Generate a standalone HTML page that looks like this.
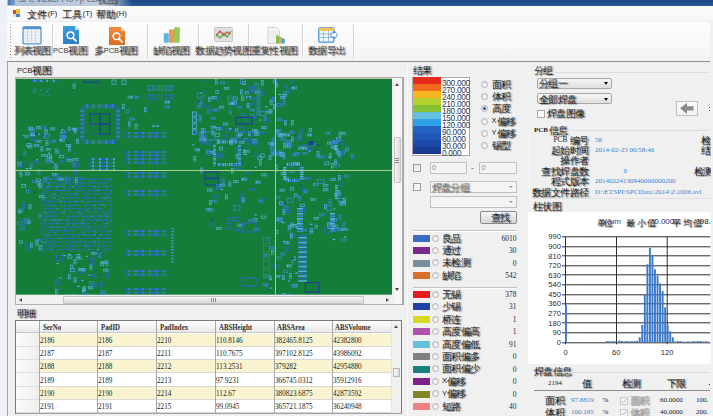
<!DOCTYPE html><html><head><meta charset="utf-8"><style>
*{margin:0;padding:0;box-sizing:border-box}
html,body{width:713px;height:416px;overflow:hidden;background:#f0f0f0;font-family:"Liberation Sans",sans-serif;color:#1a1a1a}
.a{position:absolute;white-space:nowrap}
.t{font-size:7.5px;line-height:8px}
.m{font-family:"Liberation Serif",serif}
.tri{position:absolute;width:0;height:0;border-left:2.5px solid transparent;border-right:2.5px solid transparent;border-top:3px solid #404040}
.triu{position:absolute;width:0;height:0;border-left:2.5px solid transparent;border-right:2.5px solid transparent;border-bottom:3px solid #505050}
.tril{position:absolute;width:0;height:0;border-top:2.5px solid transparent;border-bottom:2.5px solid transparent;border-right:3px solid #505050}
.trir{position:absolute;width:0;height:0;border-top:2.5px solid transparent;border-bottom:2.5px solid transparent;border-left:3px solid #505050}
.sep{position:absolute;width:2px;background:#d4d4d4;border-right:1px solid #fff}
.tb{font-size:7.5px;line-height:8px;text-align:center;color:#3c3c3c;--ls:-0.75px}
.cb{position:absolute;width:8px;height:8px;border:1px solid #9a9a9a;background:linear-gradient(#e4e4e4,#fafafa)}
.rb{position:absolute;width:7px;height:7px;border-radius:50%;border:0.8px solid #b4b4b4;background:radial-gradient(circle at 55% 60%,#fafafa 20%,#d4d4d4 100%)}
.combo{position:absolute;border:1px solid #a8a8a8;border-radius:2px;background:linear-gradient(#f6f6f6,#dedede)}
.inp{position:absolute;border:1px solid #c0c0c0;background:#f4f4f4}
.sw{position:absolute;width:17px;height:7px}
.c{position:relative;top:1.5px;font-size:1.35em;line-height:0;letter-spacing:var(--ls,-0.6px);text-shadow:1px 1px 0 rgba(40,40,40,.45),2px 0 0 rgba(40,40,40,.25)}
</style></head><body>
<div class="a" style="left:0;top:0;width:7px;height:416px;background:#edf1f7"></div>
<div class="a" style="left:7px;top:0;width:706px;height:6px;background:linear-gradient(#1c4682,#2a5a98)"></div>
<div class="a" style="left:7px;top:0;width:125px;height:6px;background:linear-gradient(90deg,#b4c2d6 0,#c2cede 80%,rgba(194,206,222,0) 100%)"></div>
<div class="a" style="left:8px;top:0;width:7px;height:5px;background:linear-gradient(90deg,#4a7ab8,#7aa0c8)"></div>
<div class="a t" style="left:19px;top:-4.5px;color:#505a68;font-size:7.5px">SPC Viewer Pro - [PCB<span class="c">视图</span>]</div>
<div class="a" style="left:7px;top:6px;width:706px;height:15px;background:linear-gradient(#fafbfc,#f4f6f8)"></div>
<div class="a" style="left:13px;top:10px;width:4px;height:4px;background:#d84030"></div>
<div class="a" style="left:16px;top:9px;width:4px;height:5px;background:#f0c030"></div>
<div class="a" style="left:16px;top:14px;width:4px;height:3px;background:#4a80d0"></div>
<div class="a" style="left:13px;top:14px;width:3px;height:3px;background:#e0e0e0"></div>
<div class="a t" style="left:27px;top:10px;font-size:7.6px;--ls:0.35px"><span class="c">文件</span>(F)</div>
<div class="a t" style="left:62px;top:10px;font-size:7.6px;--ls:0.35px"><span class="c">工具</span>(T)</div>
<div class="a t" style="left:95.5px;top:10px;font-size:7.6px;--ls:0.35px"><span class="c">帮助</span>(H)</div>
<div class="a" style="left:7px;top:21px;width:703px;height:41px;background:linear-gradient(#fdfdfd,#f8f8f8 60%,#f2f2f2);border-top:1px solid #eeeeee;border-bottom:1px solid #8e8e8e;border-top-left-radius:2px"></div>
<div class="a" style="left:10px;top:24px;width:1px;height:1px;background:#a0a0a0"></div>
<div class="a" style="left:10px;top:27px;width:1px;height:1px;background:#a0a0a0"></div>
<div class="a" style="left:10px;top:30px;width:1px;height:1px;background:#a0a0a0"></div>
<div class="a" style="left:10px;top:33px;width:1px;height:1px;background:#a0a0a0"></div>
<div class="a" style="left:10px;top:36px;width:1px;height:1px;background:#a0a0a0"></div>
<div class="a" style="left:10px;top:39px;width:1px;height:1px;background:#a0a0a0"></div>
<div class="a" style="left:10px;top:42px;width:1px;height:1px;background:#a0a0a0"></div>
<div class="a" style="left:10px;top:45px;width:1px;height:1px;background:#a0a0a0"></div>
<div class="a" style="left:10px;top:48px;width:1px;height:1px;background:#a0a0a0"></div>
<div class="a" style="left:10px;top:51px;width:1px;height:1px;background:#a0a0a0"></div>
<div class="a" style="left:10px;top:54px;width:1px;height:1px;background:#a0a0a0"></div>
<div class="a" style="left:10px;top:57px;width:1px;height:1px;background:#a0a0a0"></div>
<div class="sep" style="left:51.5px;top:24px;height:34px"></div>
<div class="sep" style="left:147px;top:24px;height:34px"></div>
<div class="sep" style="left:197.5px;top:24px;height:34px"></div>
<div class="sep" style="left:248px;top:24px;height:34px"></div>
<div class="sep" style="left:302px;top:24px;height:34px"></div>
<div class="sep" style="left:352.5px;top:24px;height:34px"></div>
<div class="a tb" style="left:2px;width:60px;top:46.5px"><span class="c">列表视图</span></div>
<div class="a tb" style="left:40px;width:60px;top:46.5px">PCB<span class="c">视图</span></div>
<div class="a tb" style="left:86px;width:60px;top:46.5px"><span class="c">多</span>PCB<span class="c">视图</span></div>
<div class="a tb" style="left:141px;width:60px;top:46.5px"><span class="c">缺陷视图</span></div>
<div class="a tb" style="left:193px;width:60px;top:46.5px"><span class="c">数据趋势视图</span></div>
<div class="a tb" style="left:244px;width:60px;top:46.5px"><span class="c">重复性视图</span></div>
<div class="a tb" style="left:296.5px;width:60px;top:46.5px"><span class="c">数据导出</span></div>
<svg class="a" style="left:22px;top:26px" width="20" height="19" viewBox="0 0 20 19"><rect x="1" y="0.8" width="18" height="17" rx="1.2" fill="#f2f4f6" stroke="#4f94d2" stroke-width="1.3"/><rect x="1" y="0.8" width="18" height="2.4" fill="#4f94d2"/><line x1="5.5" y1="3" x2="5.5" y2="17.5" stroke="#c8cdd2" stroke-width="0.8"/><line x1="9.5" y1="3" x2="9.5" y2="17.5" stroke="#c8cdd2" stroke-width="0.8"/><line x1="13.5" y1="3" x2="13.5" y2="17.5" stroke="#c8cdd2" stroke-width="0.8"/><line x1="1.5" y1="6" x2="18.5" y2="6" stroke="#d8dce0" stroke-width="0.7"/><line x1="1.5" y1="9" x2="18.5" y2="9" stroke="#d8dce0" stroke-width="0.7"/><line x1="1.5" y1="12" x2="18.5" y2="12" stroke="#d8dce0" stroke-width="0.7"/><line x1="1.5" y1="15" x2="18.5" y2="15" stroke="#d8dce0" stroke-width="0.7"/></svg>
<svg class="a" style="left:63px;top:26.2px" width="16" height="18" viewBox="0 0 16 18"><defs><linearGradient id="gb" x1="0" y1="0" x2="0" y2="1"><stop offset="0" stop-color="#3f9ddb"/><stop offset="1" stop-color="#2a7fc0"/></linearGradient></defs><path d="M0 0 H12 L16 4 V18 H0 Z" fill="url(#gb)"/><path d="M12 0 V4 H16" fill="#fff" opacity="0.6"/><circle cx="7.5" cy="9.3" r="3.3" fill="none" stroke="#fff" stroke-width="1.5"/><line x1="10" y1="11.8" x2="13" y2="14.8" stroke="#fff" stroke-width="1.8" stroke-linecap="round"/></svg>
<svg class="a" style="left:108.6px;top:27px" width="16" height="18" viewBox="0 0 16 18"><defs><linearGradient id="go" x1="0" y1="0" x2="0" y2="1"><stop offset="0" stop-color="#f28a3c"/><stop offset="1" stop-color="#dc6a22"/></linearGradient></defs><path d="M0 0 H12 L16 4 V18 H0 Z" fill="url(#go)"/><path d="M12 0 V4 H16" fill="#fff" opacity="0.6"/><circle cx="7.5" cy="9.3" r="3.3" fill="none" stroke="#fff" stroke-width="1.5"/><line x1="10" y1="11.8" x2="13" y2="14.8" stroke="#fff" stroke-width="1.8" stroke-linecap="round"/></svg>
<svg class="a" style="left:163px;top:27px" width="18" height="17" viewBox="0 0 18 17"><rect x="0.8" y="6.3" width="5" height="9.5" rx="1" fill="#5ab4e6"/><rect x="6" y="2.5" width="6" height="13.3" rx="1" fill="#ea9a50"/><rect x="11.2" y="0.3" width="5.6" height="15.5" rx="1" fill="#94cc5c"/></svg>
<svg class="a" style="left:214px;top:26.8px" width="19" height="15" viewBox="0 0 19 15"><rect x="0.5" y="0.5" width="18" height="14" rx="1" fill="#e2e2e2" stroke="#bdbdbd" stroke-width="0.8"/><line x1="1" y1="4" x2="18" y2="4" stroke="#d0d0d0" stroke-width="0.6"/><line x1="1" y1="7" x2="18" y2="7" stroke="#d0d0d0" stroke-width="0.6"/><line x1="1" y1="10" x2="18" y2="10" stroke="#d0d0d0" stroke-width="0.6"/><polyline points="2,9 6,4 10,8.5 13,5 17,7" fill="none" stroke="#dc4a4a" stroke-width="1.3"/><polyline points="2,7 6,11 10,6 13,10 17,4" fill="none" stroke="#5aaa46" stroke-width="1.3"/></svg>
<svg class="a" style="left:267px;top:26.8px" width="18" height="17" viewBox="0 0 18 17"><path d="M1 0.5 H9.5 L12.5 3.5 V16.3 H1 Z" fill="#f4f4f4" stroke="#c4c4c4" stroke-width="0.8"/><line x1="2.5" y1="5" x2="11" y2="5" stroke="#d4d4d4" stroke-width="0.7"/><line x1="2.5" y1="7.5" x2="11" y2="7.5" stroke="#d4d4d4" stroke-width="0.7"/><line x1="2.5" y1="10" x2="11" y2="10" stroke="#d4d4d4" stroke-width="0.7"/><rect x="9" y="8.5" width="3" height="8" fill="#7cc04a"/><rect x="12" y="10" width="3" height="6.5" fill="#eea040"/><rect x="15" y="11.5" width="2.6" height="5" fill="#3c98d8"/></svg>
<svg class="a" style="left:318px;top:27px" width="20" height="16" viewBox="0 0 20 16"><rect x="0.8" y="0.8" width="15" height="14.4" rx="1" fill="#f4f8fc" stroke="#4a90d0" stroke-width="1.2"/><rect x="0.8" y="0.8" width="15" height="3" fill="#f2c24a"/><line x1="5.5" y1="3.8" x2="5.5" y2="15" stroke="#7ab0e0" stroke-width="0.8"/><line x1="10.5" y1="3.8" x2="10.5" y2="15" stroke="#7ab0e0" stroke-width="0.8"/><line x1="1" y1="7" x2="15.5" y2="7" stroke="#7ab0e0" stroke-width="0.8"/><line x1="1" y1="10.5" x2="15.5" y2="10.5" stroke="#7ab0e0" stroke-width="0.8"/><path d="M13 6 L16.5 6 L16.5 4 L19.5 8 L16.5 12 L16.5 10 L13 10 Z" fill="#fff" stroke="#4a90d0" stroke-width="0.9"/></svg>
<div class="a" style="left:7px;top:62px;width:1px;height:354px;background:#a4a4a4"></div>
<div class="a" style="left:407px;top:62px;width:1px;height:354px;background:#f8f8f8"></div>
<div class="a t" style="left:17px;top:66.5px">PCB<span class="c">视图</span></div>
<div class="a" style="left:15px;top:77px;width:388px;height:228px;border:1px solid #b0b0b0;background:#f0f0f0"></div>
<svg class="a" style="left:16px;top:78px" width="376" height="216.7" viewBox="16 78 376 216.7"><rect x="16" y="78" width="376" height="216.7" fill="#157d3a"/><rect x="32.0" y="79.6" width="1.3" height="2.5" fill="#2d68cc"/><rect x="34.1" y="79.6" width="1.3" height="2.5" fill="#58b0ea"/><rect x="36.2" y="79.6" width="1.3" height="2.5" fill="#2d68cc"/><rect x="38.3" y="79.6" width="1.3" height="2.5" fill="#2d68cc"/><rect x="40.4" y="79.6" width="1.3" height="2.5" fill="#58b0ea"/><rect x="42.5" y="79.6" width="1.3" height="2.5" fill="#2d68cc"/><rect x="44.6" y="79.6" width="1.3" height="2.5" fill="#2d68cc"/><rect x="46.7" y="79.6" width="1.3" height="2.5" fill="#58b0ea"/><rect x="48.8" y="79.6" width="1.3" height="2.5" fill="#2d68cc"/><rect x="50.9" y="79.6" width="1.3" height="2.5" fill="#2d68cc"/><rect x="53.0" y="79.6" width="1.3" height="2.5" fill="#58b0ea"/><rect x="55.1" y="79.6" width="1.3" height="2.5" fill="#2d68cc"/><rect x="57.2" y="79.6" width="1.3" height="2.5" fill="#2d68cc"/><rect x="84.3" y="76.0" width="14.6" height="6.2" fill="none" stroke="#1f3e9c" stroke-width="1"/><rect x="112.0" y="80.0" width="4.0" height="4.5" fill="none" stroke="#58b0ea" stroke-width="0.7"/><rect x="122.0" y="80.0" width="4.0" height="4.5" fill="none" stroke="#58b0ea" stroke-width="0.7"/><rect x="40.4" y="89.1" width="1.2" height="1.2" fill="#3c86d8"/><rect x="48.9" y="88.5" width="1.2" height="1.2" fill="#3c86d8"/><rect x="45.9" y="90.6" width="1.2" height="1.2" fill="#3c86d8"/><rect x="33.5" y="91.6" width="1.2" height="1.2" fill="#3c86d8"/><rect x="33.0" y="91.0" width="1.2" height="1.2" fill="#3c86d8"/><rect x="33.8" y="88.6" width="1.2" height="1.2" fill="#3c86d8"/><rect x="43.0" y="93.8" width="1.2" height="1.2" fill="#3c86d8"/><rect x="35.2" y="89.6" width="1.2" height="1.2" fill="#3c86d8"/><rect x="48.3" y="94.6" width="1.2" height="1.2" fill="#3c86d8"/><rect x="47.0" y="90.8" width="1.2" height="1.2" fill="#3c86d8"/><rect x="73.0" y="84.0" width="2.2" height="1.8" fill="none" stroke="#58b0ea" stroke-width="0.6"/><rect x="73.0" y="86.8" width="2.2" height="1.8" fill="none" stroke="#58b0ea" stroke-width="0.6"/><rect x="128.0" y="96.0" width="1.8" height="2.2" fill="none" stroke="#58b0ea" stroke-width="0.6"/><rect x="130.8" y="96.0" width="1.8" height="2.2" fill="none" stroke="#58b0ea" stroke-width="0.6"/><rect x="134.0" y="96.0" width="1.8" height="2.2" fill="none" stroke="#3c86d8" stroke-width="0.6"/><rect x="136.8" y="96.0" width="1.8" height="2.2" fill="none" stroke="#3c86d8" stroke-width="0.6"/><rect x="84.3" y="104.2" width="1.3" height="4.2" fill="#2d68cc"/><rect x="86.4" y="104.2" width="1.3" height="4.2" fill="#3c86d8"/><rect x="88.5" y="104.2" width="1.3" height="4.2" fill="#2d68cc"/><rect x="90.6" y="104.2" width="1.3" height="4.2" fill="#2d68cc"/><rect x="92.7" y="104.2" width="1.3" height="4.2" fill="#3c86d8"/><rect x="94.8" y="104.2" width="1.3" height="4.2" fill="#2d68cc"/><rect x="96.9" y="104.2" width="1.3" height="4.2" fill="#2d68cc"/><rect x="99.0" y="104.2" width="1.3" height="4.2" fill="#3c86d8"/><rect x="101.1" y="104.2" width="1.3" height="4.2" fill="#2d68cc"/><rect x="103.2" y="104.2" width="1.3" height="4.2" fill="#2d68cc"/><rect x="105.3" y="104.2" width="1.3" height="4.2" fill="#3c86d8"/><rect x="107.4" y="104.2" width="1.3" height="4.2" fill="#2d68cc"/><rect x="109.5" y="104.2" width="1.3" height="4.2" fill="#2d68cc"/><rect x="111.6" y="104.2" width="1.3" height="4.2" fill="#3c86d8"/><rect x="113.7" y="104.2" width="1.3" height="4.2" fill="#2d68cc"/><rect x="84.3" y="139.8" width="1.3" height="4.2" fill="#2d68cc"/><rect x="86.4" y="139.8" width="1.3" height="4.2" fill="#3c86d8"/><rect x="88.5" y="139.8" width="1.3" height="4.2" fill="#2d68cc"/><rect x="90.6" y="139.8" width="1.3" height="4.2" fill="#2d68cc"/><rect x="92.7" y="139.8" width="1.3" height="4.2" fill="#3c86d8"/><rect x="94.8" y="139.8" width="1.3" height="4.2" fill="#2d68cc"/><rect x="96.9" y="139.8" width="1.3" height="4.2" fill="#2d68cc"/><rect x="99.0" y="139.8" width="1.3" height="4.2" fill="#3c86d8"/><rect x="101.1" y="139.8" width="1.3" height="4.2" fill="#2d68cc"/><rect x="103.2" y="139.8" width="1.3" height="4.2" fill="#2d68cc"/><rect x="105.3" y="139.8" width="1.3" height="4.2" fill="#3c86d8"/><rect x="107.4" y="139.8" width="1.3" height="4.2" fill="#2d68cc"/><rect x="109.5" y="139.8" width="1.3" height="4.2" fill="#2d68cc"/><rect x="111.6" y="139.8" width="1.3" height="4.2" fill="#3c86d8"/><rect x="113.7" y="139.8" width="1.3" height="4.2" fill="#2d68cc"/><rect x="80.3" y="108.5" width="4.2" height="1.3" fill="#2d68cc"/><rect x="80.3" y="110.6" width="4.2" height="1.3" fill="#3c86d8"/><rect x="80.3" y="112.7" width="4.2" height="1.3" fill="#2d68cc"/><rect x="80.3" y="114.8" width="4.2" height="1.3" fill="#3c86d8"/><rect x="80.3" y="116.9" width="4.2" height="1.3" fill="#2d68cc"/><rect x="80.3" y="119.0" width="4.2" height="1.3" fill="#3c86d8"/><rect x="80.3" y="121.1" width="4.2" height="1.3" fill="#2d68cc"/><rect x="80.3" y="123.2" width="4.2" height="1.3" fill="#3c86d8"/><rect x="80.3" y="125.3" width="4.2" height="1.3" fill="#2d68cc"/><rect x="80.3" y="127.4" width="4.2" height="1.3" fill="#3c86d8"/><rect x="80.3" y="129.5" width="4.2" height="1.3" fill="#2d68cc"/><rect x="80.3" y="131.6" width="4.2" height="1.3" fill="#3c86d8"/><rect x="80.3" y="133.7" width="4.2" height="1.3" fill="#2d68cc"/><rect x="80.3" y="135.8" width="4.2" height="1.3" fill="#3c86d8"/><rect x="80.3" y="137.9" width="4.2" height="1.3" fill="#2d68cc"/><rect x="115.9" y="108.5" width="4.2" height="1.3" fill="#2d68cc"/><rect x="115.9" y="110.6" width="4.2" height="1.3" fill="#3c86d8"/><rect x="115.9" y="112.7" width="4.2" height="1.3" fill="#2d68cc"/><rect x="115.9" y="114.8" width="4.2" height="1.3" fill="#3c86d8"/><rect x="115.9" y="116.9" width="4.2" height="1.3" fill="#2d68cc"/><rect x="115.9" y="119.0" width="4.2" height="1.3" fill="#3c86d8"/><rect x="115.9" y="121.1" width="4.2" height="1.3" fill="#2d68cc"/><rect x="115.9" y="123.2" width="4.2" height="1.3" fill="#3c86d8"/><rect x="115.9" y="125.3" width="4.2" height="1.3" fill="#2d68cc"/><rect x="115.9" y="127.4" width="4.2" height="1.3" fill="#3c86d8"/><rect x="115.9" y="129.5" width="4.2" height="1.3" fill="#2d68cc"/><rect x="115.9" y="131.6" width="4.2" height="1.3" fill="#3c86d8"/><rect x="115.9" y="133.7" width="4.2" height="1.3" fill="#2d68cc"/><rect x="115.9" y="135.8" width="4.2" height="1.3" fill="#3c86d8"/><rect x="115.9" y="137.9" width="4.2" height="1.3" fill="#2d68cc"/><rect x="89.8" y="114.0" width="10.0" height="10.0" fill="none" stroke="#1f3e9c" stroke-width="1.1"/><rect x="99.8" y="114.0" width="10.0" height="10.0" fill="none" stroke="#1f3e9c" stroke-width="1.1"/><rect x="89.8" y="124.0" width="10.0" height="10.0" fill="none" stroke="#2a5a90" stroke-width="0.9"/><rect x="99.8" y="124.0" width="10.0" height="10.0" fill="none" stroke="#1f3e9c" stroke-width="1.1"/><rect x="126.0" y="132.0" width="1.5" height="2.2" fill="#2d68cc"/><rect x="128.3" y="132.0" width="1.5" height="2.2" fill="#3c86d8"/><rect x="130.6" y="132.0" width="1.5" height="2.2" fill="#2d68cc"/><rect x="132.9" y="132.0" width="1.5" height="2.2" fill="#2d68cc"/><rect x="135.2" y="132.0" width="1.5" height="2.2" fill="#3c86d8"/><rect x="137.5" y="132.0" width="1.5" height="2.2" fill="#2d68cc"/><rect x="139.8" y="132.0" width="1.5" height="2.2" fill="#2d68cc"/><rect x="142.1" y="132.0" width="1.5" height="2.2" fill="#3c86d8"/><rect x="144.4" y="132.0" width="1.5" height="2.2" fill="#2d68cc"/><rect x="146.7" y="132.0" width="1.5" height="2.2" fill="#2d68cc"/><rect x="149.0" y="132.0" width="1.5" height="2.2" fill="#3c86d8"/><rect x="151.3" y="132.0" width="1.5" height="2.2" fill="#2d68cc"/><rect x="153.6" y="132.0" width="1.5" height="2.2" fill="#2d68cc"/><rect x="155.9" y="132.0" width="1.5" height="2.2" fill="#3c86d8"/><rect x="158.2" y="132.0" width="1.5" height="2.2" fill="#2d68cc"/><rect x="160.5" y="132.0" width="1.5" height="2.2" fill="#2d68cc"/><rect x="162.8" y="132.0" width="1.5" height="2.2" fill="#3c86d8"/><rect x="165.1" y="132.0" width="1.5" height="2.2" fill="#2d68cc"/><rect x="126.0" y="135.5" width="1.5" height="2.2" fill="#2d68cc"/><rect x="128.3" y="135.5" width="1.5" height="2.2" fill="#3c86d8"/><rect x="130.6" y="135.5" width="1.5" height="2.2" fill="#2d68cc"/><rect x="132.9" y="135.5" width="1.5" height="2.2" fill="#2d68cc"/><rect x="135.2" y="135.5" width="1.5" height="2.2" fill="#3c86d8"/><rect x="137.5" y="135.5" width="1.5" height="2.2" fill="#2d68cc"/><rect x="139.8" y="135.5" width="1.5" height="2.2" fill="#2d68cc"/><rect x="142.1" y="135.5" width="1.5" height="2.2" fill="#3c86d8"/><rect x="144.4" y="135.5" width="1.5" height="2.2" fill="#2d68cc"/><rect x="146.7" y="135.5" width="1.5" height="2.2" fill="#2d68cc"/><rect x="149.0" y="135.5" width="1.5" height="2.2" fill="#3c86d8"/><rect x="151.3" y="135.5" width="1.5" height="2.2" fill="#2d68cc"/><rect x="153.6" y="135.5" width="1.5" height="2.2" fill="#2d68cc"/><rect x="155.9" y="135.5" width="1.5" height="2.2" fill="#3c86d8"/><rect x="158.2" y="135.5" width="1.5" height="2.2" fill="#2d68cc"/><rect x="160.5" y="135.5" width="1.5" height="2.2" fill="#2d68cc"/><rect x="162.8" y="135.5" width="1.5" height="2.2" fill="#3c86d8"/><rect x="165.1" y="135.5" width="1.5" height="2.2" fill="#2d68cc"/><rect x="126.0" y="151.0" width="1.5" height="2.2" fill="#2d68cc"/><rect x="128.3" y="151.0" width="1.5" height="2.2" fill="#3c86d8"/><rect x="130.6" y="151.0" width="1.5" height="2.2" fill="#2d68cc"/><rect x="132.9" y="151.0" width="1.5" height="2.2" fill="#2d68cc"/><rect x="135.2" y="151.0" width="1.5" height="2.2" fill="#3c86d8"/><rect x="137.5" y="151.0" width="1.5" height="2.2" fill="#2d68cc"/><rect x="139.8" y="151.0" width="1.5" height="2.2" fill="#2d68cc"/><rect x="142.1" y="151.0" width="1.5" height="2.2" fill="#3c86d8"/><rect x="144.4" y="151.0" width="1.5" height="2.2" fill="#2d68cc"/><rect x="146.7" y="151.0" width="1.5" height="2.2" fill="#2d68cc"/><rect x="149.0" y="151.0" width="1.5" height="2.2" fill="#3c86d8"/><rect x="151.3" y="151.0" width="1.5" height="2.2" fill="#2d68cc"/><rect x="153.6" y="151.0" width="1.5" height="2.2" fill="#2d68cc"/><rect x="155.9" y="151.0" width="1.5" height="2.2" fill="#3c86d8"/><rect x="158.2" y="151.0" width="1.5" height="2.2" fill="#2d68cc"/><rect x="160.5" y="151.0" width="1.5" height="2.2" fill="#2d68cc"/><rect x="162.8" y="151.0" width="1.5" height="2.2" fill="#3c86d8"/><rect x="165.1" y="151.0" width="1.5" height="2.2" fill="#2d68cc"/><rect x="126.0" y="154.5" width="1.5" height="2.2" fill="#2d68cc"/><rect x="128.3" y="154.5" width="1.5" height="2.2" fill="#3c86d8"/><rect x="130.6" y="154.5" width="1.5" height="2.2" fill="#2d68cc"/><rect x="132.9" y="154.5" width="1.5" height="2.2" fill="#2d68cc"/><rect x="135.2" y="154.5" width="1.5" height="2.2" fill="#3c86d8"/><rect x="137.5" y="154.5" width="1.5" height="2.2" fill="#2d68cc"/><rect x="139.8" y="154.5" width="1.5" height="2.2" fill="#2d68cc"/><rect x="142.1" y="154.5" width="1.5" height="2.2" fill="#3c86d8"/><rect x="144.4" y="154.5" width="1.5" height="2.2" fill="#2d68cc"/><rect x="146.7" y="154.5" width="1.5" height="2.2" fill="#2d68cc"/><rect x="149.0" y="154.5" width="1.5" height="2.2" fill="#3c86d8"/><rect x="151.3" y="154.5" width="1.5" height="2.2" fill="#2d68cc"/><rect x="153.6" y="154.5" width="1.5" height="2.2" fill="#2d68cc"/><rect x="155.9" y="154.5" width="1.5" height="2.2" fill="#3c86d8"/><rect x="158.2" y="154.5" width="1.5" height="2.2" fill="#2d68cc"/><rect x="160.5" y="154.5" width="1.5" height="2.2" fill="#2d68cc"/><rect x="162.8" y="154.5" width="1.5" height="2.2" fill="#3c86d8"/><rect x="165.1" y="154.5" width="1.5" height="2.2" fill="#2d68cc"/><rect x="126.0" y="158.0" width="1.5" height="2.2" fill="#2d68cc"/><rect x="128.3" y="158.0" width="1.5" height="2.2" fill="#3c86d8"/><rect x="130.6" y="158.0" width="1.5" height="2.2" fill="#2d68cc"/><rect x="132.9" y="158.0" width="1.5" height="2.2" fill="#2d68cc"/><rect x="135.2" y="158.0" width="1.5" height="2.2" fill="#3c86d8"/><rect x="137.5" y="158.0" width="1.5" height="2.2" fill="#2d68cc"/><rect x="139.8" y="158.0" width="1.5" height="2.2" fill="#2d68cc"/><rect x="142.1" y="158.0" width="1.5" height="2.2" fill="#3c86d8"/><rect x="144.4" y="158.0" width="1.5" height="2.2" fill="#2d68cc"/><rect x="146.7" y="158.0" width="1.5" height="2.2" fill="#2d68cc"/><rect x="149.0" y="158.0" width="1.5" height="2.2" fill="#3c86d8"/><rect x="151.3" y="158.0" width="1.5" height="2.2" fill="#2d68cc"/><rect x="153.6" y="158.0" width="1.5" height="2.2" fill="#2d68cc"/><rect x="155.9" y="158.0" width="1.5" height="2.2" fill="#3c86d8"/><rect x="158.2" y="158.0" width="1.5" height="2.2" fill="#2d68cc"/><rect x="160.5" y="158.0" width="1.5" height="2.2" fill="#2d68cc"/><rect x="162.8" y="158.0" width="1.5" height="2.2" fill="#3c86d8"/><rect x="165.1" y="158.0" width="1.5" height="2.2" fill="#2d68cc"/><rect x="126.0" y="161.5" width="1.5" height="2.2" fill="#2d68cc"/><rect x="128.3" y="161.5" width="1.5" height="2.2" fill="#3c86d8"/><rect x="130.6" y="161.5" width="1.5" height="2.2" fill="#2d68cc"/><rect x="132.9" y="161.5" width="1.5" height="2.2" fill="#2d68cc"/><rect x="135.2" y="161.5" width="1.5" height="2.2" fill="#3c86d8"/><rect x="137.5" y="161.5" width="1.5" height="2.2" fill="#2d68cc"/><rect x="139.8" y="161.5" width="1.5" height="2.2" fill="#2d68cc"/><rect x="142.1" y="161.5" width="1.5" height="2.2" fill="#3c86d8"/><rect x="144.4" y="161.5" width="1.5" height="2.2" fill="#2d68cc"/><rect x="146.7" y="161.5" width="1.5" height="2.2" fill="#2d68cc"/><rect x="149.0" y="161.5" width="1.5" height="2.2" fill="#3c86d8"/><rect x="151.3" y="161.5" width="1.5" height="2.2" fill="#2d68cc"/><rect x="153.6" y="161.5" width="1.5" height="2.2" fill="#2d68cc"/><rect x="155.9" y="161.5" width="1.5" height="2.2" fill="#3c86d8"/><rect x="158.2" y="161.5" width="1.5" height="2.2" fill="#2d68cc"/><rect x="160.5" y="161.5" width="1.5" height="2.2" fill="#2d68cc"/><rect x="162.8" y="161.5" width="1.5" height="2.2" fill="#3c86d8"/><rect x="165.1" y="161.5" width="1.5" height="2.2" fill="#2d68cc"/><rect x="126.0" y="172.0" width="1.5" height="2.2" fill="#2d68cc"/><rect x="128.3" y="172.0" width="1.5" height="2.2" fill="#3c86d8"/><rect x="130.6" y="172.0" width="1.5" height="2.2" fill="#2d68cc"/><rect x="132.9" y="172.0" width="1.5" height="2.2" fill="#2d68cc"/><rect x="135.2" y="172.0" width="1.5" height="2.2" fill="#3c86d8"/><rect x="137.5" y="172.0" width="1.5" height="2.2" fill="#2d68cc"/><rect x="139.8" y="172.0" width="1.5" height="2.2" fill="#2d68cc"/><rect x="142.1" y="172.0" width="1.5" height="2.2" fill="#3c86d8"/><rect x="144.4" y="172.0" width="1.5" height="2.2" fill="#2d68cc"/><rect x="146.7" y="172.0" width="1.5" height="2.2" fill="#2d68cc"/><rect x="149.0" y="172.0" width="1.5" height="2.2" fill="#3c86d8"/><rect x="151.3" y="172.0" width="1.5" height="2.2" fill="#2d68cc"/><rect x="153.6" y="172.0" width="1.5" height="2.2" fill="#2d68cc"/><rect x="155.9" y="172.0" width="1.5" height="2.2" fill="#3c86d8"/><rect x="158.2" y="172.0" width="1.5" height="2.2" fill="#2d68cc"/><rect x="160.5" y="172.0" width="1.5" height="2.2" fill="#2d68cc"/><rect x="162.8" y="172.0" width="1.5" height="2.2" fill="#3c86d8"/><rect x="165.1" y="172.0" width="1.5" height="2.2" fill="#2d68cc"/><rect x="126.0" y="175.5" width="1.5" height="2.2" fill="#2d68cc"/><rect x="128.3" y="175.5" width="1.5" height="2.2" fill="#3c86d8"/><rect x="130.6" y="175.5" width="1.5" height="2.2" fill="#2d68cc"/><rect x="132.9" y="175.5" width="1.5" height="2.2" fill="#2d68cc"/><rect x="135.2" y="175.5" width="1.5" height="2.2" fill="#3c86d8"/><rect x="137.5" y="175.5" width="1.5" height="2.2" fill="#2d68cc"/><rect x="139.8" y="175.5" width="1.5" height="2.2" fill="#2d68cc"/><rect x="142.1" y="175.5" width="1.5" height="2.2" fill="#3c86d8"/><rect x="144.4" y="175.5" width="1.5" height="2.2" fill="#2d68cc"/><rect x="146.7" y="175.5" width="1.5" height="2.2" fill="#2d68cc"/><rect x="149.0" y="175.5" width="1.5" height="2.2" fill="#3c86d8"/><rect x="151.3" y="175.5" width="1.5" height="2.2" fill="#2d68cc"/><rect x="153.6" y="175.5" width="1.5" height="2.2" fill="#2d68cc"/><rect x="155.9" y="175.5" width="1.5" height="2.2" fill="#3c86d8"/><rect x="158.2" y="175.5" width="1.5" height="2.2" fill="#2d68cc"/><rect x="160.5" y="175.5" width="1.5" height="2.2" fill="#2d68cc"/><rect x="162.8" y="175.5" width="1.5" height="2.2" fill="#3c86d8"/><rect x="165.1" y="175.5" width="1.5" height="2.2" fill="#2d68cc"/><rect x="126.0" y="190.0" width="1.5" height="2.2" fill="#2d68cc"/><rect x="128.3" y="190.0" width="1.5" height="2.2" fill="#3c86d8"/><rect x="130.6" y="190.0" width="1.5" height="2.2" fill="#2d68cc"/><rect x="132.9" y="190.0" width="1.5" height="2.2" fill="#2d68cc"/><rect x="135.2" y="190.0" width="1.5" height="2.2" fill="#3c86d8"/><rect x="137.5" y="190.0" width="1.5" height="2.2" fill="#2d68cc"/><rect x="139.8" y="190.0" width="1.5" height="2.2" fill="#2d68cc"/><rect x="142.1" y="190.0" width="1.5" height="2.2" fill="#3c86d8"/><rect x="144.4" y="190.0" width="1.5" height="2.2" fill="#2d68cc"/><rect x="146.7" y="190.0" width="1.5" height="2.2" fill="#2d68cc"/><rect x="149.0" y="190.0" width="1.5" height="2.2" fill="#3c86d8"/><rect x="151.3" y="190.0" width="1.5" height="2.2" fill="#2d68cc"/><rect x="153.6" y="190.0" width="1.5" height="2.2" fill="#2d68cc"/><rect x="155.9" y="190.0" width="1.5" height="2.2" fill="#3c86d8"/><rect x="158.2" y="190.0" width="1.5" height="2.2" fill="#2d68cc"/><rect x="160.5" y="190.0" width="1.5" height="2.2" fill="#2d68cc"/><rect x="162.8" y="190.0" width="1.5" height="2.2" fill="#3c86d8"/><rect x="165.1" y="190.0" width="1.5" height="2.2" fill="#2d68cc"/><rect x="126.0" y="193.5" width="1.5" height="2.2" fill="#2d68cc"/><rect x="128.3" y="193.5" width="1.5" height="2.2" fill="#3c86d8"/><rect x="130.6" y="193.5" width="1.5" height="2.2" fill="#2d68cc"/><rect x="132.9" y="193.5" width="1.5" height="2.2" fill="#2d68cc"/><rect x="135.2" y="193.5" width="1.5" height="2.2" fill="#3c86d8"/><rect x="137.5" y="193.5" width="1.5" height="2.2" fill="#2d68cc"/><rect x="139.8" y="193.5" width="1.5" height="2.2" fill="#2d68cc"/><rect x="142.1" y="193.5" width="1.5" height="2.2" fill="#3c86d8"/><rect x="144.4" y="193.5" width="1.5" height="2.2" fill="#2d68cc"/><rect x="146.7" y="193.5" width="1.5" height="2.2" fill="#2d68cc"/><rect x="149.0" y="193.5" width="1.5" height="2.2" fill="#3c86d8"/><rect x="151.3" y="193.5" width="1.5" height="2.2" fill="#2d68cc"/><rect x="153.6" y="193.5" width="1.5" height="2.2" fill="#2d68cc"/><rect x="155.9" y="193.5" width="1.5" height="2.2" fill="#3c86d8"/><rect x="158.2" y="193.5" width="1.5" height="2.2" fill="#2d68cc"/><rect x="160.5" y="193.5" width="1.5" height="2.2" fill="#2d68cc"/><rect x="162.8" y="193.5" width="1.5" height="2.2" fill="#3c86d8"/><rect x="165.1" y="193.5" width="1.5" height="2.2" fill="#2d68cc"/><rect x="126.0" y="230.0" width="1.5" height="2.2" fill="#2d68cc"/><rect x="128.3" y="230.0" width="1.5" height="2.2" fill="#3c86d8"/><rect x="130.6" y="230.0" width="1.5" height="2.2" fill="#2d68cc"/><rect x="132.9" y="230.0" width="1.5" height="2.2" fill="#2d68cc"/><rect x="135.2" y="230.0" width="1.5" height="2.2" fill="#3c86d8"/><rect x="137.5" y="230.0" width="1.5" height="2.2" fill="#2d68cc"/><rect x="139.8" y="230.0" width="1.5" height="2.2" fill="#2d68cc"/><rect x="142.1" y="230.0" width="1.5" height="2.2" fill="#3c86d8"/><rect x="144.4" y="230.0" width="1.5" height="2.2" fill="#2d68cc"/><rect x="146.7" y="230.0" width="1.5" height="2.2" fill="#2d68cc"/><rect x="149.0" y="230.0" width="1.5" height="2.2" fill="#3c86d8"/><rect x="151.3" y="230.0" width="1.5" height="2.2" fill="#2d68cc"/><rect x="153.6" y="230.0" width="1.5" height="2.2" fill="#2d68cc"/><rect x="155.9" y="230.0" width="1.5" height="2.2" fill="#3c86d8"/><rect x="158.2" y="230.0" width="1.5" height="2.2" fill="#2d68cc"/><rect x="160.5" y="230.0" width="1.5" height="2.2" fill="#2d68cc"/><rect x="162.8" y="230.0" width="1.5" height="2.2" fill="#3c86d8"/><rect x="165.1" y="230.0" width="1.5" height="2.2" fill="#2d68cc"/><rect x="126.0" y="233.5" width="1.5" height="2.2" fill="#2d68cc"/><rect x="128.3" y="233.5" width="1.5" height="2.2" fill="#3c86d8"/><rect x="130.6" y="233.5" width="1.5" height="2.2" fill="#2d68cc"/><rect x="132.9" y="233.5" width="1.5" height="2.2" fill="#2d68cc"/><rect x="135.2" y="233.5" width="1.5" height="2.2" fill="#3c86d8"/><rect x="137.5" y="233.5" width="1.5" height="2.2" fill="#2d68cc"/><rect x="139.8" y="233.5" width="1.5" height="2.2" fill="#2d68cc"/><rect x="142.1" y="233.5" width="1.5" height="2.2" fill="#3c86d8"/><rect x="144.4" y="233.5" width="1.5" height="2.2" fill="#2d68cc"/><rect x="146.7" y="233.5" width="1.5" height="2.2" fill="#2d68cc"/><rect x="149.0" y="233.5" width="1.5" height="2.2" fill="#3c86d8"/><rect x="151.3" y="233.5" width="1.5" height="2.2" fill="#2d68cc"/><rect x="153.6" y="233.5" width="1.5" height="2.2" fill="#2d68cc"/><rect x="155.9" y="233.5" width="1.5" height="2.2" fill="#3c86d8"/><rect x="158.2" y="233.5" width="1.5" height="2.2" fill="#2d68cc"/><rect x="160.5" y="233.5" width="1.5" height="2.2" fill="#2d68cc"/><rect x="162.8" y="233.5" width="1.5" height="2.2" fill="#3c86d8"/><rect x="165.1" y="233.5" width="1.5" height="2.2" fill="#2d68cc"/><rect x="126.0" y="250.0" width="1.5" height="2.2" fill="#2d68cc"/><rect x="128.3" y="250.0" width="1.5" height="2.2" fill="#3c86d8"/><rect x="130.6" y="250.0" width="1.5" height="2.2" fill="#2d68cc"/><rect x="132.9" y="250.0" width="1.5" height="2.2" fill="#2d68cc"/><rect x="135.2" y="250.0" width="1.5" height="2.2" fill="#3c86d8"/><rect x="137.5" y="250.0" width="1.5" height="2.2" fill="#2d68cc"/><rect x="139.8" y="250.0" width="1.5" height="2.2" fill="#2d68cc"/><rect x="142.1" y="250.0" width="1.5" height="2.2" fill="#3c86d8"/><rect x="144.4" y="250.0" width="1.5" height="2.2" fill="#2d68cc"/><rect x="146.7" y="250.0" width="1.5" height="2.2" fill="#2d68cc"/><rect x="149.0" y="250.0" width="1.5" height="2.2" fill="#3c86d8"/><rect x="151.3" y="250.0" width="1.5" height="2.2" fill="#2d68cc"/><rect x="153.6" y="250.0" width="1.5" height="2.2" fill="#2d68cc"/><rect x="155.9" y="250.0" width="1.5" height="2.2" fill="#3c86d8"/><rect x="158.2" y="250.0" width="1.5" height="2.2" fill="#2d68cc"/><rect x="160.5" y="250.0" width="1.5" height="2.2" fill="#2d68cc"/><rect x="162.8" y="250.0" width="1.5" height="2.2" fill="#3c86d8"/><rect x="165.1" y="250.0" width="1.5" height="2.2" fill="#2d68cc"/><rect x="126.0" y="253.5" width="1.5" height="2.2" fill="#2d68cc"/><rect x="128.3" y="253.5" width="1.5" height="2.2" fill="#3c86d8"/><rect x="130.6" y="253.5" width="1.5" height="2.2" fill="#2d68cc"/><rect x="132.9" y="253.5" width="1.5" height="2.2" fill="#2d68cc"/><rect x="135.2" y="253.5" width="1.5" height="2.2" fill="#3c86d8"/><rect x="137.5" y="253.5" width="1.5" height="2.2" fill="#2d68cc"/><rect x="139.8" y="253.5" width="1.5" height="2.2" fill="#2d68cc"/><rect x="142.1" y="253.5" width="1.5" height="2.2" fill="#3c86d8"/><rect x="144.4" y="253.5" width="1.5" height="2.2" fill="#2d68cc"/><rect x="146.7" y="253.5" width="1.5" height="2.2" fill="#2d68cc"/><rect x="149.0" y="253.5" width="1.5" height="2.2" fill="#3c86d8"/><rect x="151.3" y="253.5" width="1.5" height="2.2" fill="#2d68cc"/><rect x="153.6" y="253.5" width="1.5" height="2.2" fill="#2d68cc"/><rect x="155.9" y="253.5" width="1.5" height="2.2" fill="#3c86d8"/><rect x="158.2" y="253.5" width="1.5" height="2.2" fill="#2d68cc"/><rect x="160.5" y="253.5" width="1.5" height="2.2" fill="#2d68cc"/><rect x="162.8" y="253.5" width="1.5" height="2.2" fill="#3c86d8"/><rect x="165.1" y="253.5" width="1.5" height="2.2" fill="#2d68cc"/><rect x="126.0" y="270.0" width="1.5" height="2.2" fill="#2d68cc"/><rect x="128.3" y="270.0" width="1.5" height="2.2" fill="#3c86d8"/><rect x="130.6" y="270.0" width="1.5" height="2.2" fill="#2d68cc"/><rect x="132.9" y="270.0" width="1.5" height="2.2" fill="#2d68cc"/><rect x="135.2" y="270.0" width="1.5" height="2.2" fill="#3c86d8"/><rect x="137.5" y="270.0" width="1.5" height="2.2" fill="#2d68cc"/><rect x="139.8" y="270.0" width="1.5" height="2.2" fill="#2d68cc"/><rect x="142.1" y="270.0" width="1.5" height="2.2" fill="#3c86d8"/><rect x="144.4" y="270.0" width="1.5" height="2.2" fill="#2d68cc"/><rect x="146.7" y="270.0" width="1.5" height="2.2" fill="#2d68cc"/><rect x="149.0" y="270.0" width="1.5" height="2.2" fill="#3c86d8"/><rect x="151.3" y="270.0" width="1.5" height="2.2" fill="#2d68cc"/><rect x="153.6" y="270.0" width="1.5" height="2.2" fill="#2d68cc"/><rect x="155.9" y="270.0" width="1.5" height="2.2" fill="#3c86d8"/><rect x="158.2" y="270.0" width="1.5" height="2.2" fill="#2d68cc"/><rect x="160.5" y="270.0" width="1.5" height="2.2" fill="#2d68cc"/><rect x="162.8" y="270.0" width="1.5" height="2.2" fill="#3c86d8"/><rect x="165.1" y="270.0" width="1.5" height="2.2" fill="#2d68cc"/><rect x="126.0" y="273.5" width="1.5" height="2.2" fill="#2d68cc"/><rect x="128.3" y="273.5" width="1.5" height="2.2" fill="#3c86d8"/><rect x="130.6" y="273.5" width="1.5" height="2.2" fill="#2d68cc"/><rect x="132.9" y="273.5" width="1.5" height="2.2" fill="#2d68cc"/><rect x="135.2" y="273.5" width="1.5" height="2.2" fill="#3c86d8"/><rect x="137.5" y="273.5" width="1.5" height="2.2" fill="#2d68cc"/><rect x="139.8" y="273.5" width="1.5" height="2.2" fill="#2d68cc"/><rect x="142.1" y="273.5" width="1.5" height="2.2" fill="#3c86d8"/><rect x="144.4" y="273.5" width="1.5" height="2.2" fill="#2d68cc"/><rect x="146.7" y="273.5" width="1.5" height="2.2" fill="#2d68cc"/><rect x="149.0" y="273.5" width="1.5" height="2.2" fill="#3c86d8"/><rect x="151.3" y="273.5" width="1.5" height="2.2" fill="#2d68cc"/><rect x="153.6" y="273.5" width="1.5" height="2.2" fill="#2d68cc"/><rect x="155.9" y="273.5" width="1.5" height="2.2" fill="#3c86d8"/><rect x="158.2" y="273.5" width="1.5" height="2.2" fill="#2d68cc"/><rect x="160.5" y="273.5" width="1.5" height="2.2" fill="#2d68cc"/><rect x="162.8" y="273.5" width="1.5" height="2.2" fill="#3c86d8"/><rect x="165.1" y="273.5" width="1.5" height="2.2" fill="#2d68cc"/><rect x="126.0" y="288.0" width="1.5" height="2.2" fill="#2d68cc"/><rect x="128.3" y="288.0" width="1.5" height="2.2" fill="#3c86d8"/><rect x="130.6" y="288.0" width="1.5" height="2.2" fill="#2d68cc"/><rect x="132.9" y="288.0" width="1.5" height="2.2" fill="#2d68cc"/><rect x="135.2" y="288.0" width="1.5" height="2.2" fill="#3c86d8"/><rect x="137.5" y="288.0" width="1.5" height="2.2" fill="#2d68cc"/><rect x="139.8" y="288.0" width="1.5" height="2.2" fill="#2d68cc"/><rect x="142.1" y="288.0" width="1.5" height="2.2" fill="#3c86d8"/><rect x="144.4" y="288.0" width="1.5" height="2.2" fill="#2d68cc"/><rect x="146.7" y="288.0" width="1.5" height="2.2" fill="#2d68cc"/><rect x="149.0" y="288.0" width="1.5" height="2.2" fill="#3c86d8"/><rect x="151.3" y="288.0" width="1.5" height="2.2" fill="#2d68cc"/><rect x="153.6" y="288.0" width="1.5" height="2.2" fill="#2d68cc"/><rect x="155.9" y="288.0" width="1.5" height="2.2" fill="#3c86d8"/><rect x="158.2" y="288.0" width="1.5" height="2.2" fill="#2d68cc"/><rect x="160.5" y="288.0" width="1.5" height="2.2" fill="#2d68cc"/><rect x="162.8" y="288.0" width="1.5" height="2.2" fill="#3c86d8"/><rect x="165.1" y="288.0" width="1.5" height="2.2" fill="#2d68cc"/><rect x="126.0" y="291.5" width="1.5" height="2.2" fill="#2d68cc"/><rect x="128.3" y="291.5" width="1.5" height="2.2" fill="#3c86d8"/><rect x="130.6" y="291.5" width="1.5" height="2.2" fill="#2d68cc"/><rect x="132.9" y="291.5" width="1.5" height="2.2" fill="#2d68cc"/><rect x="135.2" y="291.5" width="1.5" height="2.2" fill="#3c86d8"/><rect x="137.5" y="291.5" width="1.5" height="2.2" fill="#2d68cc"/><rect x="139.8" y="291.5" width="1.5" height="2.2" fill="#2d68cc"/><rect x="142.1" y="291.5" width="1.5" height="2.2" fill="#3c86d8"/><rect x="144.4" y="291.5" width="1.5" height="2.2" fill="#2d68cc"/><rect x="146.7" y="291.5" width="1.5" height="2.2" fill="#2d68cc"/><rect x="149.0" y="291.5" width="1.5" height="2.2" fill="#3c86d8"/><rect x="151.3" y="291.5" width="1.5" height="2.2" fill="#2d68cc"/><rect x="153.6" y="291.5" width="1.5" height="2.2" fill="#2d68cc"/><rect x="155.9" y="291.5" width="1.5" height="2.2" fill="#3c86d8"/><rect x="158.2" y="291.5" width="1.5" height="2.2" fill="#2d68cc"/><rect x="160.5" y="291.5" width="1.5" height="2.2" fill="#2d68cc"/><rect x="162.8" y="291.5" width="1.5" height="2.2" fill="#3c86d8"/><rect x="165.1" y="291.5" width="1.5" height="2.2" fill="#2d68cc"/><rect x="90.0" y="158.0" width="1.5" height="2.2" fill="#2d68cc"/><rect x="92.3" y="158.0" width="1.5" height="2.2" fill="#58b0ea"/><rect x="94.6" y="158.0" width="1.5" height="2.2" fill="#2d68cc"/><rect x="96.9" y="158.0" width="1.5" height="2.2" fill="#2d68cc"/><rect x="99.2" y="158.0" width="1.5" height="2.2" fill="#58b0ea"/><rect x="101.5" y="158.0" width="1.5" height="2.2" fill="#2d68cc"/><rect x="103.8" y="158.0" width="1.5" height="2.2" fill="#2d68cc"/><rect x="106.1" y="158.0" width="1.5" height="2.2" fill="#58b0ea"/><rect x="108.4" y="158.0" width="1.5" height="2.2" fill="#2d68cc"/><rect x="110.7" y="158.0" width="1.5" height="2.2" fill="#2d68cc"/><rect x="113.0" y="158.0" width="1.5" height="2.2" fill="#58b0ea"/><rect x="90.0" y="161.5" width="1.5" height="2.2" fill="#2d68cc"/><rect x="92.3" y="161.5" width="1.5" height="2.2" fill="#58b0ea"/><rect x="94.6" y="161.5" width="1.5" height="2.2" fill="#2d68cc"/><rect x="96.9" y="161.5" width="1.5" height="2.2" fill="#2d68cc"/><rect x="99.2" y="161.5" width="1.5" height="2.2" fill="#58b0ea"/><rect x="101.5" y="161.5" width="1.5" height="2.2" fill="#2d68cc"/><rect x="103.8" y="161.5" width="1.5" height="2.2" fill="#2d68cc"/><rect x="106.1" y="161.5" width="1.5" height="2.2" fill="#58b0ea"/><rect x="108.4" y="161.5" width="1.5" height="2.2" fill="#2d68cc"/><rect x="110.7" y="161.5" width="1.5" height="2.2" fill="#2d68cc"/><rect x="113.0" y="161.5" width="1.5" height="2.2" fill="#58b0ea"/><rect x="90.0" y="165.0" width="1.5" height="2.2" fill="#2d68cc"/><rect x="92.3" y="165.0" width="1.5" height="2.2" fill="#58b0ea"/><rect x="94.6" y="165.0" width="1.5" height="2.2" fill="#2d68cc"/><rect x="96.9" y="165.0" width="1.5" height="2.2" fill="#2d68cc"/><rect x="99.2" y="165.0" width="1.5" height="2.2" fill="#58b0ea"/><rect x="101.5" y="165.0" width="1.5" height="2.2" fill="#2d68cc"/><rect x="103.8" y="165.0" width="1.5" height="2.2" fill="#2d68cc"/><rect x="106.1" y="165.0" width="1.5" height="2.2" fill="#58b0ea"/><rect x="108.4" y="165.0" width="1.5" height="2.2" fill="#2d68cc"/><rect x="110.7" y="165.0" width="1.5" height="2.2" fill="#2d68cc"/><rect x="113.0" y="165.0" width="1.5" height="2.2" fill="#58b0ea"/><rect x="90.0" y="168.5" width="1.5" height="2.2" fill="#2d68cc"/><rect x="92.3" y="168.5" width="1.5" height="2.2" fill="#58b0ea"/><rect x="94.6" y="168.5" width="1.5" height="2.2" fill="#2d68cc"/><rect x="96.9" y="168.5" width="1.5" height="2.2" fill="#2d68cc"/><rect x="99.2" y="168.5" width="1.5" height="2.2" fill="#58b0ea"/><rect x="101.5" y="168.5" width="1.5" height="2.2" fill="#2d68cc"/><rect x="103.8" y="168.5" width="1.5" height="2.2" fill="#2d68cc"/><rect x="106.1" y="168.5" width="1.5" height="2.2" fill="#58b0ea"/><rect x="108.4" y="168.5" width="1.5" height="2.2" fill="#2d68cc"/><rect x="110.7" y="168.5" width="1.5" height="2.2" fill="#2d68cc"/><rect x="113.0" y="168.5" width="1.5" height="2.2" fill="#58b0ea"/><rect x="44.1" y="178.5" width="2.1" height="1.3" fill="#2d68cc"/><rect x="47.2" y="178.5" width="2.1" height="1.3" fill="#2d68cc"/><rect x="50.3" y="178.5" width="2.1" height="1.3" fill="#3c86d8"/><rect x="53.4" y="178.5" width="2.1" height="1.3" fill="#2d68cc"/><rect x="56.5" y="178.5" width="2.1" height="1.3" fill="#3c86d8"/><rect x="59.6" y="178.5" width="2.1" height="1.3" fill="#2d68cc"/><rect x="62.7" y="178.5" width="2.1" height="1.3" fill="#2d68cc"/><rect x="65.8" y="178.5" width="2.1" height="1.3" fill="#3c86d8"/><rect x="68.9" y="178.5" width="2.1" height="1.3" fill="#3c86d8"/><rect x="72.0" y="178.5" width="2.1" height="1.3" fill="#2d68cc"/><rect x="75.1" y="178.5" width="2.1" height="1.3" fill="#2d68cc"/><rect x="78.2" y="178.5" width="2.1" height="1.3" fill="#2d68cc"/><rect x="81.3" y="178.5" width="2.1" height="1.3" fill="#2d68cc"/><rect x="84.4" y="178.5" width="2.1" height="1.3" fill="#2d68cc"/><rect x="87.5" y="178.5" width="2.1" height="1.3" fill="#2d68cc"/><rect x="90.6" y="178.5" width="2.1" height="1.3" fill="#2d68cc"/><rect x="93.7" y="178.5" width="2.1" height="1.3" fill="#2d68cc"/><rect x="96.8" y="178.5" width="2.1" height="1.3" fill="#2d68cc"/><rect x="99.9" y="178.5" width="2.1" height="1.3" fill="#2d68cc"/><rect x="103.0" y="178.5" width="2.1" height="1.3" fill="#2d68cc"/><rect x="106.1" y="178.5" width="2.1" height="1.3" fill="#2d68cc"/><rect x="109.2" y="178.5" width="2.1" height="1.3" fill="#3c86d8"/><rect x="41.0" y="182.2" width="2.1" height="1.3" fill="#2d68cc"/><rect x="44.1" y="182.2" width="2.1" height="1.3" fill="#2d68cc"/><rect x="47.2" y="182.2" width="2.1" height="1.3" fill="#3c86d8"/><rect x="50.3" y="182.2" width="2.1" height="1.3" fill="#2d68cc"/><rect x="53.4" y="182.2" width="2.1" height="1.3" fill="#2d68cc"/><rect x="56.5" y="182.2" width="2.1" height="1.3" fill="#2d68cc"/><rect x="59.6" y="182.2" width="2.1" height="1.3" fill="#2d68cc"/><rect x="62.7" y="182.2" width="2.1" height="1.3" fill="#2d68cc"/><rect x="65.8" y="182.2" width="2.1" height="1.3" fill="#2d68cc"/><rect x="68.9" y="182.2" width="2.1" height="1.3" fill="#2d68cc"/><rect x="72.0" y="182.2" width="2.1" height="1.3" fill="#2d68cc"/><rect x="75.1" y="182.2" width="2.1" height="1.3" fill="#3c86d8"/><rect x="78.2" y="182.2" width="2.1" height="1.3" fill="#2d68cc"/><rect x="81.3" y="182.2" width="2.1" height="1.3" fill="#2d68cc"/><rect x="84.4" y="182.2" width="2.1" height="1.3" fill="#2d68cc"/><rect x="87.5" y="182.2" width="2.1" height="1.3" fill="#2d68cc"/><rect x="90.6" y="182.2" width="2.1" height="1.3" fill="#2d68cc"/><rect x="93.7" y="182.2" width="2.1" height="1.3" fill="#2d68cc"/><rect x="96.8" y="182.2" width="2.1" height="1.3" fill="#2d68cc"/><rect x="99.9" y="182.2" width="2.1" height="1.3" fill="#2d68cc"/><rect x="103.0" y="182.2" width="2.1" height="1.3" fill="#2d68cc"/><rect x="106.1" y="182.2" width="2.1" height="1.3" fill="#2d68cc"/><rect x="41.0" y="185.9" width="2.1" height="1.3" fill="#2d68cc"/><rect x="44.1" y="185.9" width="2.1" height="1.3" fill="#2d68cc"/><rect x="47.2" y="185.9" width="2.1" height="1.3" fill="#3c86d8"/><rect x="50.3" y="185.9" width="2.1" height="1.3" fill="#2d68cc"/><rect x="53.4" y="185.9" width="2.1" height="1.3" fill="#2d68cc"/><rect x="56.5" y="185.9" width="2.1" height="1.3" fill="#3c86d8"/><rect x="59.6" y="185.9" width="2.1" height="1.3" fill="#2d68cc"/><rect x="62.7" y="185.9" width="2.1" height="1.3" fill="#3c86d8"/><rect x="68.9" y="185.9" width="2.1" height="1.3" fill="#2d68cc"/><rect x="72.0" y="185.9" width="2.1" height="1.3" fill="#3c86d8"/><rect x="75.1" y="185.9" width="2.1" height="1.3" fill="#2d68cc"/><rect x="78.2" y="185.9" width="2.1" height="1.3" fill="#2d68cc"/><rect x="81.3" y="185.9" width="2.1" height="1.3" fill="#2d68cc"/><rect x="84.4" y="185.9" width="2.1" height="1.3" fill="#2d68cc"/><rect x="87.5" y="185.9" width="2.1" height="1.3" fill="#2d68cc"/><rect x="90.6" y="185.9" width="2.1" height="1.3" fill="#2d68cc"/><rect x="93.7" y="185.9" width="2.1" height="1.3" fill="#3c86d8"/><rect x="96.8" y="185.9" width="2.1" height="1.3" fill="#2d68cc"/><rect x="103.0" y="185.9" width="2.1" height="1.3" fill="#2d68cc"/><rect x="106.1" y="185.9" width="2.1" height="1.3" fill="#3c86d8"/><rect x="109.2" y="185.9" width="2.1" height="1.3" fill="#2d68cc"/><rect x="44.1" y="189.6" width="2.1" height="1.3" fill="#2d68cc"/><rect x="47.2" y="189.6" width="2.1" height="1.3" fill="#2d68cc"/><rect x="53.4" y="189.6" width="2.1" height="1.3" fill="#2d68cc"/><rect x="56.5" y="189.6" width="2.1" height="1.3" fill="#2d68cc"/><rect x="59.6" y="189.6" width="2.1" height="1.3" fill="#2d68cc"/><rect x="62.7" y="189.6" width="2.1" height="1.3" fill="#2d68cc"/><rect x="65.8" y="189.6" width="2.1" height="1.3" fill="#2d68cc"/><rect x="68.9" y="189.6" width="2.1" height="1.3" fill="#2d68cc"/><rect x="75.1" y="189.6" width="2.1" height="1.3" fill="#2d68cc"/><rect x="78.2" y="189.6" width="2.1" height="1.3" fill="#2d68cc"/><rect x="81.3" y="189.6" width="2.1" height="1.3" fill="#2d68cc"/><rect x="87.5" y="189.6" width="2.1" height="1.3" fill="#2d68cc"/><rect x="90.6" y="189.6" width="2.1" height="1.3" fill="#2d68cc"/><rect x="93.7" y="189.6" width="2.1" height="1.3" fill="#2d68cc"/><rect x="96.8" y="189.6" width="2.1" height="1.3" fill="#3c86d8"/><rect x="99.9" y="189.6" width="2.1" height="1.3" fill="#2d68cc"/><rect x="103.0" y="189.6" width="2.1" height="1.3" fill="#2d68cc"/><rect x="106.1" y="189.6" width="2.1" height="1.3" fill="#2d68cc"/><rect x="109.2" y="189.6" width="2.1" height="1.3" fill="#2d68cc"/><rect x="41.0" y="193.3" width="2.1" height="1.3" fill="#2d68cc"/><rect x="44.1" y="193.3" width="2.1" height="1.3" fill="#2d68cc"/><rect x="50.3" y="193.3" width="2.1" height="1.3" fill="#2d68cc"/><rect x="53.4" y="193.3" width="2.1" height="1.3" fill="#3c86d8"/><rect x="59.6" y="193.3" width="2.1" height="1.3" fill="#2d68cc"/><rect x="65.8" y="193.3" width="2.1" height="1.3" fill="#2d68cc"/><rect x="68.9" y="193.3" width="2.1" height="1.3" fill="#2d68cc"/><rect x="72.0" y="193.3" width="2.1" height="1.3" fill="#2d68cc"/><rect x="75.1" y="193.3" width="2.1" height="1.3" fill="#3c86d8"/><rect x="78.2" y="193.3" width="2.1" height="1.3" fill="#2d68cc"/><rect x="84.4" y="193.3" width="2.1" height="1.3" fill="#2d68cc"/><rect x="87.5" y="193.3" width="2.1" height="1.3" fill="#2d68cc"/><rect x="93.7" y="193.3" width="2.1" height="1.3" fill="#2d68cc"/><rect x="96.8" y="193.3" width="2.1" height="1.3" fill="#2d68cc"/><rect x="99.9" y="193.3" width="2.1" height="1.3" fill="#2d68cc"/><rect x="103.0" y="193.3" width="2.1" height="1.3" fill="#2d68cc"/><rect x="106.1" y="193.3" width="2.1" height="1.3" fill="#2d68cc"/><rect x="109.2" y="193.3" width="2.1" height="1.3" fill="#2d68cc"/><rect x="44.1" y="197.0" width="2.1" height="1.3" fill="#3c86d8"/><rect x="50.3" y="197.0" width="2.1" height="1.3" fill="#2d68cc"/><rect x="53.4" y="197.0" width="2.1" height="1.3" fill="#3c86d8"/><rect x="59.6" y="197.0" width="2.1" height="1.3" fill="#2d68cc"/><rect x="62.7" y="197.0" width="2.1" height="1.3" fill="#3c86d8"/><rect x="65.8" y="197.0" width="2.1" height="1.3" fill="#2d68cc"/><rect x="68.9" y="197.0" width="2.1" height="1.3" fill="#2d68cc"/><rect x="72.0" y="197.0" width="2.1" height="1.3" fill="#2d68cc"/><rect x="75.1" y="197.0" width="2.1" height="1.3" fill="#2d68cc"/><rect x="78.2" y="197.0" width="2.1" height="1.3" fill="#2d68cc"/><rect x="81.3" y="197.0" width="2.1" height="1.3" fill="#2d68cc"/><rect x="84.4" y="197.0" width="2.1" height="1.3" fill="#2d68cc"/><rect x="87.5" y="197.0" width="2.1" height="1.3" fill="#2d68cc"/><rect x="90.6" y="197.0" width="2.1" height="1.3" fill="#2d68cc"/><rect x="93.7" y="197.0" width="2.1" height="1.3" fill="#2d68cc"/><rect x="99.9" y="197.0" width="2.1" height="1.3" fill="#2d68cc"/><rect x="103.0" y="197.0" width="2.1" height="1.3" fill="#3c86d8"/><rect x="106.1" y="197.0" width="2.1" height="1.3" fill="#3c86d8"/><rect x="109.2" y="197.0" width="2.1" height="1.3" fill="#2d68cc"/><rect x="41.0" y="200.7" width="2.1" height="1.3" fill="#2d68cc"/><rect x="44.1" y="200.7" width="2.1" height="1.3" fill="#2d68cc"/><rect x="47.2" y="200.7" width="2.1" height="1.3" fill="#2d68cc"/><rect x="50.3" y="200.7" width="2.1" height="1.3" fill="#2d68cc"/><rect x="53.4" y="200.7" width="2.1" height="1.3" fill="#2d68cc"/><rect x="56.5" y="200.7" width="2.1" height="1.3" fill="#2d68cc"/><rect x="59.6" y="200.7" width="2.1" height="1.3" fill="#3c86d8"/><rect x="62.7" y="200.7" width="2.1" height="1.3" fill="#2d68cc"/><rect x="65.8" y="200.7" width="2.1" height="1.3" fill="#2d68cc"/><rect x="68.9" y="200.7" width="2.1" height="1.3" fill="#2d68cc"/><rect x="72.0" y="200.7" width="2.1" height="1.3" fill="#2d68cc"/><rect x="75.1" y="200.7" width="2.1" height="1.3" fill="#3c86d8"/><rect x="78.2" y="200.7" width="2.1" height="1.3" fill="#2d68cc"/><rect x="81.3" y="200.7" width="2.1" height="1.3" fill="#3c86d8"/><rect x="87.5" y="200.7" width="2.1" height="1.3" fill="#2d68cc"/><rect x="90.6" y="200.7" width="2.1" height="1.3" fill="#2d68cc"/><rect x="93.7" y="200.7" width="2.1" height="1.3" fill="#2d68cc"/><rect x="96.8" y="200.7" width="2.1" height="1.3" fill="#2d68cc"/><rect x="99.9" y="200.7" width="2.1" height="1.3" fill="#2d68cc"/><rect x="106.1" y="200.7" width="2.1" height="1.3" fill="#2d68cc"/><rect x="109.2" y="200.7" width="2.1" height="1.3" fill="#2d68cc"/><rect x="41.0" y="204.4" width="2.1" height="1.3" fill="#2d68cc"/><rect x="44.1" y="204.4" width="2.1" height="1.3" fill="#2d68cc"/><rect x="47.2" y="204.4" width="2.1" height="1.3" fill="#2d68cc"/><rect x="50.3" y="204.4" width="2.1" height="1.3" fill="#2d68cc"/><rect x="53.4" y="204.4" width="2.1" height="1.3" fill="#2d68cc"/><rect x="59.6" y="204.4" width="2.1" height="1.3" fill="#2d68cc"/><rect x="62.7" y="204.4" width="2.1" height="1.3" fill="#2d68cc"/><rect x="68.9" y="204.4" width="2.1" height="1.3" fill="#2d68cc"/><rect x="72.0" y="204.4" width="2.1" height="1.3" fill="#2d68cc"/><rect x="75.1" y="204.4" width="2.1" height="1.3" fill="#2d68cc"/><rect x="78.2" y="204.4" width="2.1" height="1.3" fill="#2d68cc"/><rect x="84.4" y="204.4" width="2.1" height="1.3" fill="#2d68cc"/><rect x="87.5" y="204.4" width="2.1" height="1.3" fill="#2d68cc"/><rect x="90.6" y="204.4" width="2.1" height="1.3" fill="#2d68cc"/><rect x="93.7" y="204.4" width="2.1" height="1.3" fill="#3c86d8"/><rect x="96.8" y="204.4" width="2.1" height="1.3" fill="#2d68cc"/><rect x="99.9" y="204.4" width="2.1" height="1.3" fill="#3c86d8"/><rect x="103.0" y="204.4" width="2.1" height="1.3" fill="#3c86d8"/><rect x="109.2" y="204.4" width="2.1" height="1.3" fill="#2d68cc"/><rect x="44.1" y="208.1" width="2.1" height="1.3" fill="#2d68cc"/><rect x="47.2" y="208.1" width="2.1" height="1.3" fill="#2d68cc"/><rect x="50.3" y="208.1" width="2.1" height="1.3" fill="#2d68cc"/><rect x="53.4" y="208.1" width="2.1" height="1.3" fill="#2d68cc"/><rect x="56.5" y="208.1" width="2.1" height="1.3" fill="#3c86d8"/><rect x="62.7" y="208.1" width="2.1" height="1.3" fill="#2d68cc"/><rect x="65.8" y="208.1" width="2.1" height="1.3" fill="#2d68cc"/><rect x="68.9" y="208.1" width="2.1" height="1.3" fill="#2d68cc"/><rect x="72.0" y="208.1" width="2.1" height="1.3" fill="#2d68cc"/><rect x="75.1" y="208.1" width="2.1" height="1.3" fill="#2d68cc"/><rect x="78.2" y="208.1" width="2.1" height="1.3" fill="#2d68cc"/><rect x="81.3" y="208.1" width="2.1" height="1.3" fill="#2d68cc"/><rect x="84.4" y="208.1" width="2.1" height="1.3" fill="#2d68cc"/><rect x="87.5" y="208.1" width="2.1" height="1.3" fill="#2d68cc"/><rect x="93.7" y="208.1" width="2.1" height="1.3" fill="#2d68cc"/><rect x="96.8" y="208.1" width="2.1" height="1.3" fill="#2d68cc"/><rect x="99.9" y="208.1" width="2.1" height="1.3" fill="#2d68cc"/><rect x="109.2" y="208.1" width="2.1" height="1.3" fill="#2d68cc"/><rect x="41.0" y="211.8" width="2.1" height="1.3" fill="#2d68cc"/><rect x="44.1" y="211.8" width="2.1" height="1.3" fill="#3c86d8"/><rect x="47.2" y="211.8" width="2.1" height="1.3" fill="#2d68cc"/><rect x="50.3" y="211.8" width="2.1" height="1.3" fill="#2d68cc"/><rect x="53.4" y="211.8" width="2.1" height="1.3" fill="#2d68cc"/><rect x="59.6" y="211.8" width="2.1" height="1.3" fill="#2d68cc"/><rect x="62.7" y="211.8" width="2.1" height="1.3" fill="#3c86d8"/><rect x="68.9" y="211.8" width="2.1" height="1.3" fill="#2d68cc"/><rect x="75.1" y="211.8" width="2.1" height="1.3" fill="#2d68cc"/><rect x="78.2" y="211.8" width="2.1" height="1.3" fill="#3c86d8"/><rect x="81.3" y="211.8" width="2.1" height="1.3" fill="#2d68cc"/><rect x="87.5" y="211.8" width="2.1" height="1.3" fill="#2d68cc"/><rect x="93.7" y="211.8" width="2.1" height="1.3" fill="#2d68cc"/><rect x="96.8" y="211.8" width="2.1" height="1.3" fill="#2d68cc"/><rect x="103.0" y="211.8" width="2.1" height="1.3" fill="#2d68cc"/><rect x="106.1" y="211.8" width="2.1" height="1.3" fill="#2d68cc"/><rect x="109.2" y="211.8" width="2.1" height="1.3" fill="#2d68cc"/><rect x="41.0" y="215.5" width="2.1" height="1.3" fill="#2d68cc"/><rect x="44.1" y="215.5" width="2.1" height="1.3" fill="#2d68cc"/><rect x="47.2" y="215.5" width="2.1" height="1.3" fill="#2d68cc"/><rect x="50.3" y="215.5" width="2.1" height="1.3" fill="#2d68cc"/><rect x="53.4" y="215.5" width="2.1" height="1.3" fill="#2d68cc"/><rect x="56.5" y="215.5" width="2.1" height="1.3" fill="#2d68cc"/><rect x="65.8" y="215.5" width="2.1" height="1.3" fill="#2d68cc"/><rect x="68.9" y="215.5" width="2.1" height="1.3" fill="#2d68cc"/><rect x="72.0" y="215.5" width="2.1" height="1.3" fill="#2d68cc"/><rect x="75.1" y="215.5" width="2.1" height="1.3" fill="#2d68cc"/><rect x="78.2" y="215.5" width="2.1" height="1.3" fill="#2d68cc"/><rect x="81.3" y="215.5" width="2.1" height="1.3" fill="#2d68cc"/><rect x="84.4" y="215.5" width="2.1" height="1.3" fill="#2d68cc"/><rect x="87.5" y="215.5" width="2.1" height="1.3" fill="#2d68cc"/><rect x="90.6" y="215.5" width="2.1" height="1.3" fill="#3c86d8"/><rect x="93.7" y="215.5" width="2.1" height="1.3" fill="#2d68cc"/><rect x="96.8" y="215.5" width="2.1" height="1.3" fill="#2d68cc"/><rect x="99.9" y="215.5" width="2.1" height="1.3" fill="#3c86d8"/><rect x="103.0" y="215.5" width="2.1" height="1.3" fill="#2d68cc"/><rect x="106.1" y="215.5" width="2.1" height="1.3" fill="#3c86d8"/><rect x="109.2" y="215.5" width="2.1" height="1.3" fill="#2d68cc"/><rect x="41.0" y="219.2" width="2.1" height="1.3" fill="#2d68cc"/><rect x="44.1" y="219.2" width="2.1" height="1.3" fill="#3c86d8"/><rect x="47.2" y="219.2" width="2.1" height="1.3" fill="#2d68cc"/><rect x="50.3" y="219.2" width="2.1" height="1.3" fill="#3c86d8"/><rect x="53.4" y="219.2" width="2.1" height="1.3" fill="#3c86d8"/><rect x="56.5" y="219.2" width="2.1" height="1.3" fill="#3c86d8"/><rect x="59.6" y="219.2" width="2.1" height="1.3" fill="#3c86d8"/><rect x="62.7" y="219.2" width="2.1" height="1.3" fill="#2d68cc"/><rect x="65.8" y="219.2" width="2.1" height="1.3" fill="#3c86d8"/><rect x="68.9" y="219.2" width="2.1" height="1.3" fill="#2d68cc"/><rect x="72.0" y="219.2" width="2.1" height="1.3" fill="#2d68cc"/><rect x="75.1" y="219.2" width="2.1" height="1.3" fill="#2d68cc"/><rect x="81.3" y="219.2" width="2.1" height="1.3" fill="#2d68cc"/><rect x="84.4" y="219.2" width="2.1" height="1.3" fill="#2d68cc"/><rect x="87.5" y="219.2" width="2.1" height="1.3" fill="#2d68cc"/><rect x="90.6" y="219.2" width="2.1" height="1.3" fill="#2d68cc"/><rect x="93.7" y="219.2" width="2.1" height="1.3" fill="#2d68cc"/><rect x="96.8" y="219.2" width="2.1" height="1.3" fill="#3c86d8"/><rect x="99.9" y="219.2" width="2.1" height="1.3" fill="#2d68cc"/><rect x="103.0" y="219.2" width="2.1" height="1.3" fill="#2d68cc"/><rect x="106.1" y="219.2" width="2.1" height="1.3" fill="#2d68cc"/><rect x="109.2" y="219.2" width="2.1" height="1.3" fill="#2d68cc"/><rect x="41.0" y="222.9" width="2.1" height="1.3" fill="#2d68cc"/><rect x="44.1" y="222.9" width="2.1" height="1.3" fill="#2d68cc"/><rect x="47.2" y="222.9" width="2.1" height="1.3" fill="#2d68cc"/><rect x="50.3" y="222.9" width="2.1" height="1.3" fill="#2d68cc"/><rect x="53.4" y="222.9" width="2.1" height="1.3" fill="#2d68cc"/><rect x="56.5" y="222.9" width="2.1" height="1.3" fill="#3c86d8"/><rect x="59.6" y="222.9" width="2.1" height="1.3" fill="#2d68cc"/><rect x="62.7" y="222.9" width="2.1" height="1.3" fill="#2d68cc"/><rect x="65.8" y="222.9" width="2.1" height="1.3" fill="#2d68cc"/><rect x="68.9" y="222.9" width="2.1" height="1.3" fill="#2d68cc"/><rect x="72.0" y="222.9" width="2.1" height="1.3" fill="#2d68cc"/><rect x="75.1" y="222.9" width="2.1" height="1.3" fill="#2d68cc"/><rect x="78.2" y="222.9" width="2.1" height="1.3" fill="#2d68cc"/><rect x="81.3" y="222.9" width="2.1" height="1.3" fill="#3c86d8"/><rect x="84.4" y="222.9" width="2.1" height="1.3" fill="#2d68cc"/><rect x="87.5" y="222.9" width="2.1" height="1.3" fill="#2d68cc"/><rect x="93.7" y="222.9" width="2.1" height="1.3" fill="#2d68cc"/><rect x="103.0" y="222.9" width="2.1" height="1.3" fill="#2d68cc"/><rect x="106.1" y="222.9" width="2.1" height="1.3" fill="#3c86d8"/><rect x="41.0" y="226.6" width="2.1" height="1.3" fill="#2d68cc"/><rect x="44.1" y="226.6" width="2.1" height="1.3" fill="#2d68cc"/><rect x="47.2" y="226.6" width="2.1" height="1.3" fill="#2d68cc"/><rect x="50.3" y="226.6" width="2.1" height="1.3" fill="#3c86d8"/><rect x="53.4" y="226.6" width="2.1" height="1.3" fill="#2d68cc"/><rect x="56.5" y="226.6" width="2.1" height="1.3" fill="#3c86d8"/><rect x="59.6" y="226.6" width="2.1" height="1.3" fill="#2d68cc"/><rect x="62.7" y="226.6" width="2.1" height="1.3" fill="#2d68cc"/><rect x="65.8" y="226.6" width="2.1" height="1.3" fill="#2d68cc"/><rect x="68.9" y="226.6" width="2.1" height="1.3" fill="#2d68cc"/><rect x="72.0" y="226.6" width="2.1" height="1.3" fill="#2d68cc"/><rect x="75.1" y="226.6" width="2.1" height="1.3" fill="#2d68cc"/><rect x="78.2" y="226.6" width="2.1" height="1.3" fill="#2d68cc"/><rect x="81.3" y="226.6" width="2.1" height="1.3" fill="#2d68cc"/><rect x="84.4" y="226.6" width="2.1" height="1.3" fill="#2d68cc"/><rect x="87.5" y="226.6" width="2.1" height="1.3" fill="#2d68cc"/><rect x="90.6" y="226.6" width="2.1" height="1.3" fill="#2d68cc"/><rect x="96.8" y="226.6" width="2.1" height="1.3" fill="#2d68cc"/><rect x="103.0" y="226.6" width="2.1" height="1.3" fill="#2d68cc"/><rect x="106.1" y="226.6" width="2.1" height="1.3" fill="#2d68cc"/><rect x="41.0" y="230.3" width="2.1" height="1.3" fill="#2d68cc"/><rect x="47.2" y="230.3" width="2.1" height="1.3" fill="#2d68cc"/><rect x="50.3" y="230.3" width="2.1" height="1.3" fill="#2d68cc"/><rect x="53.4" y="230.3" width="2.1" height="1.3" fill="#2d68cc"/><rect x="56.5" y="230.3" width="2.1" height="1.3" fill="#2d68cc"/><rect x="59.6" y="230.3" width="2.1" height="1.3" fill="#2d68cc"/><rect x="62.7" y="230.3" width="2.1" height="1.3" fill="#2d68cc"/><rect x="65.8" y="230.3" width="2.1" height="1.3" fill="#2d68cc"/><rect x="68.9" y="230.3" width="2.1" height="1.3" fill="#2d68cc"/><rect x="72.0" y="230.3" width="2.1" height="1.3" fill="#2d68cc"/><rect x="81.3" y="230.3" width="2.1" height="1.3" fill="#2d68cc"/><rect x="84.4" y="230.3" width="2.1" height="1.3" fill="#2d68cc"/><rect x="87.5" y="230.3" width="2.1" height="1.3" fill="#2d68cc"/><rect x="90.6" y="230.3" width="2.1" height="1.3" fill="#2d68cc"/><rect x="93.7" y="230.3" width="2.1" height="1.3" fill="#3c86d8"/><rect x="96.8" y="230.3" width="2.1" height="1.3" fill="#2d68cc"/><rect x="99.9" y="230.3" width="2.1" height="1.3" fill="#2d68cc"/><rect x="103.0" y="230.3" width="2.1" height="1.3" fill="#2d68cc"/><rect x="106.1" y="230.3" width="2.1" height="1.3" fill="#2d68cc"/><rect x="109.2" y="230.3" width="2.1" height="1.3" fill="#3c86d8"/><rect x="41.0" y="234.0" width="2.1" height="1.3" fill="#2d68cc"/><rect x="44.1" y="234.0" width="2.1" height="1.3" fill="#2d68cc"/><rect x="47.2" y="234.0" width="2.1" height="1.3" fill="#3c86d8"/><rect x="53.4" y="234.0" width="2.1" height="1.3" fill="#2d68cc"/><rect x="56.5" y="234.0" width="2.1" height="1.3" fill="#2d68cc"/><rect x="62.7" y="234.0" width="2.1" height="1.3" fill="#2d68cc"/><rect x="65.8" y="234.0" width="2.1" height="1.3" fill="#2d68cc"/><rect x="68.9" y="234.0" width="2.1" height="1.3" fill="#2d68cc"/><rect x="72.0" y="234.0" width="2.1" height="1.3" fill="#2d68cc"/><rect x="75.1" y="234.0" width="2.1" height="1.3" fill="#2d68cc"/><rect x="78.2" y="234.0" width="2.1" height="1.3" fill="#2d68cc"/><rect x="81.3" y="234.0" width="2.1" height="1.3" fill="#2d68cc"/><rect x="84.4" y="234.0" width="2.1" height="1.3" fill="#3c86d8"/><rect x="87.5" y="234.0" width="2.1" height="1.3" fill="#2d68cc"/><rect x="90.6" y="234.0" width="2.1" height="1.3" fill="#2d68cc"/><rect x="93.7" y="234.0" width="2.1" height="1.3" fill="#3c86d8"/><rect x="99.9" y="234.0" width="2.1" height="1.3" fill="#3c86d8"/><rect x="103.0" y="234.0" width="2.1" height="1.3" fill="#2d68cc"/><rect x="106.1" y="234.0" width="2.1" height="1.3" fill="#2d68cc"/><rect x="109.2" y="234.0" width="2.1" height="1.3" fill="#2d68cc"/><rect x="41.0" y="237.7" width="2.1" height="1.3" fill="#2d68cc"/><rect x="44.1" y="237.7" width="2.1" height="1.3" fill="#2d68cc"/><rect x="47.2" y="237.7" width="2.1" height="1.3" fill="#2d68cc"/><rect x="50.3" y="237.7" width="2.1" height="1.3" fill="#2d68cc"/><rect x="56.5" y="237.7" width="2.1" height="1.3" fill="#2d68cc"/><rect x="59.6" y="237.7" width="2.1" height="1.3" fill="#3c86d8"/><rect x="62.7" y="237.7" width="2.1" height="1.3" fill="#2d68cc"/><rect x="65.8" y="237.7" width="2.1" height="1.3" fill="#2d68cc"/><rect x="68.9" y="237.7" width="2.1" height="1.3" fill="#2d68cc"/><rect x="72.0" y="237.7" width="2.1" height="1.3" fill="#2d68cc"/><rect x="78.2" y="237.7" width="2.1" height="1.3" fill="#2d68cc"/><rect x="81.3" y="237.7" width="2.1" height="1.3" fill="#2d68cc"/><rect x="84.4" y="237.7" width="2.1" height="1.3" fill="#2d68cc"/><rect x="87.5" y="237.7" width="2.1" height="1.3" fill="#2d68cc"/><rect x="90.6" y="237.7" width="2.1" height="1.3" fill="#2d68cc"/><rect x="96.8" y="237.7" width="2.1" height="1.3" fill="#3c86d8"/><rect x="99.9" y="237.7" width="2.1" height="1.3" fill="#2d68cc"/><rect x="103.0" y="237.7" width="2.1" height="1.3" fill="#2d68cc"/><rect x="106.1" y="237.7" width="2.1" height="1.3" fill="#3c86d8"/><rect x="109.2" y="237.7" width="2.1" height="1.3" fill="#2d68cc"/><rect x="41.0" y="241.4" width="2.1" height="1.3" fill="#3c86d8"/><rect x="44.1" y="241.4" width="2.1" height="1.3" fill="#3c86d8"/><rect x="47.2" y="241.4" width="2.1" height="1.3" fill="#2d68cc"/><rect x="50.3" y="241.4" width="2.1" height="1.3" fill="#2d68cc"/><rect x="53.4" y="241.4" width="2.1" height="1.3" fill="#2d68cc"/><rect x="56.5" y="241.4" width="2.1" height="1.3" fill="#2d68cc"/><rect x="59.6" y="241.4" width="2.1" height="1.3" fill="#2d68cc"/><rect x="65.8" y="241.4" width="2.1" height="1.3" fill="#2d68cc"/><rect x="68.9" y="241.4" width="2.1" height="1.3" fill="#2d68cc"/><rect x="72.0" y="241.4" width="2.1" height="1.3" fill="#2d68cc"/><rect x="75.1" y="241.4" width="2.1" height="1.3" fill="#2d68cc"/><rect x="78.2" y="241.4" width="2.1" height="1.3" fill="#2d68cc"/><rect x="81.3" y="241.4" width="2.1" height="1.3" fill="#2d68cc"/><rect x="84.4" y="241.4" width="2.1" height="1.3" fill="#2d68cc"/><rect x="87.5" y="241.4" width="2.1" height="1.3" fill="#2d68cc"/><rect x="90.6" y="241.4" width="2.1" height="1.3" fill="#2d68cc"/><rect x="93.7" y="241.4" width="2.1" height="1.3" fill="#3c86d8"/><rect x="96.8" y="241.4" width="2.1" height="1.3" fill="#2d68cc"/><rect x="103.0" y="241.4" width="2.1" height="1.3" fill="#2d68cc"/><rect x="106.1" y="241.4" width="2.1" height="1.3" fill="#2d68cc"/><rect x="109.2" y="241.4" width="2.1" height="1.3" fill="#2d68cc"/><rect x="41.0" y="245.1" width="2.1" height="1.3" fill="#3c86d8"/><rect x="44.1" y="245.1" width="2.1" height="1.3" fill="#2d68cc"/><rect x="47.2" y="245.1" width="2.1" height="1.3" fill="#2d68cc"/><rect x="50.3" y="245.1" width="2.1" height="1.3" fill="#2d68cc"/><rect x="56.5" y="245.1" width="2.1" height="1.3" fill="#2d68cc"/><rect x="59.6" y="245.1" width="2.1" height="1.3" fill="#2d68cc"/><rect x="65.8" y="245.1" width="2.1" height="1.3" fill="#2d68cc"/><rect x="68.9" y="245.1" width="2.1" height="1.3" fill="#2d68cc"/><rect x="72.0" y="245.1" width="2.1" height="1.3" fill="#2d68cc"/><rect x="75.1" y="245.1" width="2.1" height="1.3" fill="#2d68cc"/><rect x="81.3" y="245.1" width="2.1" height="1.3" fill="#2d68cc"/><rect x="84.4" y="245.1" width="2.1" height="1.3" fill="#3c86d8"/><rect x="87.5" y="245.1" width="2.1" height="1.3" fill="#2d68cc"/><rect x="90.6" y="245.1" width="2.1" height="1.3" fill="#2d68cc"/><rect x="93.7" y="245.1" width="2.1" height="1.3" fill="#2d68cc"/><rect x="96.8" y="245.1" width="2.1" height="1.3" fill="#2d68cc"/><rect x="99.9" y="245.1" width="2.1" height="1.3" fill="#2d68cc"/><rect x="103.0" y="245.1" width="2.1" height="1.3" fill="#2d68cc"/><rect x="109.2" y="245.1" width="2.1" height="1.3" fill="#2d68cc"/><rect x="41.0" y="248.8" width="2.1" height="1.3" fill="#2d68cc"/><rect x="44.1" y="248.8" width="2.1" height="1.3" fill="#2d68cc"/><rect x="47.2" y="248.8" width="2.1" height="1.3" fill="#2d68cc"/><rect x="50.3" y="248.8" width="2.1" height="1.3" fill="#3c86d8"/><rect x="56.5" y="248.8" width="2.1" height="1.3" fill="#2d68cc"/><rect x="59.6" y="248.8" width="2.1" height="1.3" fill="#2d68cc"/><rect x="62.7" y="248.8" width="2.1" height="1.3" fill="#2d68cc"/><rect x="65.8" y="248.8" width="2.1" height="1.3" fill="#2d68cc"/><rect x="68.9" y="248.8" width="2.1" height="1.3" fill="#2d68cc"/><rect x="72.0" y="248.8" width="2.1" height="1.3" fill="#2d68cc"/><rect x="75.1" y="248.8" width="2.1" height="1.3" fill="#2d68cc"/><rect x="78.2" y="248.8" width="2.1" height="1.3" fill="#2d68cc"/><rect x="81.3" y="248.8" width="2.1" height="1.3" fill="#2d68cc"/><rect x="87.5" y="248.8" width="2.1" height="1.3" fill="#2d68cc"/><rect x="90.6" y="248.8" width="2.1" height="1.3" fill="#2d68cc"/><rect x="96.8" y="248.8" width="2.1" height="1.3" fill="#3c86d8"/><rect x="103.0" y="248.8" width="2.1" height="1.3" fill="#2d68cc"/><rect x="106.1" y="248.8" width="2.1" height="1.3" fill="#2d68cc"/><rect x="109.2" y="248.8" width="2.1" height="1.3" fill="#2d68cc"/><rect x="45.6" y="180.3" width="1.2" height="0.9" fill="#2d68cc"/><rect x="54.9" y="180.3" width="1.2" height="0.9" fill="#2d68cc"/><rect x="58.0" y="180.3" width="1.2" height="0.9" fill="#2d68cc"/><rect x="70.4" y="180.3" width="1.2" height="0.9" fill="#2d68cc"/><rect x="73.5" y="180.3" width="1.2" height="0.9" fill="#3c86d8"/><rect x="76.6" y="180.3" width="1.2" height="0.9" fill="#2d68cc"/><rect x="79.7" y="180.3" width="1.2" height="0.9" fill="#2d68cc"/><rect x="82.8" y="180.3" width="1.2" height="0.9" fill="#2d68cc"/><rect x="89.0" y="180.3" width="1.2" height="0.9" fill="#3c86d8"/><rect x="92.1" y="180.3" width="1.2" height="0.9" fill="#2d68cc"/><rect x="101.4" y="180.3" width="1.2" height="0.9" fill="#2d68cc"/><rect x="104.5" y="180.3" width="1.2" height="0.9" fill="#2d68cc"/><rect x="107.6" y="180.3" width="1.2" height="0.9" fill="#2d68cc"/><rect x="110.7" y="180.3" width="1.2" height="0.9" fill="#2d68cc"/><rect x="42.5" y="184.0" width="1.2" height="0.9" fill="#3c86d8"/><rect x="48.7" y="184.0" width="1.2" height="0.9" fill="#3c86d8"/><rect x="58.0" y="184.0" width="1.2" height="0.9" fill="#2d68cc"/><rect x="61.1" y="184.0" width="1.2" height="0.9" fill="#3c86d8"/><rect x="64.2" y="184.0" width="1.2" height="0.9" fill="#2d68cc"/><rect x="70.4" y="184.0" width="1.2" height="0.9" fill="#2d68cc"/><rect x="73.5" y="184.0" width="1.2" height="0.9" fill="#2d68cc"/><rect x="76.6" y="184.0" width="1.2" height="0.9" fill="#3c86d8"/><rect x="79.7" y="184.0" width="1.2" height="0.9" fill="#2d68cc"/><rect x="82.8" y="184.0" width="1.2" height="0.9" fill="#2d68cc"/><rect x="89.0" y="184.0" width="1.2" height="0.9" fill="#2d68cc"/><rect x="98.3" y="184.0" width="1.2" height="0.9" fill="#2d68cc"/><rect x="104.5" y="184.0" width="1.2" height="0.9" fill="#2d68cc"/><rect x="110.7" y="184.0" width="1.2" height="0.9" fill="#2d68cc"/><rect x="42.5" y="187.7" width="1.2" height="0.9" fill="#2d68cc"/><rect x="45.6" y="187.7" width="1.2" height="0.9" fill="#3c86d8"/><rect x="48.7" y="187.7" width="1.2" height="0.9" fill="#2d68cc"/><rect x="51.8" y="187.7" width="1.2" height="0.9" fill="#2d68cc"/><rect x="54.9" y="187.7" width="1.2" height="0.9" fill="#2d68cc"/><rect x="64.2" y="187.7" width="1.2" height="0.9" fill="#3c86d8"/><rect x="70.4" y="187.7" width="1.2" height="0.9" fill="#2d68cc"/><rect x="73.5" y="187.7" width="1.2" height="0.9" fill="#2d68cc"/><rect x="76.6" y="187.7" width="1.2" height="0.9" fill="#2d68cc"/><rect x="79.7" y="187.7" width="1.2" height="0.9" fill="#2d68cc"/><rect x="89.0" y="187.7" width="1.2" height="0.9" fill="#2d68cc"/><rect x="92.1" y="187.7" width="1.2" height="0.9" fill="#2d68cc"/><rect x="95.2" y="187.7" width="1.2" height="0.9" fill="#2d68cc"/><rect x="104.5" y="187.7" width="1.2" height="0.9" fill="#2d68cc"/><rect x="42.5" y="191.4" width="1.2" height="0.9" fill="#3c86d8"/><rect x="45.6" y="191.4" width="1.2" height="0.9" fill="#2d68cc"/><rect x="48.7" y="191.4" width="1.2" height="0.9" fill="#2d68cc"/><rect x="51.8" y="191.4" width="1.2" height="0.9" fill="#2d68cc"/><rect x="58.0" y="191.4" width="1.2" height="0.9" fill="#2d68cc"/><rect x="61.1" y="191.4" width="1.2" height="0.9" fill="#3c86d8"/><rect x="67.3" y="191.4" width="1.2" height="0.9" fill="#2d68cc"/><rect x="76.6" y="191.4" width="1.2" height="0.9" fill="#2d68cc"/><rect x="79.7" y="191.4" width="1.2" height="0.9" fill="#2d68cc"/><rect x="82.8" y="191.4" width="1.2" height="0.9" fill="#2d68cc"/><rect x="85.9" y="191.4" width="1.2" height="0.9" fill="#2d68cc"/><rect x="89.0" y="191.4" width="1.2" height="0.9" fill="#2d68cc"/><rect x="92.1" y="191.4" width="1.2" height="0.9" fill="#2d68cc"/><rect x="95.2" y="191.4" width="1.2" height="0.9" fill="#2d68cc"/><rect x="98.3" y="191.4" width="1.2" height="0.9" fill="#2d68cc"/><rect x="110.7" y="191.4" width="1.2" height="0.9" fill="#3c86d8"/><rect x="48.7" y="195.1" width="1.2" height="0.9" fill="#2d68cc"/><rect x="51.8" y="195.1" width="1.2" height="0.9" fill="#3c86d8"/><rect x="54.9" y="195.1" width="1.2" height="0.9" fill="#2d68cc"/><rect x="58.0" y="195.1" width="1.2" height="0.9" fill="#2d68cc"/><rect x="70.4" y="195.1" width="1.2" height="0.9" fill="#2d68cc"/><rect x="76.6" y="195.1" width="1.2" height="0.9" fill="#2d68cc"/><rect x="85.9" y="195.1" width="1.2" height="0.9" fill="#3c86d8"/><rect x="107.6" y="195.1" width="1.2" height="0.9" fill="#2d68cc"/><rect x="110.7" y="195.1" width="1.2" height="0.9" fill="#2d68cc"/><rect x="42.5" y="198.8" width="1.2" height="0.9" fill="#3c86d8"/><rect x="45.6" y="198.8" width="1.2" height="0.9" fill="#2d68cc"/><rect x="48.7" y="198.8" width="1.2" height="0.9" fill="#2d68cc"/><rect x="58.0" y="198.8" width="1.2" height="0.9" fill="#3c86d8"/><rect x="70.4" y="198.8" width="1.2" height="0.9" fill="#2d68cc"/><rect x="82.8" y="198.8" width="1.2" height="0.9" fill="#2d68cc"/><rect x="85.9" y="198.8" width="1.2" height="0.9" fill="#2d68cc"/><rect x="89.0" y="198.8" width="1.2" height="0.9" fill="#2d68cc"/><rect x="92.1" y="198.8" width="1.2" height="0.9" fill="#2d68cc"/><rect x="95.2" y="198.8" width="1.2" height="0.9" fill="#2d68cc"/><rect x="101.4" y="198.8" width="1.2" height="0.9" fill="#2d68cc"/><rect x="104.5" y="198.8" width="1.2" height="0.9" fill="#3c86d8"/><rect x="110.7" y="198.8" width="1.2" height="0.9" fill="#2d68cc"/><rect x="45.6" y="202.5" width="1.2" height="0.9" fill="#2d68cc"/><rect x="48.7" y="202.5" width="1.2" height="0.9" fill="#2d68cc"/><rect x="51.8" y="202.5" width="1.2" height="0.9" fill="#2d68cc"/><rect x="61.1" y="202.5" width="1.2" height="0.9" fill="#2d68cc"/><rect x="64.2" y="202.5" width="1.2" height="0.9" fill="#2d68cc"/><rect x="73.5" y="202.5" width="1.2" height="0.9" fill="#3c86d8"/><rect x="85.9" y="202.5" width="1.2" height="0.9" fill="#2d68cc"/><rect x="98.3" y="202.5" width="1.2" height="0.9" fill="#2d68cc"/><rect x="101.4" y="202.5" width="1.2" height="0.9" fill="#2d68cc"/><rect x="110.7" y="202.5" width="1.2" height="0.9" fill="#2d68cc"/><rect x="45.6" y="206.2" width="1.2" height="0.9" fill="#2d68cc"/><rect x="51.8" y="206.2" width="1.2" height="0.9" fill="#2d68cc"/><rect x="54.9" y="206.2" width="1.2" height="0.9" fill="#3c86d8"/><rect x="61.1" y="206.2" width="1.2" height="0.9" fill="#3c86d8"/><rect x="64.2" y="206.2" width="1.2" height="0.9" fill="#3c86d8"/><rect x="67.3" y="206.2" width="1.2" height="0.9" fill="#2d68cc"/><rect x="70.4" y="206.2" width="1.2" height="0.9" fill="#2d68cc"/><rect x="73.5" y="206.2" width="1.2" height="0.9" fill="#2d68cc"/><rect x="82.8" y="206.2" width="1.2" height="0.9" fill="#2d68cc"/><rect x="85.9" y="206.2" width="1.2" height="0.9" fill="#3c86d8"/><rect x="89.0" y="206.2" width="1.2" height="0.9" fill="#2d68cc"/><rect x="95.2" y="206.2" width="1.2" height="0.9" fill="#3c86d8"/><rect x="104.5" y="206.2" width="1.2" height="0.9" fill="#3c86d8"/><rect x="110.7" y="206.2" width="1.2" height="0.9" fill="#2d68cc"/><rect x="42.5" y="209.9" width="1.2" height="0.9" fill="#2d68cc"/><rect x="48.7" y="209.9" width="1.2" height="0.9" fill="#2d68cc"/><rect x="51.8" y="209.9" width="1.2" height="0.9" fill="#2d68cc"/><rect x="61.1" y="209.9" width="1.2" height="0.9" fill="#3c86d8"/><rect x="64.2" y="209.9" width="1.2" height="0.9" fill="#3c86d8"/><rect x="79.7" y="209.9" width="1.2" height="0.9" fill="#2d68cc"/><rect x="85.9" y="209.9" width="1.2" height="0.9" fill="#3c86d8"/><rect x="89.0" y="209.9" width="1.2" height="0.9" fill="#2d68cc"/><rect x="92.1" y="209.9" width="1.2" height="0.9" fill="#2d68cc"/><rect x="98.3" y="209.9" width="1.2" height="0.9" fill="#2d68cc"/><rect x="101.4" y="209.9" width="1.2" height="0.9" fill="#2d68cc"/><rect x="104.5" y="209.9" width="1.2" height="0.9" fill="#3c86d8"/><rect x="107.6" y="209.9" width="1.2" height="0.9" fill="#2d68cc"/><rect x="110.7" y="209.9" width="1.2" height="0.9" fill="#2d68cc"/><rect x="45.6" y="213.6" width="1.2" height="0.9" fill="#3c86d8"/><rect x="51.8" y="213.6" width="1.2" height="0.9" fill="#2d68cc"/><rect x="58.0" y="213.6" width="1.2" height="0.9" fill="#2d68cc"/><rect x="61.1" y="213.6" width="1.2" height="0.9" fill="#2d68cc"/><rect x="73.5" y="213.6" width="1.2" height="0.9" fill="#2d68cc"/><rect x="79.7" y="213.6" width="1.2" height="0.9" fill="#3c86d8"/><rect x="98.3" y="213.6" width="1.2" height="0.9" fill="#2d68cc"/><rect x="104.5" y="213.6" width="1.2" height="0.9" fill="#3c86d8"/><rect x="107.6" y="213.6" width="1.2" height="0.9" fill="#2d68cc"/><rect x="110.7" y="213.6" width="1.2" height="0.9" fill="#2d68cc"/><rect x="45.6" y="217.3" width="1.2" height="0.9" fill="#3c86d8"/><rect x="54.9" y="217.3" width="1.2" height="0.9" fill="#2d68cc"/><rect x="67.3" y="217.3" width="1.2" height="0.9" fill="#3c86d8"/><rect x="70.4" y="217.3" width="1.2" height="0.9" fill="#2d68cc"/><rect x="73.5" y="217.3" width="1.2" height="0.9" fill="#2d68cc"/><rect x="82.8" y="217.3" width="1.2" height="0.9" fill="#3c86d8"/><rect x="85.9" y="217.3" width="1.2" height="0.9" fill="#2d68cc"/><rect x="92.1" y="217.3" width="1.2" height="0.9" fill="#2d68cc"/><rect x="95.2" y="217.3" width="1.2" height="0.9" fill="#2d68cc"/><rect x="98.3" y="217.3" width="1.2" height="0.9" fill="#2d68cc"/><rect x="101.4" y="217.3" width="1.2" height="0.9" fill="#2d68cc"/><rect x="107.6" y="217.3" width="1.2" height="0.9" fill="#3c86d8"/><rect x="51.8" y="221.0" width="1.2" height="0.9" fill="#2d68cc"/><rect x="54.9" y="221.0" width="1.2" height="0.9" fill="#3c86d8"/><rect x="58.0" y="221.0" width="1.2" height="0.9" fill="#2d68cc"/><rect x="67.3" y="221.0" width="1.2" height="0.9" fill="#2d68cc"/><rect x="73.5" y="221.0" width="1.2" height="0.9" fill="#2d68cc"/><rect x="76.6" y="221.0" width="1.2" height="0.9" fill="#2d68cc"/><rect x="79.7" y="221.0" width="1.2" height="0.9" fill="#3c86d8"/><rect x="82.8" y="221.0" width="1.2" height="0.9" fill="#3c86d8"/><rect x="92.1" y="221.0" width="1.2" height="0.9" fill="#2d68cc"/><rect x="98.3" y="221.0" width="1.2" height="0.9" fill="#2d68cc"/><rect x="101.4" y="221.0" width="1.2" height="0.9" fill="#3c86d8"/><rect x="104.5" y="221.0" width="1.2" height="0.9" fill="#2d68cc"/><rect x="107.6" y="221.0" width="1.2" height="0.9" fill="#2d68cc"/><rect x="110.7" y="221.0" width="1.2" height="0.9" fill="#3c86d8"/><rect x="45.6" y="224.7" width="1.2" height="0.9" fill="#2d68cc"/><rect x="51.8" y="224.7" width="1.2" height="0.9" fill="#2d68cc"/><rect x="67.3" y="224.7" width="1.2" height="0.9" fill="#3c86d8"/><rect x="73.5" y="224.7" width="1.2" height="0.9" fill="#3c86d8"/><rect x="79.7" y="224.7" width="1.2" height="0.9" fill="#2d68cc"/><rect x="82.8" y="224.7" width="1.2" height="0.9" fill="#2d68cc"/><rect x="85.9" y="224.7" width="1.2" height="0.9" fill="#2d68cc"/><rect x="89.0" y="224.7" width="1.2" height="0.9" fill="#2d68cc"/><rect x="98.3" y="224.7" width="1.2" height="0.9" fill="#2d68cc"/><rect x="101.4" y="224.7" width="1.2" height="0.9" fill="#2d68cc"/><rect x="104.5" y="224.7" width="1.2" height="0.9" fill="#2d68cc"/><rect x="107.6" y="224.7" width="1.2" height="0.9" fill="#2d68cc"/><rect x="110.7" y="224.7" width="1.2" height="0.9" fill="#2d68cc"/><rect x="42.5" y="228.4" width="1.2" height="0.9" fill="#2d68cc"/><rect x="54.9" y="228.4" width="1.2" height="0.9" fill="#2d68cc"/><rect x="61.1" y="228.4" width="1.2" height="0.9" fill="#2d68cc"/><rect x="64.2" y="228.4" width="1.2" height="0.9" fill="#3c86d8"/><rect x="70.4" y="228.4" width="1.2" height="0.9" fill="#2d68cc"/><rect x="76.6" y="228.4" width="1.2" height="0.9" fill="#2d68cc"/><rect x="82.8" y="228.4" width="1.2" height="0.9" fill="#2d68cc"/><rect x="85.9" y="228.4" width="1.2" height="0.9" fill="#2d68cc"/><rect x="89.0" y="228.4" width="1.2" height="0.9" fill="#2d68cc"/><rect x="92.1" y="228.4" width="1.2" height="0.9" fill="#2d68cc"/><rect x="95.2" y="228.4" width="1.2" height="0.9" fill="#2d68cc"/><rect x="42.5" y="232.1" width="1.2" height="0.9" fill="#2d68cc"/><rect x="48.7" y="232.1" width="1.2" height="0.9" fill="#2d68cc"/><rect x="51.8" y="232.1" width="1.2" height="0.9" fill="#2d68cc"/><rect x="54.9" y="232.1" width="1.2" height="0.9" fill="#3c86d8"/><rect x="64.2" y="232.1" width="1.2" height="0.9" fill="#2d68cc"/><rect x="76.6" y="232.1" width="1.2" height="0.9" fill="#2d68cc"/><rect x="79.7" y="232.1" width="1.2" height="0.9" fill="#2d68cc"/><rect x="82.8" y="232.1" width="1.2" height="0.9" fill="#3c86d8"/><rect x="89.0" y="232.1" width="1.2" height="0.9" fill="#2d68cc"/><rect x="95.2" y="232.1" width="1.2" height="0.9" fill="#3c86d8"/><rect x="107.6" y="232.1" width="1.2" height="0.9" fill="#2d68cc"/><rect x="45.6" y="235.8" width="1.2" height="0.9" fill="#3c86d8"/><rect x="51.8" y="235.8" width="1.2" height="0.9" fill="#2d68cc"/><rect x="58.0" y="235.8" width="1.2" height="0.9" fill="#2d68cc"/><rect x="61.1" y="235.8" width="1.2" height="0.9" fill="#2d68cc"/><rect x="73.5" y="235.8" width="1.2" height="0.9" fill="#3c86d8"/><rect x="76.6" y="235.8" width="1.2" height="0.9" fill="#2d68cc"/><rect x="89.0" y="235.8" width="1.2" height="0.9" fill="#2d68cc"/><rect x="92.1" y="235.8" width="1.2" height="0.9" fill="#2d68cc"/><rect x="95.2" y="235.8" width="1.2" height="0.9" fill="#2d68cc"/><rect x="98.3" y="235.8" width="1.2" height="0.9" fill="#2d68cc"/><rect x="101.4" y="235.8" width="1.2" height="0.9" fill="#2d68cc"/><rect x="42.5" y="239.5" width="1.2" height="0.9" fill="#2d68cc"/><rect x="45.6" y="239.5" width="1.2" height="0.9" fill="#2d68cc"/><rect x="48.7" y="239.5" width="1.2" height="0.9" fill="#2d68cc"/><rect x="51.8" y="239.5" width="1.2" height="0.9" fill="#2d68cc"/><rect x="54.9" y="239.5" width="1.2" height="0.9" fill="#2d68cc"/><rect x="67.3" y="239.5" width="1.2" height="0.9" fill="#2d68cc"/><rect x="70.4" y="239.5" width="1.2" height="0.9" fill="#2d68cc"/><rect x="73.5" y="239.5" width="1.2" height="0.9" fill="#2d68cc"/><rect x="79.7" y="239.5" width="1.2" height="0.9" fill="#3c86d8"/><rect x="107.6" y="239.5" width="1.2" height="0.9" fill="#2d68cc"/><rect x="42.5" y="243.2" width="1.2" height="0.9" fill="#2d68cc"/><rect x="45.6" y="243.2" width="1.2" height="0.9" fill="#2d68cc"/><rect x="51.8" y="243.2" width="1.2" height="0.9" fill="#2d68cc"/><rect x="61.1" y="243.2" width="1.2" height="0.9" fill="#2d68cc"/><rect x="64.2" y="243.2" width="1.2" height="0.9" fill="#2d68cc"/><rect x="70.4" y="243.2" width="1.2" height="0.9" fill="#2d68cc"/><rect x="76.6" y="243.2" width="1.2" height="0.9" fill="#2d68cc"/><rect x="79.7" y="243.2" width="1.2" height="0.9" fill="#2d68cc"/><rect x="85.9" y="243.2" width="1.2" height="0.9" fill="#2d68cc"/><rect x="92.1" y="243.2" width="1.2" height="0.9" fill="#2d68cc"/><rect x="98.3" y="243.2" width="1.2" height="0.9" fill="#3c86d8"/><rect x="101.4" y="243.2" width="1.2" height="0.9" fill="#2d68cc"/><rect x="48.7" y="246.9" width="1.2" height="0.9" fill="#2d68cc"/><rect x="51.8" y="246.9" width="1.2" height="0.9" fill="#2d68cc"/><rect x="54.9" y="246.9" width="1.2" height="0.9" fill="#2d68cc"/><rect x="67.3" y="246.9" width="1.2" height="0.9" fill="#2d68cc"/><rect x="70.4" y="246.9" width="1.2" height="0.9" fill="#2d68cc"/><rect x="73.5" y="246.9" width="1.2" height="0.9" fill="#2d68cc"/><rect x="85.9" y="246.9" width="1.2" height="0.9" fill="#2d68cc"/><rect x="98.3" y="246.9" width="1.2" height="0.9" fill="#2d68cc"/><rect x="101.4" y="246.9" width="1.2" height="0.9" fill="#2d68cc"/><rect x="104.5" y="246.9" width="1.2" height="0.9" fill="#2d68cc"/><rect x="42.5" y="250.6" width="1.2" height="0.9" fill="#3c86d8"/><rect x="51.8" y="250.6" width="1.2" height="0.9" fill="#2d68cc"/><rect x="54.9" y="250.6" width="1.2" height="0.9" fill="#2d68cc"/><rect x="67.3" y="250.6" width="1.2" height="0.9" fill="#2d68cc"/><rect x="70.4" y="250.6" width="1.2" height="0.9" fill="#2d68cc"/><rect x="82.8" y="250.6" width="1.2" height="0.9" fill="#2d68cc"/><rect x="85.9" y="250.6" width="1.2" height="0.9" fill="#2d68cc"/><rect x="89.0" y="250.6" width="1.2" height="0.9" fill="#2d68cc"/><rect x="92.1" y="250.6" width="1.2" height="0.9" fill="#2d68cc"/><rect x="98.3" y="250.6" width="1.2" height="0.9" fill="#2d68cc"/><rect x="104.5" y="250.6" width="1.2" height="0.9" fill="#3c86d8"/><rect x="25.6" y="172.4" width="4.0" height="2.5" fill="none" stroke="#58b0ea" stroke-width="0.7"/><rect x="29.8" y="129.1" width="1.8" height="2.2" fill="none" stroke="#58b0ea" stroke-width="0.6"/><rect x="32.6" y="129.1" width="1.8" height="2.2" fill="none" stroke="#58b0ea" stroke-width="0.6"/><rect x="52.3" y="173.7" width="1.8" height="2.2" fill="none" stroke="#58b0ea" stroke-width="0.6"/><rect x="55.1" y="173.7" width="1.8" height="2.2" fill="none" stroke="#58b0ea" stroke-width="0.6"/><rect x="38.1" y="133.7" width="2.0" height="1.2" fill="#58b0ea"/><rect x="57.8" y="176.0" width="2.5" height="3.0" fill="none" stroke="#2d68cc" stroke-width="0.7"/><rect x="59.3" y="155.3" width="4.0" height="2.5" fill="none" stroke="#58b0ea" stroke-width="0.7"/><rect x="50.9" y="140.1" width="1.8" height="2.2" fill="none" stroke="#3c86d8" stroke-width="0.6"/><rect x="53.7" y="140.1" width="1.8" height="2.2" fill="none" stroke="#3c86d8" stroke-width="0.6"/><rect x="45.9" y="156.8" width="2.2" height="1.8" fill="none" stroke="#3c86d8" stroke-width="0.6"/><rect x="45.9" y="159.6" width="2.2" height="1.8" fill="none" stroke="#3c86d8" stroke-width="0.6"/><rect x="59.7" y="139.1" width="1.8" height="2.2" fill="none" stroke="#58b0ea" stroke-width="0.6"/><rect x="62.5" y="139.1" width="1.8" height="2.2" fill="none" stroke="#58b0ea" stroke-width="0.6"/><rect x="26.8" y="143.3" width="4.0" height="3.0" fill="none" stroke="#58b0ea" stroke-width="0.7"/><rect x="68.3" y="146.4" width="2.2" height="1.8" fill="none" stroke="#58b0ea" stroke-width="0.6"/><rect x="68.3" y="149.2" width="2.2" height="1.8" fill="none" stroke="#58b0ea" stroke-width="0.6"/><rect x="28.0" y="145.5" width="4.0" height="2.5" fill="none" stroke="#58b0ea" stroke-width="0.7"/><rect x="58.6" y="178.1" width="1.8" height="2.2" fill="none" stroke="#58b0ea" stroke-width="0.6"/><rect x="61.4" y="178.1" width="1.8" height="2.2" fill="none" stroke="#58b0ea" stroke-width="0.6"/><rect x="48.1" y="152.6" width="2.0" height="1.2" fill="#58b0ea"/><rect x="60.8" y="160.6" width="1.8" height="2.2" fill="none" stroke="#2d68cc" stroke-width="0.6"/><rect x="63.6" y="160.6" width="1.8" height="2.2" fill="none" stroke="#2d68cc" stroke-width="0.6"/><rect x="37.8" y="169.4" width="2.2" height="1.8" fill="none" stroke="#3c86d8" stroke-width="0.6"/><rect x="37.8" y="172.2" width="2.2" height="1.8" fill="none" stroke="#3c86d8" stroke-width="0.6"/><rect x="34.3" y="144.5" width="1.8" height="2.2" fill="none" stroke="#58b0ea" stroke-width="0.6"/><rect x="37.1" y="144.5" width="1.8" height="2.2" fill="none" stroke="#58b0ea" stroke-width="0.6"/><rect x="67.4" y="141.7" width="2.0" height="1.6" fill="#1f3e9c"/><rect x="76.5" y="162.3" width="2.5" height="3.0" fill="none" stroke="#2d68cc" stroke-width="0.7"/><rect x="60.5" y="132.3" width="5.0" height="5.0" fill="none" stroke="#3c86d8" stroke-width="0.8"/><rect x="50.3" y="127.8" width="1.8" height="2.2" fill="none" stroke="#58b0ea" stroke-width="0.6"/><rect x="53.1" y="127.8" width="1.8" height="2.2" fill="none" stroke="#58b0ea" stroke-width="0.6"/><rect x="19.8" y="171.9" width="2.2" height="1.8" fill="none" stroke="#58b0ea" stroke-width="0.6"/><rect x="19.8" y="174.7" width="2.2" height="1.8" fill="none" stroke="#58b0ea" stroke-width="0.6"/><rect x="65.1" y="176.9" width="2.2" height="1.8" fill="none" stroke="#3c86d8" stroke-width="0.6"/><rect x="65.1" y="179.7" width="2.2" height="1.8" fill="none" stroke="#3c86d8" stroke-width="0.6"/><rect x="55.2" y="164.7" width="2.2" height="1.8" fill="none" stroke="#58b0ea" stroke-width="0.6"/><rect x="55.2" y="167.5" width="2.2" height="1.8" fill="none" stroke="#58b0ea" stroke-width="0.6"/><rect x="30.0" y="163.0" width="2.2" height="1.8" fill="none" stroke="#3c86d8" stroke-width="0.6"/><rect x="30.0" y="165.8" width="2.2" height="1.8" fill="none" stroke="#3c86d8" stroke-width="0.6"/><rect x="23.2" y="135.3" width="1.8" height="2.2" fill="none" stroke="#58b0ea" stroke-width="0.6"/><rect x="26.0" y="135.3" width="1.8" height="2.2" fill="none" stroke="#58b0ea" stroke-width="0.6"/><rect x="72.8" y="162.4" width="2.2" height="1.8" fill="none" stroke="#3c86d8" stroke-width="0.6"/><rect x="72.8" y="165.2" width="2.2" height="1.8" fill="none" stroke="#3c86d8" stroke-width="0.6"/><rect x="65.0" y="157.0" width="1.8" height="2.2" fill="none" stroke="#2d68cc" stroke-width="0.6"/><rect x="67.8" y="157.0" width="1.8" height="2.2" fill="none" stroke="#2d68cc" stroke-width="0.6"/><rect x="28.3" y="127.0" width="1.8" height="2.2" fill="none" stroke="#58b0ea" stroke-width="0.6"/><rect x="31.1" y="127.0" width="1.8" height="2.2" fill="none" stroke="#58b0ea" stroke-width="0.6"/><rect x="47.4" y="154.8" width="4.0" height="3.0" fill="none" stroke="#58b0ea" stroke-width="0.7"/><rect x="44.2" y="125.8" width="2.2" height="1.8" fill="none" stroke="#3c86d8" stroke-width="0.6"/><rect x="44.2" y="128.6" width="2.2" height="1.8" fill="none" stroke="#3c86d8" stroke-width="0.6"/><rect x="46.0" y="148.5" width="1.8" height="2.2" fill="none" stroke="#58b0ea" stroke-width="0.6"/><rect x="48.8" y="148.5" width="1.8" height="2.2" fill="none" stroke="#58b0ea" stroke-width="0.6"/><rect x="29.9" y="133.7" width="1.8" height="2.2" fill="none" stroke="#58b0ea" stroke-width="0.6"/><rect x="32.7" y="133.7" width="1.8" height="2.2" fill="none" stroke="#58b0ea" stroke-width="0.6"/><rect x="17.6" y="163.2" width="5.0" height="4.0" fill="none" stroke="#2d68cc" stroke-width="0.8"/><rect x="45.8" y="140.7" width="2.2" height="1.8" fill="none" stroke="#58b0ea" stroke-width="0.6"/><rect x="45.8" y="143.5" width="2.2" height="1.8" fill="none" stroke="#58b0ea" stroke-width="0.6"/><rect x="61.7" y="135.7" width="1.8" height="2.2" fill="none" stroke="#3c86d8" stroke-width="0.6"/><rect x="64.5" y="135.7" width="1.8" height="2.2" fill="none" stroke="#3c86d8" stroke-width="0.6"/><rect x="61.5" y="129.8" width="3.0" height="3.0" fill="none" stroke="#58b0ea" stroke-width="0.7"/><rect x="72.7" y="128.0" width="1.8" height="2.2" fill="none" stroke="#58b0ea" stroke-width="0.6"/><rect x="75.5" y="128.0" width="1.8" height="2.2" fill="none" stroke="#58b0ea" stroke-width="0.6"/><rect x="17.9" y="162.1" width="3.0" height="3.0" fill="none" stroke="#58b0ea" stroke-width="0.7"/><rect x="36.1" y="159.2" width="2.0" height="1.2" fill="#58b0ea"/><rect x="36.3" y="179.1" width="4.0" height="2.5" fill="none" stroke="#58b0ea" stroke-width="0.7"/><rect x="25.8" y="170.4" width="2.2" height="1.8" fill="none" stroke="#3c86d8" stroke-width="0.6"/><rect x="25.8" y="173.2" width="2.2" height="1.8" fill="none" stroke="#3c86d8" stroke-width="0.6"/><rect x="55.4" y="148.8" width="2.2" height="1.8" fill="none" stroke="#58b0ea" stroke-width="0.6"/><rect x="55.4" y="151.6" width="2.2" height="1.8" fill="none" stroke="#58b0ea" stroke-width="0.6"/><rect x="74.6" y="169.7" width="2.2" height="1.8" fill="none" stroke="#2d68cc" stroke-width="0.6"/><rect x="74.6" y="172.5" width="2.2" height="1.8" fill="none" stroke="#2d68cc" stroke-width="0.6"/><rect x="34.1" y="160.4" width="4.0" height="2.5" fill="none" stroke="#2d68cc" stroke-width="0.7"/><rect x="67.7" y="159.3" width="1.8" height="2.2" fill="none" stroke="#58b0ea" stroke-width="0.6"/><rect x="70.5" y="159.3" width="1.8" height="2.2" fill="none" stroke="#58b0ea" stroke-width="0.6"/><rect x="76.6" y="139.0" width="2.2" height="1.8" fill="none" stroke="#58b0ea" stroke-width="0.6"/><rect x="76.6" y="141.8" width="2.2" height="1.8" fill="none" stroke="#58b0ea" stroke-width="0.6"/><rect x="53.7" y="176.1" width="4.0" height="2.5" fill="none" stroke="#2d68cc" stroke-width="0.7"/><rect x="36.6" y="140.3" width="1.8" height="2.2" fill="none" stroke="#58b0ea" stroke-width="0.6"/><rect x="39.4" y="140.3" width="1.8" height="2.2" fill="none" stroke="#58b0ea" stroke-width="0.6"/><rect x="34.6" y="133.0" width="2.0" height="1.6" fill="#1f3e9c"/><rect x="49.6" y="155.8" width="2.2" height="1.8" fill="none" stroke="#58b0ea" stroke-width="0.6"/><rect x="49.6" y="158.6" width="2.2" height="1.8" fill="none" stroke="#58b0ea" stroke-width="0.6"/><rect x="29.2" y="167.8" width="2.5" height="1.2" fill="#58b0ea"/><rect x="54.0" y="163.6" width="2.2" height="1.8" fill="none" stroke="#3c86d8" stroke-width="0.6"/><rect x="54.0" y="166.4" width="2.2" height="1.8" fill="none" stroke="#3c86d8" stroke-width="0.6"/><rect x="73.5" y="158.4" width="1.8" height="2.2" fill="none" stroke="#58b0ea" stroke-width="0.6"/><rect x="76.3" y="158.4" width="1.8" height="2.2" fill="none" stroke="#58b0ea" stroke-width="0.6"/><rect x="45.0" y="130.0" width="2.5" height="3.0" fill="none" stroke="#58b0ea" stroke-width="0.7"/><rect x="52.4" y="176.1" width="2.0" height="1.2" fill="#2d68cc"/><rect x="30.0" y="130.3" width="3.0" height="3.0" fill="none" stroke="#2d68cc" stroke-width="0.7"/><rect x="41.6" y="154.5" width="1.8" height="2.2" fill="none" stroke="#58b0ea" stroke-width="0.6"/><rect x="44.4" y="154.5" width="1.8" height="2.2" fill="none" stroke="#58b0ea" stroke-width="0.6"/><rect x="73.3" y="153.1" width="2.0" height="1.2" fill="#2d68cc"/><rect x="36.3" y="126.7" width="1.8" height="2.2" fill="none" stroke="#58b0ea" stroke-width="0.6"/><rect x="39.1" y="126.7" width="1.8" height="2.2" fill="none" stroke="#58b0ea" stroke-width="0.6"/><rect x="22.7" y="136.7" width="1.5" height="1.6" fill="#1f3e9c"/><rect x="43.0" y="179.0" width="3.0" height="2.5" fill="none" stroke="#3c86d8" stroke-width="0.7"/><rect x="37.7" y="181.7" width="2.2" height="1.8" fill="none" stroke="#58b0ea" stroke-width="0.6"/><rect x="37.7" y="184.5" width="2.2" height="1.8" fill="none" stroke="#58b0ea" stroke-width="0.6"/><rect x="20.1" y="156.8" width="2.0" height="1.2" fill="#1f3e9c"/><rect x="73.3" y="165.3" width="1.8" height="2.2" fill="none" stroke="#2d68cc" stroke-width="0.6"/><rect x="76.1" y="165.3" width="1.8" height="2.2" fill="none" stroke="#2d68cc" stroke-width="0.6"/><rect x="51.4" y="161.5" width="2.0" height="1.2" fill="#58b0ea"/><rect x="44.3" y="134.1" width="5.0" height="4.0" fill="none" stroke="#3c86d8" stroke-width="0.8"/><rect x="74.4" y="128.4" width="2.2" height="1.8" fill="none" stroke="#58b0ea" stroke-width="0.6"/><rect x="74.4" y="131.2" width="2.2" height="1.8" fill="none" stroke="#58b0ea" stroke-width="0.6"/><rect x="68.1" y="127.7" width="2.5" height="2.5" fill="none" stroke="#58b0ea" stroke-width="0.7"/><rect x="25.8" y="168.0" width="2.5" height="1.2" fill="#58b0ea"/><rect x="63.2" y="131.0" width="1.8" height="2.2" fill="none" stroke="#2d68cc" stroke-width="0.6"/><rect x="66.0" y="131.0" width="1.8" height="2.2" fill="none" stroke="#2d68cc" stroke-width="0.6"/><rect x="40.8" y="146.4" width="2.2" height="1.8" fill="none" stroke="#58b0ea" stroke-width="0.6"/><rect x="40.8" y="149.2" width="2.2" height="1.8" fill="none" stroke="#58b0ea" stroke-width="0.6"/><rect x="31.5" y="133.2" width="3.0" height="2.5" fill="none" stroke="#58b0ea" stroke-width="0.7"/><rect x="65.7" y="133.9" width="2.0" height="1.2" fill="#1f3e9c"/><rect x="75.4" y="177.8" width="2.2" height="1.8" fill="none" stroke="#58b0ea" stroke-width="0.6"/><rect x="75.4" y="180.6" width="2.2" height="1.8" fill="none" stroke="#58b0ea" stroke-width="0.6"/><rect x="55.3" y="150.8" width="1.8" height="2.2" fill="none" stroke="#3c86d8" stroke-width="0.6"/><rect x="58.1" y="150.8" width="1.8" height="2.2" fill="none" stroke="#3c86d8" stroke-width="0.6"/><rect x="46.1" y="160.8" width="1.8" height="2.2" fill="none" stroke="#3c86d8" stroke-width="0.6"/><rect x="48.9" y="160.8" width="1.8" height="2.2" fill="none" stroke="#3c86d8" stroke-width="0.6"/><rect x="61.9" y="135.3" width="2.2" height="1.8" fill="none" stroke="#3c86d8" stroke-width="0.6"/><rect x="61.9" y="138.1" width="2.2" height="1.8" fill="none" stroke="#3c86d8" stroke-width="0.6"/><rect x="43.8" y="133.5" width="2.2" height="1.8" fill="none" stroke="#3c86d8" stroke-width="0.6"/><rect x="43.8" y="136.3" width="2.2" height="1.8" fill="none" stroke="#3c86d8" stroke-width="0.6"/><rect x="26.5" y="140.5" width="1.5" height="1.6" fill="#1f3e9c"/><rect x="23.7" y="151.0" width="2.2" height="1.8" fill="none" stroke="#3c86d8" stroke-width="0.6"/><rect x="23.7" y="153.8" width="2.2" height="1.8" fill="none" stroke="#3c86d8" stroke-width="0.6"/><rect x="76.7" y="128.2" width="2.0" height="1.6" fill="#2d68cc"/><rect x="32.7" y="136.5" width="2.2" height="1.8" fill="none" stroke="#2d68cc" stroke-width="0.6"/><rect x="32.7" y="139.3" width="2.2" height="1.8" fill="none" stroke="#2d68cc" stroke-width="0.6"/><rect x="77.9" y="177.7" width="1.8" height="2.2" fill="none" stroke="#2d68cc" stroke-width="0.6"/><rect x="80.7" y="177.7" width="1.8" height="2.2" fill="none" stroke="#2d68cc" stroke-width="0.6"/><rect x="42.4" y="134.2" width="1.5" height="1.2" fill="#1f3e9c"/><rect x="66.2" y="144.4" width="1.8" height="2.2" fill="none" stroke="#58b0ea" stroke-width="0.6"/><rect x="69.0" y="144.4" width="1.8" height="2.2" fill="none" stroke="#58b0ea" stroke-width="0.6"/><rect x="65.2" y="178.8" width="1.8" height="2.2" fill="none" stroke="#2d68cc" stroke-width="0.6"/><rect x="68.0" y="178.8" width="1.8" height="2.2" fill="none" stroke="#2d68cc" stroke-width="0.6"/><rect x="43.6" y="177.0" width="1.8" height="2.2" fill="none" stroke="#3c86d8" stroke-width="0.6"/><rect x="46.4" y="177.0" width="1.8" height="2.2" fill="none" stroke="#3c86d8" stroke-width="0.6"/><rect x="25.4" y="135.3" width="2.5" height="2.5" fill="none" stroke="#3c86d8" stroke-width="0.7"/><rect x="67.6" y="175.7" width="2.5" height="2.5" fill="none" stroke="#2d68cc" stroke-width="0.7"/><rect x="20.2" y="226.9" width="4.0" height="3.0" fill="none" stroke="#3c86d8" stroke-width="0.7"/><rect x="21.7" y="184.6" width="4.0" height="2.5" fill="none" stroke="#58b0ea" stroke-width="0.7"/><rect x="28.9" y="204.3" width="2.2" height="1.8" fill="none" stroke="#58b0ea" stroke-width="0.6"/><rect x="28.9" y="207.1" width="2.2" height="1.8" fill="none" stroke="#58b0ea" stroke-width="0.6"/><rect x="19.1" y="208.7" width="4.0" height="3.0" fill="none" stroke="#3c86d8" stroke-width="0.7"/><rect x="22.7" y="219.4" width="5.0" height="5.0" fill="none" stroke="#2d68cc" stroke-width="0.8"/><rect x="25.2" y="245.2" width="5.0" height="5.0" fill="none" stroke="#2d68cc" stroke-width="0.8"/><rect x="35.8" y="240.6" width="2.2" height="1.8" fill="none" stroke="#58b0ea" stroke-width="0.6"/><rect x="35.8" y="243.4" width="2.2" height="1.8" fill="none" stroke="#58b0ea" stroke-width="0.6"/><rect x="30.3" y="242.9" width="2.2" height="1.8" fill="none" stroke="#58b0ea" stroke-width="0.6"/><rect x="30.3" y="245.7" width="2.2" height="1.8" fill="none" stroke="#58b0ea" stroke-width="0.6"/><rect x="38.9" y="214.6" width="2.5" height="2.5" fill="none" stroke="#3c86d8" stroke-width="0.7"/><rect x="39.3" y="195.7" width="1.8" height="2.2" fill="none" stroke="#58b0ea" stroke-width="0.6"/><rect x="42.1" y="195.7" width="1.8" height="2.2" fill="none" stroke="#58b0ea" stroke-width="0.6"/><rect x="24.2" y="218.9" width="5.0" height="4.0" fill="none" stroke="#3c86d8" stroke-width="0.8"/><rect x="17.4" y="222.0" width="4.0" height="3.0" fill="none" stroke="#3c86d8" stroke-width="0.7"/><rect x="19.4" y="240.9" width="3.0" height="2.5" fill="none" stroke="#58b0ea" stroke-width="0.7"/><rect x="27.7" y="221.0" width="2.5" height="2.5" fill="none" stroke="#58b0ea" stroke-width="0.7"/><rect x="26.3" y="189.6" width="2.5" height="3.0" fill="none" stroke="#3c86d8" stroke-width="0.7"/><rect x="34.2" y="191.5" width="2.0" height="1.2" fill="#1f3e9c"/><rect x="39.3" y="183.6" width="2.2" height="1.8" fill="none" stroke="#58b0ea" stroke-width="0.6"/><rect x="39.3" y="186.4" width="2.2" height="1.8" fill="none" stroke="#58b0ea" stroke-width="0.6"/><rect x="22.5" y="203.5" width="2.2" height="1.8" fill="none" stroke="#2d68cc" stroke-width="0.6"/><rect x="22.5" y="206.3" width="2.2" height="1.8" fill="none" stroke="#2d68cc" stroke-width="0.6"/><rect x="35.7" y="239.3" width="1.8" height="2.2" fill="none" stroke="#3c86d8" stroke-width="0.6"/><rect x="38.5" y="239.3" width="1.8" height="2.2" fill="none" stroke="#3c86d8" stroke-width="0.6"/><rect x="39.0" y="245.4" width="2.2" height="1.8" fill="none" stroke="#58b0ea" stroke-width="0.6"/><rect x="39.0" y="248.2" width="2.2" height="1.8" fill="none" stroke="#58b0ea" stroke-width="0.6"/><rect x="32.3" y="180.8" width="1.8" height="2.2" fill="none" stroke="#3c86d8" stroke-width="0.6"/><rect x="35.1" y="180.8" width="1.8" height="2.2" fill="none" stroke="#3c86d8" stroke-width="0.6"/><rect x="18.6" y="210.3" width="2.5" height="2.5" fill="none" stroke="#58b0ea" stroke-width="0.7"/><rect x="77.3" y="269.1" width="7.0" height="4.0" fill="none" stroke="#2d68cc" stroke-width="0.8"/><rect x="56.8" y="279.6" width="2.2" height="1.8" fill="none" stroke="#2d68cc" stroke-width="0.6"/><rect x="56.8" y="282.4" width="2.2" height="1.8" fill="none" stroke="#2d68cc" stroke-width="0.6"/><rect x="88.3" y="286.7" width="1.8" height="2.2" fill="none" stroke="#58b0ea" stroke-width="0.6"/><rect x="91.1" y="286.7" width="1.8" height="2.2" fill="none" stroke="#58b0ea" stroke-width="0.6"/><rect x="68.3" y="274.4" width="2.2" height="1.8" fill="none" stroke="#58b0ea" stroke-width="0.6"/><rect x="68.3" y="277.2" width="2.2" height="1.8" fill="none" stroke="#58b0ea" stroke-width="0.6"/><rect x="70.2" y="265.1" width="2.5" height="3.0" fill="none" stroke="#58b0ea" stroke-width="0.7"/><rect x="59.5" y="277.4" width="2.0" height="1.2" fill="#58b0ea"/><rect x="82.1" y="290.1" width="2.5" height="1.2" fill="#58b0ea"/><rect x="67.9" y="255.8" width="4.0" height="2.5" fill="none" stroke="#58b0ea" stroke-width="0.7"/><rect x="89.5" y="260.7" width="2.0" height="1.6" fill="#1f3e9c"/><rect x="98.4" y="253.3" width="2.2" height="1.8" fill="none" stroke="#3c86d8" stroke-width="0.6"/><rect x="98.4" y="256.1" width="2.2" height="1.8" fill="none" stroke="#3c86d8" stroke-width="0.6"/><rect x="82.2" y="268.5" width="3.0" height="2.5" fill="none" stroke="#58b0ea" stroke-width="0.7"/><rect x="100.7" y="262.3" width="3.0" height="3.0" fill="none" stroke="#58b0ea" stroke-width="0.7"/><rect x="101.6" y="261.3" width="1.8" height="2.2" fill="none" stroke="#58b0ea" stroke-width="0.6"/><rect x="104.4" y="261.3" width="1.8" height="2.2" fill="none" stroke="#58b0ea" stroke-width="0.6"/><rect x="63.4" y="254.9" width="2.0" height="1.2" fill="#58b0ea"/><rect x="82.4" y="287.9" width="2.2" height="1.8" fill="none" stroke="#58b0ea" stroke-width="0.6"/><rect x="82.4" y="290.7" width="2.2" height="1.8" fill="none" stroke="#58b0ea" stroke-width="0.6"/><rect x="82.6" y="294.5" width="3.0" height="3.0" fill="none" stroke="#3c86d8" stroke-width="0.7"/><rect x="90.4" y="258.0" width="1.8" height="2.2" fill="none" stroke="#2d68cc" stroke-width="0.6"/><rect x="93.2" y="258.0" width="1.8" height="2.2" fill="none" stroke="#2d68cc" stroke-width="0.6"/><rect x="98.5" y="274.3" width="2.0" height="1.2" fill="#1f3e9c"/><rect x="101.2" y="252.2" width="2.0" height="1.6" fill="#2d68cc"/><rect x="77.1" y="285.7" width="2.5" height="1.2" fill="#58b0ea"/><rect x="100.1" y="281.8" width="2.2" height="1.8" fill="none" stroke="#2d68cc" stroke-width="0.6"/><rect x="100.1" y="284.6" width="2.2" height="1.8" fill="none" stroke="#2d68cc" stroke-width="0.6"/><rect x="70.5" y="268.8" width="4.0" height="3.0" fill="none" stroke="#58b0ea" stroke-width="0.7"/><rect x="55.4" y="284.1" width="6.0" height="5.0" fill="none" stroke="#2d68cc" stroke-width="0.8"/><rect x="83.5" y="286.5" width="2.2" height="1.8" fill="none" stroke="#58b0ea" stroke-width="0.6"/><rect x="83.5" y="289.3" width="2.2" height="1.8" fill="none" stroke="#58b0ea" stroke-width="0.6"/><rect x="85.8" y="255.8" width="2.0" height="1.2" fill="#58b0ea"/><rect x="105.8" y="260.8" width="2.2" height="1.8" fill="none" stroke="#58b0ea" stroke-width="0.6"/><rect x="105.8" y="263.6" width="2.2" height="1.8" fill="none" stroke="#58b0ea" stroke-width="0.6"/><rect x="56.4" y="263.0" width="2.5" height="1.2" fill="#58b0ea"/><rect x="83.5" y="294.9" width="3.0" height="3.0" fill="none" stroke="#58b0ea" stroke-width="0.7"/><rect x="74.0" y="277.6" width="2.2" height="1.8" fill="none" stroke="#58b0ea" stroke-width="0.6"/><rect x="74.0" y="280.4" width="2.2" height="1.8" fill="none" stroke="#58b0ea" stroke-width="0.6"/><rect x="90.9" y="274.6" width="1.8" height="2.2" fill="none" stroke="#2d68cc" stroke-width="0.6"/><rect x="93.7" y="274.6" width="1.8" height="2.2" fill="none" stroke="#2d68cc" stroke-width="0.6"/><rect x="81.5" y="279.9" width="2.0" height="1.2" fill="#58b0ea"/><rect x="106.1" y="272.9" width="2.2" height="1.8" fill="none" stroke="#2d68cc" stroke-width="0.6"/><rect x="106.1" y="275.7" width="2.2" height="1.8" fill="none" stroke="#2d68cc" stroke-width="0.6"/><rect x="91.7" y="284.1" width="1.8" height="2.2" fill="none" stroke="#2d68cc" stroke-width="0.6"/><rect x="94.5" y="284.1" width="1.8" height="2.2" fill="none" stroke="#2d68cc" stroke-width="0.6"/><rect x="71.9" y="294.1" width="2.0" height="1.2" fill="#58b0ea"/><rect x="89.8" y="264.7" width="2.2" height="1.8" fill="none" stroke="#58b0ea" stroke-width="0.6"/><rect x="89.8" y="267.5" width="2.2" height="1.8" fill="none" stroke="#58b0ea" stroke-width="0.6"/><rect x="88.4" y="274.5" width="2.0" height="1.2" fill="#58b0ea"/><rect x="76.8" y="254.6" width="3.0" height="2.5" fill="none" stroke="#58b0ea" stroke-width="0.7"/><rect x="91.7" y="252.5" width="1.8" height="2.2" fill="none" stroke="#58b0ea" stroke-width="0.6"/><rect x="94.5" y="252.5" width="1.8" height="2.2" fill="none" stroke="#58b0ea" stroke-width="0.6"/><rect x="103.6" y="269.1" width="1.8" height="2.2" fill="none" stroke="#58b0ea" stroke-width="0.6"/><rect x="106.4" y="269.1" width="1.8" height="2.2" fill="none" stroke="#58b0ea" stroke-width="0.6"/><rect x="90.4" y="260.5" width="2.2" height="1.8" fill="none" stroke="#2d68cc" stroke-width="0.6"/><rect x="90.4" y="263.3" width="2.2" height="1.8" fill="none" stroke="#2d68cc" stroke-width="0.6"/><rect x="101.2" y="290.5" width="4.0" height="2.5" fill="none" stroke="#3c86d8" stroke-width="0.7"/><rect x="76.8" y="257.2" width="1.8" height="2.2" fill="none" stroke="#58b0ea" stroke-width="0.6"/><rect x="79.6" y="257.2" width="1.8" height="2.2" fill="none" stroke="#58b0ea" stroke-width="0.6"/><rect x="56.5" y="255.3" width="6.0" height="5.0" fill="none" stroke="#2d68cc" stroke-width="0.8"/><rect x="89.5" y="281.4" width="4.0" height="2.5" fill="none" stroke="#3c86d8" stroke-width="0.7"/><rect x="73.8" y="259.3" width="2.2" height="1.8" fill="none" stroke="#58b0ea" stroke-width="0.6"/><rect x="73.8" y="262.1" width="2.2" height="1.8" fill="none" stroke="#58b0ea" stroke-width="0.6"/><rect x="100.5" y="292.8" width="1.8" height="2.2" fill="none" stroke="#3c86d8" stroke-width="0.6"/><rect x="103.3" y="292.8" width="1.8" height="2.2" fill="none" stroke="#3c86d8" stroke-width="0.6"/><rect x="78.8" y="268.6" width="1.8" height="2.2" fill="none" stroke="#58b0ea" stroke-width="0.6"/><rect x="81.6" y="268.6" width="1.8" height="2.2" fill="none" stroke="#58b0ea" stroke-width="0.6"/><rect x="85.9" y="293.3" width="2.2" height="1.8" fill="none" stroke="#3c86d8" stroke-width="0.6"/><rect x="85.9" y="296.1" width="2.2" height="1.8" fill="none" stroke="#3c86d8" stroke-width="0.6"/><rect x="68.2" y="253.9" width="2.5" height="1.2" fill="#58b0ea"/><rect x="55.3" y="289.3" width="2.2" height="1.8" fill="none" stroke="#58b0ea" stroke-width="0.6"/><rect x="55.3" y="292.1" width="2.2" height="1.8" fill="none" stroke="#58b0ea" stroke-width="0.6"/><rect x="148.5" y="86.0" width="4.5" height="4.0" fill="none" stroke="#3c86d8" stroke-width="0.8"/><rect x="148.5" y="95.0" width="4.5" height="4.0" fill="none" stroke="#2d68cc" stroke-width="0.8"/><rect x="155.0" y="86.0" width="4.5" height="4.0" fill="none" stroke="#3c86d8" stroke-width="0.8"/><rect x="155.0" y="95.0" width="4.5" height="4.0" fill="none" stroke="#2d68cc" stroke-width="0.8"/><rect x="161.5" y="86.0" width="4.5" height="4.0" fill="none" stroke="#3c86d8" stroke-width="0.8"/><rect x="161.5" y="95.0" width="4.5" height="4.0" fill="none" stroke="#2d68cc" stroke-width="0.8"/><rect x="168.0" y="86.0" width="4.5" height="4.0" fill="none" stroke="#3c86d8" stroke-width="0.8"/><rect x="168.0" y="95.0" width="4.5" height="4.0" fill="none" stroke="#2d68cc" stroke-width="0.8"/><rect x="165.0" y="101.0" width="1.8" height="2.2" fill="none" stroke="#58b0ea" stroke-width="0.6"/><rect x="167.8" y="101.0" width="1.8" height="2.2" fill="none" stroke="#58b0ea" stroke-width="0.6"/><rect x="165.0" y="106.0" width="1.8" height="2.2" fill="none" stroke="#3c86d8" stroke-width="0.6"/><rect x="167.8" y="106.0" width="1.8" height="2.2" fill="none" stroke="#3c86d8" stroke-width="0.6"/><rect x="192.5" y="112.0" width="4.0" height="4.5" fill="none" stroke="#58b0ea" stroke-width="0.8"/><rect x="192.5" y="118.0" width="4.0" height="4.5" fill="none" stroke="#58b0ea" stroke-width="0.8"/><rect x="192.5" y="124.0" width="4.0" height="4.5" fill="none" stroke="#58b0ea" stroke-width="0.8"/><rect x="192.5" y="130.0" width="4.0" height="4.5" fill="none" stroke="#58b0ea" stroke-width="0.8"/><rect x="135.1" y="124.0" width="2.2" height="1.8" fill="none" stroke="#58b0ea" stroke-width="0.6"/><rect x="135.1" y="126.8" width="2.2" height="1.8" fill="none" stroke="#58b0ea" stroke-width="0.6"/><rect x="126.1" y="109.7" width="3.0" height="3.0" fill="none" stroke="#3c86d8" stroke-width="0.7"/><rect x="130.0" y="117.8" width="1.8" height="2.2" fill="none" stroke="#3c86d8" stroke-width="0.6"/><rect x="132.8" y="117.8" width="1.8" height="2.2" fill="none" stroke="#3c86d8" stroke-width="0.6"/><rect x="122.2" y="104.2" width="2.2" height="1.8" fill="none" stroke="#58b0ea" stroke-width="0.6"/><rect x="122.2" y="107.0" width="2.2" height="1.8" fill="none" stroke="#58b0ea" stroke-width="0.6"/><rect x="144.3" y="107.3" width="2.2" height="1.8" fill="none" stroke="#58b0ea" stroke-width="0.6"/><rect x="144.3" y="110.1" width="2.2" height="1.8" fill="none" stroke="#58b0ea" stroke-width="0.6"/><rect x="128.4" y="121.8" width="2.2" height="1.8" fill="none" stroke="#58b0ea" stroke-width="0.6"/><rect x="128.4" y="124.6" width="2.2" height="1.8" fill="none" stroke="#58b0ea" stroke-width="0.6"/><rect x="152.0" y="125.5" width="3.0" height="1.2" fill="#58b0ea"/><rect x="156.0" y="125.5" width="3.0" height="1.2" fill="#58b0ea"/><rect x="171.0" y="228.0" width="3.0" height="1.5" fill="#3c86d8"/><rect x="171.0" y="231.0" width="3.0" height="1.5" fill="#3c86d8"/><rect x="171.0" y="234.0" width="3.0" height="1.5" fill="#3c86d8"/><rect x="171.0" y="237.0" width="3.0" height="1.5" fill="#3c86d8"/><rect x="171.0" y="240.0" width="3.0" height="1.5" fill="#3c86d8"/><rect x="171.0" y="243.0" width="3.0" height="1.5" fill="#3c86d8"/><rect x="171.0" y="246.0" width="3.0" height="1.5" fill="#3c86d8"/><rect x="171.0" y="249.0" width="3.0" height="1.5" fill="#3c86d8"/><rect x="171.0" y="252.0" width="3.0" height="1.5" fill="#3c86d8"/><rect x="171.0" y="255.0" width="3.0" height="1.5" fill="#3c86d8"/><rect x="171.0" y="258.0" width="3.0" height="1.5" fill="#3c86d8"/><rect x="171.0" y="261.0" width="3.0" height="1.5" fill="#3c86d8"/><rect x="259.3" y="111.4" width="6.0" height="4.0" fill="none" stroke="#3c86d8" stroke-width="0.8"/><rect x="211.9" y="96.7" width="1.8" height="2.2" fill="none" stroke="#58b0ea" stroke-width="0.6"/><rect x="214.7" y="96.7" width="1.8" height="2.2" fill="none" stroke="#58b0ea" stroke-width="0.6"/><rect x="215.9" y="90.3" width="2.5" height="3.0" fill="none" stroke="#58b0ea" stroke-width="0.7"/><rect x="230.1" y="140.2" width="2.2" height="1.8" fill="none" stroke="#58b0ea" stroke-width="0.6"/><rect x="230.1" y="143.0" width="2.2" height="1.8" fill="none" stroke="#58b0ea" stroke-width="0.6"/><rect x="250.5" y="141.6" width="1.8" height="2.2" fill="none" stroke="#2d68cc" stroke-width="0.6"/><rect x="253.3" y="141.6" width="1.8" height="2.2" fill="none" stroke="#2d68cc" stroke-width="0.6"/><rect x="207.2" y="110.0" width="3.0" height="3.0" fill="none" stroke="#3c86d8" stroke-width="0.7"/><rect x="227.3" y="96.0" width="2.2" height="1.8" fill="none" stroke="#3c86d8" stroke-width="0.6"/><rect x="227.3" y="98.8" width="2.2" height="1.8" fill="none" stroke="#3c86d8" stroke-width="0.6"/><rect x="257.9" y="156.8" width="4.0" height="3.0" fill="none" stroke="#58b0ea" stroke-width="0.7"/><rect x="229.4" y="109.9" width="2.2" height="1.8" fill="none" stroke="#3c86d8" stroke-width="0.6"/><rect x="229.4" y="112.7" width="2.2" height="1.8" fill="none" stroke="#3c86d8" stroke-width="0.6"/><rect x="253.1" y="87.7" width="2.2" height="1.8" fill="none" stroke="#2d68cc" stroke-width="0.6"/><rect x="253.1" y="90.5" width="2.2" height="1.8" fill="none" stroke="#2d68cc" stroke-width="0.6"/><rect x="243.5" y="138.4" width="1.8" height="2.2" fill="none" stroke="#3c86d8" stroke-width="0.6"/><rect x="246.3" y="138.4" width="1.8" height="2.2" fill="none" stroke="#3c86d8" stroke-width="0.6"/><rect x="213.8" y="108.8" width="1.8" height="2.2" fill="none" stroke="#3c86d8" stroke-width="0.6"/><rect x="216.6" y="108.8" width="1.8" height="2.2" fill="none" stroke="#3c86d8" stroke-width="0.6"/><rect x="246.3" y="96.3" width="1.8" height="2.2" fill="none" stroke="#58b0ea" stroke-width="0.6"/><rect x="249.1" y="96.3" width="1.8" height="2.2" fill="none" stroke="#58b0ea" stroke-width="0.6"/><rect x="196.8" y="150.2" width="1.5" height="1.2" fill="#1f3e9c"/><rect x="198.2" y="100.8" width="2.0" height="1.6" fill="#1f3e9c"/><rect x="251.1" y="114.7" width="3.0" height="2.5" fill="none" stroke="#3c86d8" stroke-width="0.7"/><rect x="194.1" y="131.7" width="3.0" height="2.5" fill="none" stroke="#2d68cc" stroke-width="0.7"/><rect x="238.1" y="133.2" width="1.8" height="2.2" fill="none" stroke="#58b0ea" stroke-width="0.6"/><rect x="240.9" y="133.2" width="1.8" height="2.2" fill="none" stroke="#58b0ea" stroke-width="0.6"/><rect x="216.6" y="127.7" width="1.8" height="2.2" fill="none" stroke="#58b0ea" stroke-width="0.6"/><rect x="219.4" y="127.7" width="1.8" height="2.2" fill="none" stroke="#58b0ea" stroke-width="0.6"/><rect x="211.0" y="126.1" width="1.8" height="2.2" fill="none" stroke="#58b0ea" stroke-width="0.6"/><rect x="213.8" y="126.1" width="1.8" height="2.2" fill="none" stroke="#58b0ea" stroke-width="0.6"/><rect x="220.3" y="126.1" width="2.2" height="1.8" fill="none" stroke="#2d68cc" stroke-width="0.6"/><rect x="220.3" y="128.9" width="2.2" height="1.8" fill="none" stroke="#2d68cc" stroke-width="0.6"/><rect x="202.9" y="136.3" width="2.2" height="1.8" fill="none" stroke="#3c86d8" stroke-width="0.6"/><rect x="202.9" y="139.1" width="2.2" height="1.8" fill="none" stroke="#3c86d8" stroke-width="0.6"/><rect x="231.5" y="96.0" width="2.2" height="1.8" fill="none" stroke="#2d68cc" stroke-width="0.6"/><rect x="231.5" y="98.8" width="2.2" height="1.8" fill="none" stroke="#2d68cc" stroke-width="0.6"/><rect x="256.8" y="130.9" width="2.2" height="1.8" fill="none" stroke="#58b0ea" stroke-width="0.6"/><rect x="256.8" y="133.7" width="2.2" height="1.8" fill="none" stroke="#58b0ea" stroke-width="0.6"/><rect x="199.8" y="138.3" width="4.0" height="2.5" fill="none" stroke="#58b0ea" stroke-width="0.7"/><rect x="260.2" y="131.8" width="1.8" height="2.2" fill="none" stroke="#2d68cc" stroke-width="0.6"/><rect x="263.0" y="131.8" width="1.8" height="2.2" fill="none" stroke="#2d68cc" stroke-width="0.6"/><rect x="206.7" y="150.2" width="3.0" height="3.0" fill="none" stroke="#58b0ea" stroke-width="0.7"/><rect x="261.9" y="126.6" width="1.8" height="2.2" fill="none" stroke="#58b0ea" stroke-width="0.6"/><rect x="264.7" y="126.6" width="1.8" height="2.2" fill="none" stroke="#58b0ea" stroke-width="0.6"/><rect x="216.4" y="153.0" width="2.2" height="1.8" fill="none" stroke="#2d68cc" stroke-width="0.6"/><rect x="216.4" y="155.8" width="2.2" height="1.8" fill="none" stroke="#2d68cc" stroke-width="0.6"/><rect x="240.4" y="136.4" width="1.5" height="1.2" fill="#1f3e9c"/><rect x="239.1" y="144.9" width="1.5" height="1.2" fill="#1f3e9c"/><rect x="204.2" y="90.9" width="2.0" height="1.2" fill="#2d68cc"/><rect x="203.8" y="105.4" width="1.8" height="2.2" fill="none" stroke="#2d68cc" stroke-width="0.6"/><rect x="206.6" y="105.4" width="1.8" height="2.2" fill="none" stroke="#2d68cc" stroke-width="0.6"/><rect x="201.6" y="132.2" width="2.2" height="1.8" fill="none" stroke="#58b0ea" stroke-width="0.6"/><rect x="201.6" y="135.0" width="2.2" height="1.8" fill="none" stroke="#58b0ea" stroke-width="0.6"/><rect x="208.7" y="97.1" width="2.2" height="1.8" fill="none" stroke="#58b0ea" stroke-width="0.6"/><rect x="208.7" y="99.9" width="2.2" height="1.8" fill="none" stroke="#58b0ea" stroke-width="0.6"/><rect x="201.3" y="128.6" width="4.0" height="2.5" fill="none" stroke="#3c86d8" stroke-width="0.7"/><rect x="233.1" y="97.0" width="4.0" height="3.0" fill="none" stroke="#58b0ea" stroke-width="0.7"/><rect x="245.2" y="91.4" width="3.0" height="2.5" fill="none" stroke="#58b0ea" stroke-width="0.7"/><rect x="200.0" y="100.9" width="2.2" height="1.8" fill="none" stroke="#3c86d8" stroke-width="0.6"/><rect x="200.0" y="103.7" width="2.2" height="1.8" fill="none" stroke="#3c86d8" stroke-width="0.6"/><rect x="195.0" y="148.8" width="1.8" height="2.2" fill="none" stroke="#58b0ea" stroke-width="0.6"/><rect x="197.8" y="148.8" width="1.8" height="2.2" fill="none" stroke="#58b0ea" stroke-width="0.6"/><rect x="241.1" y="113.4" width="1.8" height="2.2" fill="none" stroke="#2d68cc" stroke-width="0.6"/><rect x="243.9" y="113.4" width="1.8" height="2.2" fill="none" stroke="#2d68cc" stroke-width="0.6"/><rect x="223.2" y="123.0" width="1.8" height="2.2" fill="none" stroke="#58b0ea" stroke-width="0.6"/><rect x="226.0" y="123.0" width="1.8" height="2.2" fill="none" stroke="#58b0ea" stroke-width="0.6"/><rect x="195.2" y="115.0" width="5.0" height="5.0" fill="none" stroke="#3c86d8" stroke-width="0.8"/><rect x="199.6" y="116.6" width="2.2" height="1.8" fill="none" stroke="#3c86d8" stroke-width="0.6"/><rect x="199.6" y="119.4" width="2.2" height="1.8" fill="none" stroke="#3c86d8" stroke-width="0.6"/><rect x="246.9" y="103.4" width="2.2" height="1.8" fill="none" stroke="#58b0ea" stroke-width="0.6"/><rect x="246.9" y="106.2" width="2.2" height="1.8" fill="none" stroke="#58b0ea" stroke-width="0.6"/><rect x="237.1" y="127.6" width="7.0" height="4.0" fill="none" stroke="#2d68cc" stroke-width="0.8"/><rect x="201.7" y="80.2" width="2.0" height="1.6" fill="#2d68cc"/><rect x="259.3" y="119.5" width="2.0" height="1.2" fill="#58b0ea"/><rect x="246.9" y="143.6" width="3.0" height="2.5" fill="none" stroke="#2d68cc" stroke-width="0.7"/><rect x="237.3" y="106.1" width="1.8" height="2.2" fill="none" stroke="#3c86d8" stroke-width="0.6"/><rect x="240.1" y="106.1" width="1.8" height="2.2" fill="none" stroke="#3c86d8" stroke-width="0.6"/><rect x="230.6" y="107.2" width="1.5" height="1.2" fill="#2d68cc"/><rect x="231.7" y="127.6" width="1.5" height="1.2" fill="#1f3e9c"/><rect x="221.6" y="135.7" width="5.0" height="4.0" fill="none" stroke="#2d68cc" stroke-width="0.8"/><rect x="201.7" y="128.3" width="2.2" height="1.8" fill="none" stroke="#58b0ea" stroke-width="0.6"/><rect x="201.7" y="131.1" width="2.2" height="1.8" fill="none" stroke="#58b0ea" stroke-width="0.6"/><rect x="251.5" y="115.9" width="1.8" height="2.2" fill="none" stroke="#2d68cc" stroke-width="0.6"/><rect x="254.3" y="115.9" width="1.8" height="2.2" fill="none" stroke="#2d68cc" stroke-width="0.6"/><rect x="192.2" y="144.4" width="2.0" height="1.2" fill="#58b0ea"/><rect x="211.8" y="130.3" width="2.2" height="1.8" fill="none" stroke="#58b0ea" stroke-width="0.6"/><rect x="211.8" y="133.1" width="2.2" height="1.8" fill="none" stroke="#58b0ea" stroke-width="0.6"/><rect x="254.3" y="83.0" width="1.8" height="2.2" fill="none" stroke="#3c86d8" stroke-width="0.6"/><rect x="257.1" y="83.0" width="1.8" height="2.2" fill="none" stroke="#3c86d8" stroke-width="0.6"/><rect x="255.3" y="91.0" width="1.8" height="2.2" fill="none" stroke="#58b0ea" stroke-width="0.6"/><rect x="258.1" y="91.0" width="1.8" height="2.2" fill="none" stroke="#58b0ea" stroke-width="0.6"/><rect x="248.3" y="131.3" width="2.2" height="1.8" fill="none" stroke="#58b0ea" stroke-width="0.6"/><rect x="248.3" y="134.1" width="2.2" height="1.8" fill="none" stroke="#58b0ea" stroke-width="0.6"/><rect x="198.0" y="103.6" width="2.2" height="1.8" fill="none" stroke="#3c86d8" stroke-width="0.6"/><rect x="198.0" y="106.4" width="2.2" height="1.8" fill="none" stroke="#3c86d8" stroke-width="0.6"/><rect x="260.2" y="154.0" width="4.0" height="3.0" fill="none" stroke="#58b0ea" stroke-width="0.7"/><rect x="234.6" y="101.5" width="2.2" height="1.8" fill="none" stroke="#2d68cc" stroke-width="0.6"/><rect x="234.6" y="104.3" width="2.2" height="1.8" fill="none" stroke="#2d68cc" stroke-width="0.6"/><rect x="225.7" y="129.1" width="1.8" height="2.2" fill="none" stroke="#2d68cc" stroke-width="0.6"/><rect x="228.5" y="129.1" width="1.8" height="2.2" fill="none" stroke="#2d68cc" stroke-width="0.6"/><rect x="229.1" y="128.1" width="2.5" height="1.2" fill="#58b0ea"/><rect x="240.4" y="89.6" width="2.2" height="1.8" fill="none" stroke="#58b0ea" stroke-width="0.6"/><rect x="240.4" y="92.4" width="2.2" height="1.8" fill="none" stroke="#58b0ea" stroke-width="0.6"/><rect x="217.2" y="97.0" width="2.2" height="1.8" fill="none" stroke="#2d68cc" stroke-width="0.6"/><rect x="217.2" y="99.8" width="2.2" height="1.8" fill="none" stroke="#2d68cc" stroke-width="0.6"/><rect x="200.0" y="92.3" width="2.0" height="1.2" fill="#58b0ea"/><rect x="252.4" y="98.0" width="1.8" height="2.2" fill="none" stroke="#2d68cc" stroke-width="0.6"/><rect x="255.2" y="98.0" width="1.8" height="2.2" fill="none" stroke="#2d68cc" stroke-width="0.6"/><rect x="241.6" y="95.9" width="2.2" height="1.8" fill="none" stroke="#58b0ea" stroke-width="0.6"/><rect x="241.6" y="98.7" width="2.2" height="1.8" fill="none" stroke="#58b0ea" stroke-width="0.6"/><rect x="243.5" y="149.8" width="2.2" height="1.8" fill="none" stroke="#58b0ea" stroke-width="0.6"/><rect x="243.5" y="152.6" width="2.2" height="1.8" fill="none" stroke="#58b0ea" stroke-width="0.6"/><rect x="239.6" y="141.2" width="1.8" height="2.2" fill="none" stroke="#58b0ea" stroke-width="0.6"/><rect x="242.4" y="141.2" width="1.8" height="2.2" fill="none" stroke="#58b0ea" stroke-width="0.6"/><rect x="235.9" y="153.9" width="2.2" height="1.8" fill="none" stroke="#58b0ea" stroke-width="0.6"/><rect x="235.9" y="156.7" width="2.2" height="1.8" fill="none" stroke="#58b0ea" stroke-width="0.6"/><rect x="250.1" y="109.0" width="1.8" height="2.2" fill="none" stroke="#3c86d8" stroke-width="0.6"/><rect x="252.9" y="109.0" width="1.8" height="2.2" fill="none" stroke="#3c86d8" stroke-width="0.6"/><rect x="231.4" y="139.2" width="1.8" height="2.2" fill="none" stroke="#58b0ea" stroke-width="0.6"/><rect x="234.2" y="139.2" width="1.8" height="2.2" fill="none" stroke="#58b0ea" stroke-width="0.6"/><rect x="220.3" y="81.7" width="1.8" height="2.2" fill="none" stroke="#3c86d8" stroke-width="0.6"/><rect x="223.1" y="81.7" width="1.8" height="2.2" fill="none" stroke="#3c86d8" stroke-width="0.6"/><rect x="224.2" y="87.5" width="1.8" height="2.2" fill="none" stroke="#58b0ea" stroke-width="0.6"/><rect x="227.0" y="87.5" width="1.8" height="2.2" fill="none" stroke="#58b0ea" stroke-width="0.6"/><rect x="235.5" y="146.9" width="2.2" height="1.8" fill="none" stroke="#2d68cc" stroke-width="0.6"/><rect x="235.5" y="149.7" width="2.2" height="1.8" fill="none" stroke="#2d68cc" stroke-width="0.6"/><rect x="203.8" y="136.9" width="2.2" height="1.8" fill="none" stroke="#58b0ea" stroke-width="0.6"/><rect x="203.8" y="139.7" width="2.2" height="1.8" fill="none" stroke="#58b0ea" stroke-width="0.6"/><rect x="249.8" y="87.7" width="2.2" height="1.8" fill="none" stroke="#2d68cc" stroke-width="0.6"/><rect x="249.8" y="90.5" width="2.2" height="1.8" fill="none" stroke="#2d68cc" stroke-width="0.6"/><rect x="242.5" y="81.4" width="3.0" height="3.0" fill="none" stroke="#58b0ea" stroke-width="0.7"/><rect x="248.2" y="86.9" width="6.0" height="5.0" fill="none" stroke="#2d68cc" stroke-width="0.8"/><rect x="240.6" y="79.7" width="5.0" height="4.0" fill="none" stroke="#3c86d8" stroke-width="0.8"/><rect x="199.7" y="141.3" width="1.8" height="2.2" fill="none" stroke="#2d68cc" stroke-width="0.6"/><rect x="202.5" y="141.3" width="1.8" height="2.2" fill="none" stroke="#2d68cc" stroke-width="0.6"/><rect x="253.2" y="130.9" width="2.0" height="1.6" fill="#2d68cc"/><rect x="193.7" y="156.6" width="2.2" height="1.8" fill="none" stroke="#58b0ea" stroke-width="0.6"/><rect x="193.7" y="159.4" width="2.2" height="1.8" fill="none" stroke="#58b0ea" stroke-width="0.6"/><rect x="253.1" y="141.2" width="1.8" height="2.2" fill="none" stroke="#3c86d8" stroke-width="0.6"/><rect x="255.9" y="141.2" width="1.8" height="2.2" fill="none" stroke="#3c86d8" stroke-width="0.6"/><rect x="235.4" y="128.9" width="2.5" height="3.0" fill="none" stroke="#58b0ea" stroke-width="0.7"/><rect x="219.5" y="147.0" width="3.0" height="3.0" fill="none" stroke="#58b0ea" stroke-width="0.7"/><rect x="229.0" y="102.6" width="1.8" height="2.2" fill="none" stroke="#58b0ea" stroke-width="0.6"/><rect x="231.8" y="102.6" width="1.8" height="2.2" fill="none" stroke="#58b0ea" stroke-width="0.6"/><rect x="206.8" y="142.7" width="4.0" height="3.0" fill="none" stroke="#2d68cc" stroke-width="0.7"/><rect x="219.2" y="105.9" width="1.8" height="2.2" fill="none" stroke="#58b0ea" stroke-width="0.6"/><rect x="222.0" y="105.9" width="1.8" height="2.2" fill="none" stroke="#58b0ea" stroke-width="0.6"/><rect x="215.4" y="79.6" width="2.2" height="1.8" fill="none" stroke="#58b0ea" stroke-width="0.6"/><rect x="215.4" y="82.4" width="2.2" height="1.8" fill="none" stroke="#58b0ea" stroke-width="0.6"/><rect x="236.2" y="135.4" width="1.8" height="2.2" fill="none" stroke="#58b0ea" stroke-width="0.6"/><rect x="239.0" y="135.4" width="1.8" height="2.2" fill="none" stroke="#58b0ea" stroke-width="0.6"/><rect x="211.1" y="117.5" width="1.8" height="2.2" fill="none" stroke="#3c86d8" stroke-width="0.6"/><rect x="213.9" y="117.5" width="1.8" height="2.2" fill="none" stroke="#3c86d8" stroke-width="0.6"/><rect x="261.5" y="80.7" width="2.2" height="1.8" fill="none" stroke="#58b0ea" stroke-width="0.6"/><rect x="261.5" y="83.5" width="2.2" height="1.8" fill="none" stroke="#58b0ea" stroke-width="0.6"/><rect x="253.1" y="139.2" width="3.0" height="3.0" fill="none" stroke="#58b0ea" stroke-width="0.7"/><rect x="247.5" y="96.8" width="1.5" height="1.6" fill="#1f3e9c"/><rect x="243.8" y="118.2" width="4.0" height="3.0" fill="none" stroke="#2d68cc" stroke-width="0.7"/><rect x="215.4" y="133.6" width="4.0" height="3.0" fill="none" stroke="#58b0ea" stroke-width="0.7"/><rect x="254.6" y="141.9" width="5.0" height="4.0" fill="none" stroke="#2d68cc" stroke-width="0.8"/><rect x="254.2" y="131.0" width="2.2" height="1.8" fill="none" stroke="#58b0ea" stroke-width="0.6"/><rect x="254.2" y="133.8" width="2.2" height="1.8" fill="none" stroke="#58b0ea" stroke-width="0.6"/><rect x="231.8" y="101.9" width="1.8" height="2.2" fill="none" stroke="#58b0ea" stroke-width="0.6"/><rect x="234.6" y="101.9" width="1.8" height="2.2" fill="none" stroke="#58b0ea" stroke-width="0.6"/><rect x="202.1" y="134.9" width="1.8" height="2.2" fill="none" stroke="#2d68cc" stroke-width="0.6"/><rect x="204.9" y="134.9" width="1.8" height="2.2" fill="none" stroke="#2d68cc" stroke-width="0.6"/><rect x="197.1" y="93.0" width="6.0" height="5.0" fill="none" stroke="#3c86d8" stroke-width="0.8"/><rect x="217.0" y="139.2" width="2.2" height="1.8" fill="none" stroke="#58b0ea" stroke-width="0.6"/><rect x="217.0" y="142.0" width="2.2" height="1.8" fill="none" stroke="#58b0ea" stroke-width="0.6"/><rect x="250.7" y="103.2" width="1.8" height="2.2" fill="none" stroke="#2d68cc" stroke-width="0.6"/><rect x="253.5" y="103.2" width="1.8" height="2.2" fill="none" stroke="#2d68cc" stroke-width="0.6"/><rect x="230.3" y="137.9" width="4.0" height="2.5" fill="none" stroke="#3c86d8" stroke-width="0.7"/><rect x="207.3" y="109.6" width="1.8" height="2.2" fill="none" stroke="#2d68cc" stroke-width="0.6"/><rect x="210.1" y="109.6" width="1.8" height="2.2" fill="none" stroke="#2d68cc" stroke-width="0.6"/><rect x="252.5" y="129.2" width="1.8" height="2.2" fill="none" stroke="#58b0ea" stroke-width="0.6"/><rect x="255.3" y="129.2" width="1.8" height="2.2" fill="none" stroke="#58b0ea" stroke-width="0.6"/><rect x="236.0" y="117.4" width="16.3" height="6.6" fill="none" stroke="#1f3e9c" stroke-width="1.2"/><rect x="200.0" y="132.0" width="15.0" height="8.0" fill="none" stroke="#3c86d8" stroke-width="1"/><rect x="237.0" y="132.0" width="15.0" height="8.0" fill="none" stroke="#2d68cc" stroke-width="1"/><rect x="213.0" y="145.0" width="3.0" height="1.4" fill="#58b0ea"/><rect x="213.0" y="147.2" width="3.0" height="1.4" fill="#3c86d8"/><rect x="213.0" y="149.4" width="3.0" height="1.4" fill="#58b0ea"/><rect x="213.0" y="151.6" width="3.0" height="1.4" fill="#3c86d8"/><rect x="213.0" y="153.8" width="3.0" height="1.4" fill="#58b0ea"/><rect x="213.0" y="156.0" width="3.0" height="1.4" fill="#3c86d8"/><rect x="213.0" y="158.2" width="3.0" height="1.4" fill="#58b0ea"/><rect x="213.0" y="160.4" width="3.0" height="1.4" fill="#3c86d8"/><rect x="213.0" y="162.6" width="3.0" height="1.4" fill="#58b0ea"/><rect x="213.0" y="164.8" width="3.0" height="1.4" fill="#3c86d8"/><rect x="238.0" y="145.0" width="3.0" height="1.4" fill="#58b0ea"/><rect x="238.0" y="147.2" width="3.0" height="1.4" fill="#3c86d8"/><rect x="238.0" y="149.4" width="3.0" height="1.4" fill="#58b0ea"/><rect x="238.0" y="151.6" width="3.0" height="1.4" fill="#3c86d8"/><rect x="238.0" y="153.8" width="3.0" height="1.4" fill="#58b0ea"/><rect x="238.0" y="156.0" width="3.0" height="1.4" fill="#3c86d8"/><rect x="238.0" y="158.2" width="3.0" height="1.4" fill="#58b0ea"/><rect x="238.0" y="160.4" width="3.0" height="1.4" fill="#3c86d8"/><rect x="238.0" y="162.6" width="3.0" height="1.4" fill="#58b0ea"/><rect x="238.0" y="164.8" width="3.0" height="1.4" fill="#3c86d8"/><rect x="218.0" y="140.5" width="1.4" height="3.0" fill="#58b0ea"/><rect x="220.2" y="140.5" width="1.4" height="3.0" fill="#3c86d8"/><rect x="222.4" y="140.5" width="1.4" height="3.0" fill="#58b0ea"/><rect x="224.6" y="140.5" width="1.4" height="3.0" fill="#58b0ea"/><rect x="226.8" y="140.5" width="1.4" height="3.0" fill="#3c86d8"/><rect x="229.0" y="140.5" width="1.4" height="3.0" fill="#58b0ea"/><rect x="231.2" y="140.5" width="1.4" height="3.0" fill="#58b0ea"/><rect x="233.4" y="140.5" width="1.4" height="3.0" fill="#3c86d8"/><rect x="235.6" y="140.5" width="1.4" height="3.0" fill="#58b0ea"/><rect x="218.0" y="163.0" width="1.4" height="3.0" fill="#58b0ea"/><rect x="220.2" y="163.0" width="1.4" height="3.0" fill="#3c86d8"/><rect x="222.4" y="163.0" width="1.4" height="3.0" fill="#58b0ea"/><rect x="224.6" y="163.0" width="1.4" height="3.0" fill="#58b0ea"/><rect x="226.8" y="163.0" width="1.4" height="3.0" fill="#3c86d8"/><rect x="229.0" y="163.0" width="1.4" height="3.0" fill="#58b0ea"/><rect x="231.2" y="163.0" width="1.4" height="3.0" fill="#58b0ea"/><rect x="233.4" y="163.0" width="1.4" height="3.0" fill="#3c86d8"/><rect x="235.6" y="163.0" width="1.4" height="3.0" fill="#58b0ea"/><rect x="205.0" y="172.0" width="13.0" height="6.0" fill="none" stroke="#1f3e9c" stroke-width="1"/><rect x="205.0" y="179.0" width="13.0" height="6.0" fill="none" stroke="#1f3e9c" stroke-width="1"/><rect x="259.7" y="198.1" width="1.8" height="2.2" fill="none" stroke="#2d68cc" stroke-width="0.6"/><rect x="262.5" y="198.1" width="1.8" height="2.2" fill="none" stroke="#2d68cc" stroke-width="0.6"/><rect x="244.6" y="150.4" width="1.8" height="2.2" fill="none" stroke="#58b0ea" stroke-width="0.6"/><rect x="247.4" y="150.4" width="1.8" height="2.2" fill="none" stroke="#58b0ea" stroke-width="0.6"/><rect x="239.7" y="223.8" width="1.8" height="2.2" fill="none" stroke="#2d68cc" stroke-width="0.6"/><rect x="242.5" y="223.8" width="1.8" height="2.2" fill="none" stroke="#2d68cc" stroke-width="0.6"/><rect x="253.8" y="152.2" width="2.2" height="1.8" fill="none" stroke="#2d68cc" stroke-width="0.6"/><rect x="253.8" y="155.0" width="2.2" height="1.8" fill="none" stroke="#2d68cc" stroke-width="0.6"/><rect x="210.8" y="219.1" width="2.0" height="1.6" fill="#1f3e9c"/><rect x="215.9" y="187.1" width="1.8" height="2.2" fill="none" stroke="#2d68cc" stroke-width="0.6"/><rect x="218.7" y="187.1" width="1.8" height="2.2" fill="none" stroke="#2d68cc" stroke-width="0.6"/><rect x="235.0" y="229.0" width="1.8" height="2.2" fill="none" stroke="#2d68cc" stroke-width="0.6"/><rect x="237.8" y="229.0" width="1.8" height="2.2" fill="none" stroke="#2d68cc" stroke-width="0.6"/><rect x="209.7" y="151.5" width="1.8" height="2.2" fill="none" stroke="#58b0ea" stroke-width="0.6"/><rect x="212.5" y="151.5" width="1.8" height="2.2" fill="none" stroke="#58b0ea" stroke-width="0.6"/><rect x="222.2" y="178.9" width="2.2" height="1.8" fill="none" stroke="#3c86d8" stroke-width="0.6"/><rect x="222.2" y="181.7" width="2.2" height="1.8" fill="none" stroke="#3c86d8" stroke-width="0.6"/><rect x="240.8" y="198.1" width="2.2" height="1.8" fill="none" stroke="#2d68cc" stroke-width="0.6"/><rect x="240.8" y="200.9" width="2.2" height="1.8" fill="none" stroke="#2d68cc" stroke-width="0.6"/><rect x="250.4" y="188.2" width="1.8" height="2.2" fill="none" stroke="#2d68cc" stroke-width="0.6"/><rect x="253.2" y="188.2" width="1.8" height="2.2" fill="none" stroke="#2d68cc" stroke-width="0.6"/><rect x="240.4" y="194.0" width="3.0" height="3.0" fill="none" stroke="#2d68cc" stroke-width="0.7"/><rect x="208.2" y="150.7" width="2.2" height="1.8" fill="none" stroke="#2d68cc" stroke-width="0.6"/><rect x="208.2" y="153.5" width="2.2" height="1.8" fill="none" stroke="#2d68cc" stroke-width="0.6"/><rect x="209.3" y="200.3" width="2.2" height="1.8" fill="none" stroke="#58b0ea" stroke-width="0.6"/><rect x="209.3" y="203.1" width="2.2" height="1.8" fill="none" stroke="#58b0ea" stroke-width="0.6"/><rect x="258.1" y="200.0" width="1.8" height="2.2" fill="none" stroke="#3c86d8" stroke-width="0.6"/><rect x="260.9" y="200.0" width="1.8" height="2.2" fill="none" stroke="#3c86d8" stroke-width="0.6"/><rect x="234.4" y="164.5" width="7.0" height="4.0" fill="none" stroke="#2d68cc" stroke-width="0.8"/><rect x="254.0" y="218.5" width="3.0" height="2.5" fill="none" stroke="#58b0ea" stroke-width="0.7"/><rect x="227.4" y="218.8" width="1.8" height="2.2" fill="none" stroke="#2d68cc" stroke-width="0.6"/><rect x="230.2" y="218.8" width="1.8" height="2.2" fill="none" stroke="#2d68cc" stroke-width="0.6"/><rect x="255.9" y="181.1" width="1.8" height="2.2" fill="none" stroke="#58b0ea" stroke-width="0.6"/><rect x="258.7" y="181.1" width="1.8" height="2.2" fill="none" stroke="#58b0ea" stroke-width="0.6"/><rect x="206.7" y="208.7" width="1.8" height="2.2" fill="none" stroke="#58b0ea" stroke-width="0.6"/><rect x="209.5" y="208.7" width="1.8" height="2.2" fill="none" stroke="#58b0ea" stroke-width="0.6"/><rect x="241.8" y="178.1" width="1.8" height="2.2" fill="none" stroke="#58b0ea" stroke-width="0.6"/><rect x="244.6" y="178.1" width="1.8" height="2.2" fill="none" stroke="#58b0ea" stroke-width="0.6"/><rect x="225.4" y="223.5" width="5.0" height="5.0" fill="none" stroke="#2d68cc" stroke-width="0.8"/><rect x="216.3" y="184.7" width="1.8" height="2.2" fill="none" stroke="#3c86d8" stroke-width="0.6"/><rect x="219.1" y="184.7" width="1.8" height="2.2" fill="none" stroke="#3c86d8" stroke-width="0.6"/><rect x="220.2" y="184.0" width="1.8" height="2.2" fill="none" stroke="#58b0ea" stroke-width="0.6"/><rect x="223.0" y="184.0" width="1.8" height="2.2" fill="none" stroke="#58b0ea" stroke-width="0.6"/><rect x="213.4" y="195.6" width="1.8" height="2.2" fill="none" stroke="#2d68cc" stroke-width="0.6"/><rect x="216.2" y="195.6" width="1.8" height="2.2" fill="none" stroke="#2d68cc" stroke-width="0.6"/><rect x="259.2" y="160.9" width="2.2" height="1.8" fill="none" stroke="#58b0ea" stroke-width="0.6"/><rect x="259.2" y="163.7" width="2.2" height="1.8" fill="none" stroke="#58b0ea" stroke-width="0.6"/><rect x="220.6" y="188.8" width="2.5" height="1.2" fill="#58b0ea"/><rect x="242.3" y="197.8" width="2.2" height="1.8" fill="none" stroke="#58b0ea" stroke-width="0.6"/><rect x="242.3" y="200.6" width="2.2" height="1.8" fill="none" stroke="#58b0ea" stroke-width="0.6"/><rect x="254.7" y="166.8" width="2.0" height="1.2" fill="#58b0ea"/><rect x="248.3" y="219.1" width="1.8" height="2.2" fill="none" stroke="#3c86d8" stroke-width="0.6"/><rect x="251.1" y="219.1" width="1.8" height="2.2" fill="none" stroke="#3c86d8" stroke-width="0.6"/><rect x="261.7" y="173.8" width="1.8" height="2.2" fill="none" stroke="#58b0ea" stroke-width="0.6"/><rect x="264.5" y="173.8" width="1.8" height="2.2" fill="none" stroke="#58b0ea" stroke-width="0.6"/><rect x="209.4" y="223.0" width="1.8" height="2.2" fill="none" stroke="#2d68cc" stroke-width="0.6"/><rect x="212.2" y="223.0" width="1.8" height="2.2" fill="none" stroke="#2d68cc" stroke-width="0.6"/><rect x="209.3" y="208.9" width="1.8" height="2.2" fill="none" stroke="#3c86d8" stroke-width="0.6"/><rect x="212.1" y="208.9" width="1.8" height="2.2" fill="none" stroke="#3c86d8" stroke-width="0.6"/><rect x="228.8" y="181.8" width="2.2" height="1.8" fill="none" stroke="#58b0ea" stroke-width="0.6"/><rect x="228.8" y="184.6" width="2.2" height="1.8" fill="none" stroke="#58b0ea" stroke-width="0.6"/><rect x="254.7" y="228.4" width="1.8" height="2.2" fill="none" stroke="#3c86d8" stroke-width="0.6"/><rect x="257.5" y="228.4" width="1.8" height="2.2" fill="none" stroke="#3c86d8" stroke-width="0.6"/><rect x="212.5" y="200.2" width="1.8" height="2.2" fill="none" stroke="#3c86d8" stroke-width="0.6"/><rect x="215.3" y="200.2" width="1.8" height="2.2" fill="none" stroke="#3c86d8" stroke-width="0.6"/><rect x="231.3" y="168.5" width="2.2" height="1.8" fill="none" stroke="#58b0ea" stroke-width="0.6"/><rect x="231.3" y="171.3" width="2.2" height="1.8" fill="none" stroke="#58b0ea" stroke-width="0.6"/><rect x="245.2" y="153.9" width="2.0" height="1.2" fill="#58b0ea"/><rect x="207.5" y="189.0" width="1.8" height="2.2" fill="none" stroke="#58b0ea" stroke-width="0.6"/><rect x="210.3" y="189.0" width="1.8" height="2.2" fill="none" stroke="#58b0ea" stroke-width="0.6"/><rect x="200.2" y="167.9" width="2.2" height="1.8" fill="none" stroke="#58b0ea" stroke-width="0.6"/><rect x="200.2" y="170.7" width="2.2" height="1.8" fill="none" stroke="#58b0ea" stroke-width="0.6"/><rect x="232.9" y="217.2" width="6.0" height="4.0" fill="none" stroke="#2d68cc" stroke-width="0.8"/><rect x="245.3" y="171.8" width="1.8" height="2.2" fill="none" stroke="#2d68cc" stroke-width="0.6"/><rect x="248.1" y="171.8" width="1.8" height="2.2" fill="none" stroke="#2d68cc" stroke-width="0.6"/><rect x="216.7" y="227.3" width="1.8" height="2.2" fill="none" stroke="#58b0ea" stroke-width="0.6"/><rect x="219.5" y="227.3" width="1.8" height="2.2" fill="none" stroke="#58b0ea" stroke-width="0.6"/><rect x="225.3" y="194.5" width="2.2" height="1.8" fill="none" stroke="#58b0ea" stroke-width="0.6"/><rect x="225.3" y="197.3" width="2.2" height="1.8" fill="none" stroke="#58b0ea" stroke-width="0.6"/><rect x="220.2" y="153.3" width="2.2" height="1.8" fill="none" stroke="#2d68cc" stroke-width="0.6"/><rect x="220.2" y="156.1" width="2.2" height="1.8" fill="none" stroke="#2d68cc" stroke-width="0.6"/><rect x="234.0" y="205.2" width="6.0" height="5.0" fill="none" stroke="#3c86d8" stroke-width="0.8"/><rect x="233.5" y="180.6" width="1.8" height="2.2" fill="none" stroke="#58b0ea" stroke-width="0.6"/><rect x="236.3" y="180.6" width="1.8" height="2.2" fill="none" stroke="#58b0ea" stroke-width="0.6"/><rect x="254.7" y="214.3" width="2.0" height="1.2" fill="#58b0ea"/><rect x="237.7" y="224.1" width="1.8" height="2.2" fill="none" stroke="#58b0ea" stroke-width="0.6"/><rect x="240.5" y="224.1" width="1.8" height="2.2" fill="none" stroke="#58b0ea" stroke-width="0.6"/><rect x="261.4" y="216.0" width="4.0" height="2.5" fill="none" stroke="#58b0ea" stroke-width="0.7"/><rect x="242.0" y="223.0" width="14.0" height="9.0" fill="none" stroke="#2d68cc" stroke-width="1"/><rect x="242.0" y="278.0" width="14.0" height="8.0" fill="none" stroke="#2d68cc" stroke-width="1"/><rect x="257.0" y="88.0" width="3.0" height="3.0" fill="none" stroke="#3c86d8" stroke-width="0.7"/><rect x="257.0" y="92.0" width="3.0" height="3.0" fill="none" stroke="#3c86d8" stroke-width="0.7"/><rect x="257.0" y="96.0" width="3.0" height="3.0" fill="none" stroke="#3c86d8" stroke-width="0.7"/><rect x="257.0" y="100.0" width="3.0" height="3.0" fill="none" stroke="#3c86d8" stroke-width="0.7"/><rect x="257.0" y="104.0" width="3.0" height="3.0" fill="none" stroke="#3c86d8" stroke-width="0.7"/><rect x="257.0" y="108.0" width="3.0" height="3.0" fill="none" stroke="#3c86d8" stroke-width="0.7"/><rect x="257.0" y="112.0" width="3.0" height="3.0" fill="none" stroke="#3c86d8" stroke-width="0.7"/><rect x="289.3" y="80.5" width="4.0" height="3.0" fill="none" stroke="#2d68cc" stroke-width="0.7"/><rect x="278.5" y="93.8" width="2.5" height="1.2" fill="#58b0ea"/><rect x="284.4" y="120.7" width="2.2" height="1.8" fill="none" stroke="#58b0ea" stroke-width="0.6"/><rect x="284.4" y="123.5" width="2.2" height="1.8" fill="none" stroke="#58b0ea" stroke-width="0.6"/><rect x="269.0" y="109.5" width="3.0" height="2.5" fill="none" stroke="#58b0ea" stroke-width="0.7"/><rect x="273.8" y="104.3" width="2.2" height="1.8" fill="none" stroke="#2d68cc" stroke-width="0.6"/><rect x="273.8" y="107.1" width="2.2" height="1.8" fill="none" stroke="#2d68cc" stroke-width="0.6"/><rect x="264.2" y="117.9" width="2.2" height="1.8" fill="none" stroke="#2d68cc" stroke-width="0.6"/><rect x="264.2" y="120.7" width="2.2" height="1.8" fill="none" stroke="#2d68cc" stroke-width="0.6"/><rect x="269.9" y="120.1" width="2.0" height="1.2" fill="#2d68cc"/><rect x="264.0" y="115.9" width="2.2" height="1.8" fill="none" stroke="#3c86d8" stroke-width="0.6"/><rect x="264.0" y="118.7" width="2.2" height="1.8" fill="none" stroke="#3c86d8" stroke-width="0.6"/><rect x="277.8" y="118.7" width="1.8" height="2.2" fill="none" stroke="#3c86d8" stroke-width="0.6"/><rect x="280.6" y="118.7" width="1.8" height="2.2" fill="none" stroke="#3c86d8" stroke-width="0.6"/><rect x="266.6" y="111.1" width="1.8" height="2.2" fill="none" stroke="#58b0ea" stroke-width="0.6"/><rect x="269.4" y="111.1" width="1.8" height="2.2" fill="none" stroke="#58b0ea" stroke-width="0.6"/><rect x="271.7" y="96.1" width="1.5" height="1.6" fill="#2d68cc"/><rect x="283.1" y="96.8" width="2.2" height="1.8" fill="none" stroke="#2d68cc" stroke-width="0.6"/><rect x="283.1" y="99.6" width="2.2" height="1.8" fill="none" stroke="#2d68cc" stroke-width="0.6"/><rect x="275.6" y="82.4" width="2.2" height="1.8" fill="none" stroke="#58b0ea" stroke-width="0.6"/><rect x="275.6" y="85.2" width="2.2" height="1.8" fill="none" stroke="#58b0ea" stroke-width="0.6"/><rect x="282.9" y="100.5" width="2.2" height="1.8" fill="none" stroke="#3c86d8" stroke-width="0.6"/><rect x="282.9" y="103.3" width="2.2" height="1.8" fill="none" stroke="#3c86d8" stroke-width="0.6"/><rect x="284.8" y="85.5" width="3.0" height="2.5" fill="none" stroke="#2d68cc" stroke-width="0.7"/><rect x="280.7" y="104.2" width="2.5" height="2.5" fill="none" stroke="#2d68cc" stroke-width="0.7"/><rect x="262.0" y="91.0" width="2.2" height="1.8" fill="none" stroke="#2d68cc" stroke-width="0.6"/><rect x="262.0" y="93.8" width="2.2" height="1.8" fill="none" stroke="#2d68cc" stroke-width="0.6"/><rect x="283.5" y="91.7" width="1.8" height="2.2" fill="none" stroke="#3c86d8" stroke-width="0.6"/><rect x="286.3" y="91.7" width="1.8" height="2.2" fill="none" stroke="#3c86d8" stroke-width="0.6"/><rect x="270.0" y="99.9" width="2.2" height="1.8" fill="none" stroke="#58b0ea" stroke-width="0.6"/><rect x="270.0" y="102.7" width="2.2" height="1.8" fill="none" stroke="#58b0ea" stroke-width="0.6"/><rect x="287.8" y="88.1" width="2.2" height="1.8" fill="none" stroke="#2d68cc" stroke-width="0.6"/><rect x="287.8" y="90.9" width="2.2" height="1.8" fill="none" stroke="#2d68cc" stroke-width="0.6"/><rect x="280.5" y="96.6" width="1.8" height="2.2" fill="none" stroke="#58b0ea" stroke-width="0.6"/><rect x="283.3" y="96.6" width="1.8" height="2.2" fill="none" stroke="#58b0ea" stroke-width="0.6"/><rect x="273.3" y="80.1" width="3.0" height="3.0" fill="none" stroke="#58b0ea" stroke-width="0.7"/><rect x="272.6" y="97.3" width="2.2" height="1.8" fill="none" stroke="#3c86d8" stroke-width="0.6"/><rect x="272.6" y="100.1" width="2.2" height="1.8" fill="none" stroke="#3c86d8" stroke-width="0.6"/><rect x="291.3" y="120.6" width="2.2" height="1.8" fill="none" stroke="#58b0ea" stroke-width="0.6"/><rect x="291.3" y="123.4" width="2.2" height="1.8" fill="none" stroke="#58b0ea" stroke-width="0.6"/><rect x="282.0" y="94.5" width="1.8" height="2.2" fill="none" stroke="#58b0ea" stroke-width="0.6"/><rect x="284.8" y="94.5" width="1.8" height="2.2" fill="none" stroke="#58b0ea" stroke-width="0.6"/><rect x="273.4" y="104.3" width="2.2" height="1.8" fill="none" stroke="#58b0ea" stroke-width="0.6"/><rect x="273.4" y="107.1" width="2.2" height="1.8" fill="none" stroke="#58b0ea" stroke-width="0.6"/><rect x="265.2" y="106.2" width="2.5" height="1.2" fill="#58b0ea"/><rect x="291.8" y="86.8" width="1.8" height="2.2" fill="none" stroke="#58b0ea" stroke-width="0.6"/><rect x="294.6" y="86.8" width="1.8" height="2.2" fill="none" stroke="#58b0ea" stroke-width="0.6"/><rect x="276.7" y="103.6" width="4.0" height="2.5" fill="none" stroke="#3c86d8" stroke-width="0.7"/><rect x="274.1" y="80.0" width="3.0" height="3.0" fill="none" stroke="#2d68cc" stroke-width="0.7"/><rect x="277.9" y="134.4" width="1.8" height="2.2" fill="none" stroke="#58b0ea" stroke-width="0.6"/><rect x="280.7" y="134.4" width="1.8" height="2.2" fill="none" stroke="#58b0ea" stroke-width="0.6"/><rect x="276.5" y="130.6" width="2.5" height="2.5" fill="none" stroke="#58b0ea" stroke-width="0.7"/><rect x="327.7" y="142.0" width="1.8" height="2.2" fill="none" stroke="#58b0ea" stroke-width="0.6"/><rect x="330.5" y="142.0" width="1.8" height="2.2" fill="none" stroke="#58b0ea" stroke-width="0.6"/><rect x="338.9" y="132.1" width="2.2" height="1.8" fill="none" stroke="#58b0ea" stroke-width="0.6"/><rect x="338.9" y="134.9" width="2.2" height="1.8" fill="none" stroke="#58b0ea" stroke-width="0.6"/><rect x="341.2" y="132.2" width="1.8" height="2.2" fill="none" stroke="#58b0ea" stroke-width="0.6"/><rect x="344.0" y="132.2" width="1.8" height="2.2" fill="none" stroke="#58b0ea" stroke-width="0.6"/><rect x="283.6" y="143.6" width="2.2" height="1.8" fill="none" stroke="#58b0ea" stroke-width="0.6"/><rect x="283.6" y="146.4" width="2.2" height="1.8" fill="none" stroke="#58b0ea" stroke-width="0.6"/><rect x="294.3" y="135.4" width="2.0" height="1.2" fill="#1f3e9c"/><rect x="293.6" y="153.1" width="3.0" height="2.5" fill="none" stroke="#2d68cc" stroke-width="0.7"/><rect x="279.1" y="134.0" width="4.0" height="3.0" fill="none" stroke="#58b0ea" stroke-width="0.7"/><rect x="327.6" y="132.1" width="2.0" height="1.2" fill="#58b0ea"/><rect x="306.3" y="148.5" width="2.5" height="2.5" fill="none" stroke="#2d68cc" stroke-width="0.7"/><rect x="302.4" y="144.4" width="1.8" height="2.2" fill="none" stroke="#2d68cc" stroke-width="0.6"/><rect x="305.2" y="144.4" width="1.8" height="2.2" fill="none" stroke="#2d68cc" stroke-width="0.6"/><rect x="286.5" y="140.7" width="1.8" height="2.2" fill="none" stroke="#3c86d8" stroke-width="0.6"/><rect x="289.3" y="140.7" width="1.8" height="2.2" fill="none" stroke="#3c86d8" stroke-width="0.6"/><rect x="335.4" y="145.2" width="2.2" height="1.8" fill="none" stroke="#58b0ea" stroke-width="0.6"/><rect x="335.4" y="148.0" width="2.2" height="1.8" fill="none" stroke="#58b0ea" stroke-width="0.6"/><rect x="285.1" y="133.9" width="1.8" height="2.2" fill="none" stroke="#58b0ea" stroke-width="0.6"/><rect x="287.9" y="133.9" width="1.8" height="2.2" fill="none" stroke="#58b0ea" stroke-width="0.6"/><rect x="272.1" y="153.0" width="1.8" height="2.2" fill="none" stroke="#58b0ea" stroke-width="0.6"/><rect x="274.9" y="153.0" width="1.8" height="2.2" fill="none" stroke="#58b0ea" stroke-width="0.6"/><rect x="283.1" y="154.7" width="2.2" height="1.8" fill="none" stroke="#3c86d8" stroke-width="0.6"/><rect x="283.1" y="157.5" width="2.2" height="1.8" fill="none" stroke="#3c86d8" stroke-width="0.6"/><rect x="309.9" y="147.5" width="2.5" height="2.5" fill="none" stroke="#2d68cc" stroke-width="0.7"/><rect x="280.2" y="154.6" width="1.8" height="2.2" fill="none" stroke="#58b0ea" stroke-width="0.6"/><rect x="283.0" y="154.6" width="1.8" height="2.2" fill="none" stroke="#58b0ea" stroke-width="0.6"/><rect x="307.1" y="133.8" width="1.8" height="2.2" fill="none" stroke="#58b0ea" stroke-width="0.6"/><rect x="309.9" y="133.8" width="1.8" height="2.2" fill="none" stroke="#58b0ea" stroke-width="0.6"/><rect x="302.8" y="147.1" width="1.8" height="2.2" fill="none" stroke="#58b0ea" stroke-width="0.6"/><rect x="305.6" y="147.1" width="1.8" height="2.2" fill="none" stroke="#58b0ea" stroke-width="0.6"/><rect x="325.6" y="132.5" width="1.8" height="2.2" fill="none" stroke="#3c86d8" stroke-width="0.6"/><rect x="328.4" y="132.5" width="1.8" height="2.2" fill="none" stroke="#3c86d8" stroke-width="0.6"/><rect x="271.5" y="152.2" width="1.8" height="2.2" fill="none" stroke="#3c86d8" stroke-width="0.6"/><rect x="274.3" y="152.2" width="1.8" height="2.2" fill="none" stroke="#3c86d8" stroke-width="0.6"/><rect x="341.5" y="151.1" width="3.0" height="3.0" fill="none" stroke="#3c86d8" stroke-width="0.7"/><rect x="295.2" y="152.4" width="1.8" height="2.2" fill="none" stroke="#3c86d8" stroke-width="0.6"/><rect x="298.0" y="152.4" width="1.8" height="2.2" fill="none" stroke="#3c86d8" stroke-width="0.6"/><rect x="300.9" y="129.0" width="2.2" height="1.8" fill="none" stroke="#2d68cc" stroke-width="0.6"/><rect x="300.9" y="131.8" width="2.2" height="1.8" fill="none" stroke="#2d68cc" stroke-width="0.6"/><rect x="286.8" y="143.8" width="1.8" height="2.2" fill="none" stroke="#58b0ea" stroke-width="0.6"/><rect x="289.6" y="143.8" width="1.8" height="2.2" fill="none" stroke="#58b0ea" stroke-width="0.6"/><rect x="280.5" y="133.3" width="1.8" height="2.2" fill="none" stroke="#58b0ea" stroke-width="0.6"/><rect x="283.3" y="133.3" width="1.8" height="2.2" fill="none" stroke="#58b0ea" stroke-width="0.6"/><rect x="277.6" y="152.0" width="1.8" height="2.2" fill="none" stroke="#3c86d8" stroke-width="0.6"/><rect x="280.4" y="152.0" width="1.8" height="2.2" fill="none" stroke="#3c86d8" stroke-width="0.6"/><rect x="351.7" y="155.2" width="2.2" height="1.8" fill="none" stroke="#2d68cc" stroke-width="0.6"/><rect x="351.7" y="158.0" width="2.2" height="1.8" fill="none" stroke="#2d68cc" stroke-width="0.6"/><rect x="309.2" y="128.5" width="2.5" height="3.0" fill="none" stroke="#58b0ea" stroke-width="0.7"/><rect x="291.5" y="136.8" width="2.2" height="1.8" fill="none" stroke="#58b0ea" stroke-width="0.6"/><rect x="291.5" y="139.6" width="2.2" height="1.8" fill="none" stroke="#58b0ea" stroke-width="0.6"/><rect x="284.9" y="141.6" width="4.0" height="3.0" fill="none" stroke="#3c86d8" stroke-width="0.7"/><rect x="270.7" y="145.4" width="5.0" height="4.0" fill="none" stroke="#3c86d8" stroke-width="0.8"/><rect x="272.2" y="137.7" width="2.2" height="1.8" fill="none" stroke="#3c86d8" stroke-width="0.6"/><rect x="272.2" y="140.5" width="2.2" height="1.8" fill="none" stroke="#3c86d8" stroke-width="0.6"/><rect x="295.7" y="138.6" width="1.8" height="2.2" fill="none" stroke="#2d68cc" stroke-width="0.6"/><rect x="298.5" y="138.6" width="1.8" height="2.2" fill="none" stroke="#2d68cc" stroke-width="0.6"/><rect x="336.0" y="149.0" width="2.2" height="1.8" fill="none" stroke="#58b0ea" stroke-width="0.6"/><rect x="336.0" y="151.8" width="2.2" height="1.8" fill="none" stroke="#58b0ea" stroke-width="0.6"/><rect x="334.2" y="145.3" width="2.2" height="1.8" fill="none" stroke="#58b0ea" stroke-width="0.6"/><rect x="334.2" y="148.1" width="2.2" height="1.8" fill="none" stroke="#58b0ea" stroke-width="0.6"/><rect x="271.3" y="144.8" width="2.2" height="1.8" fill="none" stroke="#3c86d8" stroke-width="0.6"/><rect x="271.3" y="147.6" width="2.2" height="1.8" fill="none" stroke="#3c86d8" stroke-width="0.6"/><rect x="302.9" y="152.3" width="1.8" height="2.2" fill="none" stroke="#3c86d8" stroke-width="0.6"/><rect x="305.7" y="152.3" width="1.8" height="2.2" fill="none" stroke="#3c86d8" stroke-width="0.6"/><rect x="298.2" y="147.2" width="1.8" height="2.2" fill="none" stroke="#58b0ea" stroke-width="0.6"/><rect x="301.0" y="147.2" width="1.8" height="2.2" fill="none" stroke="#58b0ea" stroke-width="0.6"/><rect x="338.8" y="153.3" width="2.2" height="1.8" fill="none" stroke="#3c86d8" stroke-width="0.6"/><rect x="338.8" y="156.1" width="2.2" height="1.8" fill="none" stroke="#3c86d8" stroke-width="0.6"/><rect x="289.9" y="131.1" width="1.8" height="2.2" fill="none" stroke="#3c86d8" stroke-width="0.6"/><rect x="292.7" y="131.1" width="1.8" height="2.2" fill="none" stroke="#3c86d8" stroke-width="0.6"/><rect x="309.7" y="143.5" width="1.8" height="2.2" fill="none" stroke="#58b0ea" stroke-width="0.6"/><rect x="312.5" y="143.5" width="1.8" height="2.2" fill="none" stroke="#58b0ea" stroke-width="0.6"/><rect x="288.7" y="144.5" width="1.8" height="2.2" fill="none" stroke="#2d68cc" stroke-width="0.6"/><rect x="291.5" y="144.5" width="1.8" height="2.2" fill="none" stroke="#2d68cc" stroke-width="0.6"/><rect x="298.8" y="133.7" width="2.2" height="1.8" fill="none" stroke="#3c86d8" stroke-width="0.6"/><rect x="298.8" y="136.5" width="2.2" height="1.8" fill="none" stroke="#3c86d8" stroke-width="0.6"/><rect x="351.0" y="154.3" width="2.5" height="2.5" fill="none" stroke="#3c86d8" stroke-width="0.7"/><rect x="276.9" y="129.6" width="4.0" height="2.5" fill="none" stroke="#3c86d8" stroke-width="0.7"/><rect x="275.3" y="133.0" width="2.0" height="1.6" fill="#2d68cc"/><rect x="292.5" y="153.8" width="1.8" height="2.2" fill="none" stroke="#3c86d8" stroke-width="0.6"/><rect x="295.3" y="153.8" width="1.8" height="2.2" fill="none" stroke="#3c86d8" stroke-width="0.6"/><rect x="287.6" y="145.3" width="2.5" height="2.5" fill="none" stroke="#58b0ea" stroke-width="0.7"/><rect x="318.3" y="156.5" width="1.8" height="2.2" fill="none" stroke="#3c86d8" stroke-width="0.6"/><rect x="321.1" y="156.5" width="1.8" height="2.2" fill="none" stroke="#3c86d8" stroke-width="0.6"/><rect x="336.4" y="137.9" width="4.0" height="2.5" fill="none" stroke="#58b0ea" stroke-width="0.7"/><rect x="268.9" y="155.3" width="2.2" height="1.8" fill="none" stroke="#58b0ea" stroke-width="0.6"/><rect x="268.9" y="158.1" width="2.2" height="1.8" fill="none" stroke="#58b0ea" stroke-width="0.6"/><rect x="270.7" y="150.9" width="1.8" height="2.2" fill="none" stroke="#3c86d8" stroke-width="0.6"/><rect x="273.5" y="150.9" width="1.8" height="2.2" fill="none" stroke="#3c86d8" stroke-width="0.6"/><rect x="280.7" y="138.0" width="1.8" height="2.2" fill="none" stroke="#3c86d8" stroke-width="0.6"/><rect x="283.5" y="138.0" width="1.8" height="2.2" fill="none" stroke="#3c86d8" stroke-width="0.6"/><rect x="345.7" y="147.9" width="2.5" height="3.0" fill="none" stroke="#58b0ea" stroke-width="0.7"/><rect x="271.2" y="143.2" width="1.8" height="2.2" fill="none" stroke="#58b0ea" stroke-width="0.6"/><rect x="274.0" y="143.2" width="1.8" height="2.2" fill="none" stroke="#58b0ea" stroke-width="0.6"/><rect x="331.1" y="146.5" width="1.8" height="2.2" fill="none" stroke="#58b0ea" stroke-width="0.6"/><rect x="333.9" y="146.5" width="1.8" height="2.2" fill="none" stroke="#58b0ea" stroke-width="0.6"/><rect x="339.0" y="150.8" width="1.8" height="2.2" fill="none" stroke="#2d68cc" stroke-width="0.6"/><rect x="341.8" y="150.8" width="1.8" height="2.2" fill="none" stroke="#2d68cc" stroke-width="0.6"/><rect x="317.0" y="151.3" width="2.2" height="1.8" fill="none" stroke="#58b0ea" stroke-width="0.6"/><rect x="317.0" y="154.1" width="2.2" height="1.8" fill="none" stroke="#58b0ea" stroke-width="0.6"/><rect x="279.3" y="152.0" width="2.5" height="1.2" fill="#58b0ea"/><rect x="337.9" y="151.3" width="2.2" height="1.8" fill="none" stroke="#58b0ea" stroke-width="0.6"/><rect x="337.9" y="154.1" width="2.2" height="1.8" fill="none" stroke="#58b0ea" stroke-width="0.6"/><rect x="300.4" y="146.6" width="2.0" height="1.2" fill="#58b0ea"/><rect x="273.7" y="150.7" width="2.5" height="2.5" fill="none" stroke="#3c86d8" stroke-width="0.7"/><rect x="317.4" y="144.3" width="2.0" height="1.6" fill="#1f3e9c"/><rect x="337.4" y="139.8" width="1.8" height="2.2" fill="none" stroke="#2d68cc" stroke-width="0.6"/><rect x="340.2" y="139.8" width="1.8" height="2.2" fill="none" stroke="#2d68cc" stroke-width="0.6"/><rect x="323.7" y="154.2" width="2.2" height="1.8" fill="none" stroke="#2d68cc" stroke-width="0.6"/><rect x="323.7" y="157.0" width="2.2" height="1.8" fill="none" stroke="#2d68cc" stroke-width="0.6"/><rect x="268.4" y="142.2" width="1.8" height="2.2" fill="none" stroke="#58b0ea" stroke-width="0.6"/><rect x="271.2" y="142.2" width="1.8" height="2.2" fill="none" stroke="#58b0ea" stroke-width="0.6"/><rect x="341.8" y="141.8" width="2.2" height="1.8" fill="none" stroke="#2d68cc" stroke-width="0.6"/><rect x="341.8" y="144.6" width="2.2" height="1.8" fill="none" stroke="#2d68cc" stroke-width="0.6"/><rect x="308.5" y="141.0" width="5.5" height="4.5" fill="#1f3e9c"/><rect x="332.0" y="140.0" width="6.0" height="4.5" fill="#3a7ad8"/><rect x="286.7" y="162.5" width="1.3" height="3.5" fill="#58b0ea"/><rect x="288.7" y="162.5" width="1.3" height="3.5" fill="#3c86d8"/><rect x="290.7" y="162.5" width="1.3" height="3.5" fill="#58b0ea"/><rect x="292.7" y="162.5" width="1.3" height="3.5" fill="#58b0ea"/><rect x="294.7" y="162.5" width="1.3" height="3.5" fill="#3c86d8"/><rect x="296.7" y="162.5" width="1.3" height="3.5" fill="#58b0ea"/><rect x="298.7" y="162.5" width="1.3" height="3.5" fill="#58b0ea"/><rect x="283.0" y="167.0" width="3.5" height="1.4" fill="#58b0ea"/><rect x="283.0" y="169.2" width="3.5" height="1.4" fill="#58b0ea"/><rect x="283.0" y="171.4" width="3.5" height="1.4" fill="#58b0ea"/><rect x="283.0" y="173.6" width="3.5" height="1.4" fill="#58b0ea"/><rect x="283.0" y="175.8" width="3.5" height="1.4" fill="#58b0ea"/><rect x="283.0" y="178.0" width="3.5" height="1.4" fill="#58b0ea"/><rect x="300.0" y="167.0" width="3.5" height="1.4" fill="#58b0ea"/><rect x="300.0" y="169.2" width="3.5" height="1.4" fill="#58b0ea"/><rect x="300.0" y="171.4" width="3.5" height="1.4" fill="#58b0ea"/><rect x="300.0" y="173.6" width="3.5" height="1.4" fill="#58b0ea"/><rect x="300.0" y="175.8" width="3.5" height="1.4" fill="#58b0ea"/><rect x="300.0" y="178.0" width="3.5" height="1.4" fill="#58b0ea"/><rect x="286.0" y="179.0" width="1.3" height="3.0" fill="#3c86d8"/><rect x="288.0" y="179.0" width="1.3" height="3.0" fill="#58b0ea"/><rect x="290.0" y="179.0" width="1.3" height="3.0" fill="#3c86d8"/><rect x="292.0" y="179.0" width="1.3" height="3.0" fill="#3c86d8"/><rect x="294.0" y="179.0" width="1.3" height="3.0" fill="#58b0ea"/><rect x="296.0" y="179.0" width="1.3" height="3.0" fill="#3c86d8"/><rect x="298.0" y="179.0" width="1.3" height="3.0" fill="#3c86d8"/><rect x="307.0" y="177.5" width="1.8" height="2.2" fill="none" stroke="#2d68cc" stroke-width="0.6"/><rect x="309.8" y="177.5" width="1.8" height="2.2" fill="none" stroke="#2d68cc" stroke-width="0.6"/><rect x="302.6" y="188.2" width="1.8" height="2.2" fill="none" stroke="#2d68cc" stroke-width="0.6"/><rect x="305.4" y="188.2" width="1.8" height="2.2" fill="none" stroke="#2d68cc" stroke-width="0.6"/><rect x="281.2" y="172.2" width="3.0" height="2.5" fill="none" stroke="#58b0ea" stroke-width="0.7"/><rect x="283.4" y="206.0" width="1.8" height="2.2" fill="none" stroke="#3c86d8" stroke-width="0.6"/><rect x="286.2" y="206.0" width="1.8" height="2.2" fill="none" stroke="#3c86d8" stroke-width="0.6"/><rect x="302.3" y="177.3" width="1.8" height="2.2" fill="none" stroke="#3c86d8" stroke-width="0.6"/><rect x="305.1" y="177.3" width="1.8" height="2.2" fill="none" stroke="#3c86d8" stroke-width="0.6"/><rect x="290.7" y="223.0" width="2.2" height="1.8" fill="none" stroke="#58b0ea" stroke-width="0.6"/><rect x="290.7" y="225.8" width="2.2" height="1.8" fill="none" stroke="#58b0ea" stroke-width="0.6"/><rect x="296.6" y="176.1" width="1.5" height="1.6" fill="#2d68cc"/><rect x="275.0" y="164.4" width="2.5" height="1.2" fill="#58b0ea"/><rect x="326.6" y="205.5" width="5.0" height="5.0" fill="none" stroke="#3c86d8" stroke-width="0.8"/><rect x="280.3" y="201.2" width="2.2" height="1.8" fill="none" stroke="#2d68cc" stroke-width="0.6"/><rect x="280.3" y="204.0" width="2.2" height="1.8" fill="none" stroke="#2d68cc" stroke-width="0.6"/><rect x="300.3" y="204.2" width="4.0" height="2.5" fill="none" stroke="#58b0ea" stroke-width="0.7"/><rect x="338.5" y="190.8" width="2.2" height="1.8" fill="none" stroke="#58b0ea" stroke-width="0.6"/><rect x="338.5" y="193.6" width="2.2" height="1.8" fill="none" stroke="#58b0ea" stroke-width="0.6"/><rect x="279.0" y="218.5" width="3.0" height="3.0" fill="none" stroke="#58b0ea" stroke-width="0.7"/><rect x="327.6" y="223.1" width="2.5" height="3.0" fill="none" stroke="#58b0ea" stroke-width="0.7"/><rect x="308.8" y="150.6" width="2.0" height="1.2" fill="#58b0ea"/><rect x="288.1" y="225.3" width="2.2" height="1.8" fill="none" stroke="#58b0ea" stroke-width="0.6"/><rect x="288.1" y="228.1" width="2.2" height="1.8" fill="none" stroke="#58b0ea" stroke-width="0.6"/><rect x="287.2" y="198.3" width="6.0" height="4.0" fill="none" stroke="#3c86d8" stroke-width="0.8"/><rect x="313.4" y="183.4" width="1.8" height="2.2" fill="none" stroke="#58b0ea" stroke-width="0.6"/><rect x="316.2" y="183.4" width="1.8" height="2.2" fill="none" stroke="#58b0ea" stroke-width="0.6"/><rect x="309.5" y="229.9" width="2.2" height="1.8" fill="none" stroke="#2d68cc" stroke-width="0.6"/><rect x="309.5" y="232.7" width="2.2" height="1.8" fill="none" stroke="#2d68cc" stroke-width="0.6"/><rect x="297.7" y="218.3" width="2.2" height="1.8" fill="none" stroke="#58b0ea" stroke-width="0.6"/><rect x="297.7" y="221.1" width="2.2" height="1.8" fill="none" stroke="#58b0ea" stroke-width="0.6"/><rect x="330.6" y="178.5" width="1.8" height="2.2" fill="none" stroke="#58b0ea" stroke-width="0.6"/><rect x="333.4" y="178.5" width="1.8" height="2.2" fill="none" stroke="#58b0ea" stroke-width="0.6"/><rect x="286.4" y="210.5" width="1.8" height="2.2" fill="none" stroke="#2d68cc" stroke-width="0.6"/><rect x="289.2" y="210.5" width="1.8" height="2.2" fill="none" stroke="#2d68cc" stroke-width="0.6"/><rect x="338.5" y="198.2" width="7.0" height="4.0" fill="none" stroke="#3c86d8" stroke-width="0.8"/><rect x="296.7" y="227.4" width="1.8" height="2.2" fill="none" stroke="#2d68cc" stroke-width="0.6"/><rect x="299.5" y="227.4" width="1.8" height="2.2" fill="none" stroke="#2d68cc" stroke-width="0.6"/><rect x="340.0" y="183.1" width="3.0" height="3.0" fill="none" stroke="#2d68cc" stroke-width="0.7"/><rect x="302.0" y="229.0" width="1.8" height="2.2" fill="none" stroke="#3c86d8" stroke-width="0.6"/><rect x="304.8" y="229.0" width="1.8" height="2.2" fill="none" stroke="#3c86d8" stroke-width="0.6"/><rect x="339.8" y="201.1" width="2.2" height="1.8" fill="none" stroke="#58b0ea" stroke-width="0.6"/><rect x="339.8" y="203.9" width="2.2" height="1.8" fill="none" stroke="#58b0ea" stroke-width="0.6"/><rect x="319.6" y="213.8" width="1.8" height="2.2" fill="none" stroke="#3c86d8" stroke-width="0.6"/><rect x="322.4" y="213.8" width="1.8" height="2.2" fill="none" stroke="#3c86d8" stroke-width="0.6"/><rect x="294.5" y="193.9" width="2.5" height="3.0" fill="none" stroke="#58b0ea" stroke-width="0.7"/><rect x="302.4" y="208.8" width="2.2" height="1.8" fill="none" stroke="#2d68cc" stroke-width="0.6"/><rect x="302.4" y="211.6" width="2.2" height="1.8" fill="none" stroke="#2d68cc" stroke-width="0.6"/><rect x="334.6" y="159.9" width="2.2" height="1.8" fill="none" stroke="#58b0ea" stroke-width="0.6"/><rect x="334.6" y="162.7" width="2.2" height="1.8" fill="none" stroke="#58b0ea" stroke-width="0.6"/><rect x="277.9" y="217.8" width="2.2" height="1.8" fill="none" stroke="#2d68cc" stroke-width="0.6"/><rect x="277.9" y="220.6" width="2.2" height="1.8" fill="none" stroke="#2d68cc" stroke-width="0.6"/><rect x="317.2" y="179.5" width="7.0" height="4.0" fill="none" stroke="#3c86d8" stroke-width="0.8"/><rect x="333.4" y="208.4" width="2.0" height="1.2" fill="#58b0ea"/><rect x="342.7" y="202.0" width="3.0" height="3.0" fill="none" stroke="#58b0ea" stroke-width="0.7"/><rect x="303.0" y="191.0" width="1.8" height="2.2" fill="none" stroke="#3c86d8" stroke-width="0.6"/><rect x="305.8" y="191.0" width="1.8" height="2.2" fill="none" stroke="#3c86d8" stroke-width="0.6"/><rect x="324.9" y="161.8" width="4.0" height="3.0" fill="none" stroke="#58b0ea" stroke-width="0.7"/><rect x="284.3" y="177.8" width="1.8" height="2.2" fill="none" stroke="#58b0ea" stroke-width="0.6"/><rect x="287.1" y="177.8" width="1.8" height="2.2" fill="none" stroke="#58b0ea" stroke-width="0.6"/><rect x="279.7" y="150.3" width="2.2" height="1.8" fill="none" stroke="#3c86d8" stroke-width="0.6"/><rect x="279.7" y="153.1" width="2.2" height="1.8" fill="none" stroke="#3c86d8" stroke-width="0.6"/><rect x="315.4" y="183.1" width="2.2" height="1.8" fill="none" stroke="#2d68cc" stroke-width="0.6"/><rect x="315.4" y="185.9" width="2.2" height="1.8" fill="none" stroke="#2d68cc" stroke-width="0.6"/><rect x="330.0" y="205.7" width="1.5" height="1.2" fill="#2d68cc"/><rect x="310.0" y="223.7" width="2.5" height="1.2" fill="#58b0ea"/><rect x="284.2" y="207.7" width="4.0" height="2.5" fill="none" stroke="#2d68cc" stroke-width="0.7"/><rect x="329.0" y="199.6" width="2.2" height="1.8" fill="none" stroke="#3c86d8" stroke-width="0.6"/><rect x="329.0" y="202.4" width="2.2" height="1.8" fill="none" stroke="#3c86d8" stroke-width="0.6"/><rect x="338.3" y="175.4" width="2.2" height="1.8" fill="none" stroke="#58b0ea" stroke-width="0.6"/><rect x="338.3" y="178.2" width="2.2" height="1.8" fill="none" stroke="#58b0ea" stroke-width="0.6"/><rect x="300.2" y="207.4" width="1.8" height="2.2" fill="none" stroke="#2d68cc" stroke-width="0.6"/><rect x="303.0" y="207.4" width="1.8" height="2.2" fill="none" stroke="#2d68cc" stroke-width="0.6"/><rect x="290.3" y="187.5" width="3.0" height="2.5" fill="none" stroke="#58b0ea" stroke-width="0.7"/><rect x="343.4" y="198.4" width="2.2" height="1.8" fill="none" stroke="#58b0ea" stroke-width="0.6"/><rect x="343.4" y="201.2" width="2.2" height="1.8" fill="none" stroke="#58b0ea" stroke-width="0.6"/><rect x="277.8" y="217.8" width="1.8" height="2.2" fill="none" stroke="#3c86d8" stroke-width="0.6"/><rect x="280.6" y="217.8" width="1.8" height="2.2" fill="none" stroke="#3c86d8" stroke-width="0.6"/><rect x="295.6" y="226.8" width="2.0" height="1.2" fill="#58b0ea"/><rect x="314.0" y="217.3" width="1.8" height="2.2" fill="none" stroke="#58b0ea" stroke-width="0.6"/><rect x="316.8" y="217.3" width="1.8" height="2.2" fill="none" stroke="#58b0ea" stroke-width="0.6"/><rect x="290.6" y="164.2" width="3.0" height="3.0" fill="none" stroke="#2d68cc" stroke-width="0.7"/><rect x="279.4" y="201.7" width="3.0" height="3.0" fill="none" stroke="#58b0ea" stroke-width="0.7"/><rect x="310.8" y="198.3" width="1.8" height="2.2" fill="none" stroke="#58b0ea" stroke-width="0.6"/><rect x="313.6" y="198.3" width="1.8" height="2.2" fill="none" stroke="#58b0ea" stroke-width="0.6"/><rect x="331.3" y="228.8" width="1.8" height="2.2" fill="none" stroke="#2d68cc" stroke-width="0.6"/><rect x="334.1" y="228.8" width="1.8" height="2.2" fill="none" stroke="#2d68cc" stroke-width="0.6"/><rect x="280.0" y="189.2" width="1.8" height="2.2" fill="none" stroke="#58b0ea" stroke-width="0.6"/><rect x="282.8" y="189.2" width="1.8" height="2.2" fill="none" stroke="#58b0ea" stroke-width="0.6"/><rect x="342.8" y="222.2" width="2.2" height="1.8" fill="none" stroke="#3c86d8" stroke-width="0.6"/><rect x="342.8" y="225.0" width="2.2" height="1.8" fill="none" stroke="#3c86d8" stroke-width="0.6"/><rect x="298.9" y="165.6" width="2.2" height="1.8" fill="none" stroke="#2d68cc" stroke-width="0.6"/><rect x="298.9" y="168.4" width="2.2" height="1.8" fill="none" stroke="#2d68cc" stroke-width="0.6"/><rect x="328.2" y="156.3" width="2.5" height="1.2" fill="#58b0ea"/><rect x="329.4" y="214.8" width="2.5" height="3.0" fill="none" stroke="#2d68cc" stroke-width="0.7"/><rect x="327.3" y="227.8" width="2.0" height="1.2" fill="#58b0ea"/><rect x="299.8" y="184.3" width="2.0" height="1.2" fill="#1f3e9c"/><rect x="344.4" y="175.1" width="1.8" height="2.2" fill="none" stroke="#3c86d8" stroke-width="0.6"/><rect x="347.2" y="175.1" width="1.8" height="2.2" fill="none" stroke="#3c86d8" stroke-width="0.6"/><rect x="323.4" y="184.5" width="1.8" height="2.2" fill="none" stroke="#58b0ea" stroke-width="0.6"/><rect x="326.2" y="184.5" width="1.8" height="2.2" fill="none" stroke="#58b0ea" stroke-width="0.6"/><rect x="329.1" y="178.1" width="2.0" height="1.6" fill="#2d68cc"/><rect x="338.8" y="215.2" width="2.2" height="1.8" fill="none" stroke="#3c86d8" stroke-width="0.6"/><rect x="338.8" y="218.0" width="2.2" height="1.8" fill="none" stroke="#3c86d8" stroke-width="0.6"/><rect x="334.5" y="193.3" width="1.8" height="2.2" fill="none" stroke="#58b0ea" stroke-width="0.6"/><rect x="337.3" y="193.3" width="1.8" height="2.2" fill="none" stroke="#58b0ea" stroke-width="0.6"/><rect x="289.7" y="170.7" width="1.8" height="2.2" fill="none" stroke="#3c86d8" stroke-width="0.6"/><rect x="292.5" y="170.7" width="1.8" height="2.2" fill="none" stroke="#3c86d8" stroke-width="0.6"/><rect x="324.7" y="227.5" width="7.0" height="5.0" fill="none" stroke="#2d68cc" stroke-width="0.8"/><rect x="331.8" y="219.0" width="1.8" height="2.2" fill="none" stroke="#58b0ea" stroke-width="0.6"/><rect x="334.6" y="219.0" width="1.8" height="2.2" fill="none" stroke="#58b0ea" stroke-width="0.6"/><rect x="282.8" y="209.7" width="2.2" height="1.8" fill="none" stroke="#58b0ea" stroke-width="0.6"/><rect x="282.8" y="212.5" width="2.2" height="1.8" fill="none" stroke="#58b0ea" stroke-width="0.6"/><rect x="275.6" y="218.1" width="2.5" height="2.5" fill="none" stroke="#58b0ea" stroke-width="0.7"/><rect x="337.2" y="193.8" width="1.8" height="2.2" fill="none" stroke="#2d68cc" stroke-width="0.6"/><rect x="340.0" y="193.8" width="1.8" height="2.2" fill="none" stroke="#2d68cc" stroke-width="0.6"/><rect x="298.7" y="195.9" width="2.2" height="1.8" fill="none" stroke="#3c86d8" stroke-width="0.6"/><rect x="298.7" y="198.7" width="2.2" height="1.8" fill="none" stroke="#3c86d8" stroke-width="0.6"/><rect x="275.5" y="166.8" width="2.2" height="1.8" fill="none" stroke="#58b0ea" stroke-width="0.6"/><rect x="275.5" y="169.6" width="2.2" height="1.8" fill="none" stroke="#58b0ea" stroke-width="0.6"/><rect x="281.9" y="222.0" width="2.5" height="1.2" fill="#58b0ea"/><rect x="315.0" y="225.5" width="2.5" height="2.5" fill="none" stroke="#58b0ea" stroke-width="0.7"/><rect x="335.3" y="163.9" width="4.0" height="3.0" fill="none" stroke="#3c86d8" stroke-width="0.7"/><rect x="323.4" y="188.7" width="1.8" height="2.2" fill="none" stroke="#58b0ea" stroke-width="0.6"/><rect x="326.2" y="188.7" width="1.8" height="2.2" fill="none" stroke="#58b0ea" stroke-width="0.6"/><rect x="316.9" y="155.1" width="1.8" height="2.2" fill="none" stroke="#3c86d8" stroke-width="0.6"/><rect x="319.7" y="155.1" width="1.8" height="2.2" fill="none" stroke="#3c86d8" stroke-width="0.6"/><rect x="275.3" y="196.4" width="4.0" height="2.5" fill="none" stroke="#3c86d8" stroke-width="0.7"/><rect x="292.0" y="224.5" width="1.8" height="2.2" fill="none" stroke="#58b0ea" stroke-width="0.6"/><rect x="294.8" y="224.5" width="1.8" height="2.2" fill="none" stroke="#58b0ea" stroke-width="0.6"/><rect x="277.7" y="154.0" width="1.8" height="2.2" fill="none" stroke="#3c86d8" stroke-width="0.6"/><rect x="280.5" y="154.0" width="1.8" height="2.2" fill="none" stroke="#3c86d8" stroke-width="0.6"/><rect x="329.3" y="153.6" width="2.2" height="1.8" fill="none" stroke="#58b0ea" stroke-width="0.6"/><rect x="329.3" y="156.4" width="2.2" height="1.8" fill="none" stroke="#58b0ea" stroke-width="0.6"/><rect x="293.4" y="162.6" width="1.8" height="2.2" fill="none" stroke="#58b0ea" stroke-width="0.6"/><rect x="296.2" y="162.6" width="1.8" height="2.2" fill="none" stroke="#58b0ea" stroke-width="0.6"/><rect x="328.2" y="222.4" width="1.8" height="2.2" fill="none" stroke="#3c86d8" stroke-width="0.6"/><rect x="331.0" y="222.4" width="1.8" height="2.2" fill="none" stroke="#3c86d8" stroke-width="0.6"/><rect x="331.5" y="163.4" width="2.2" height="1.8" fill="none" stroke="#58b0ea" stroke-width="0.6"/><rect x="331.5" y="166.2" width="2.2" height="1.8" fill="none" stroke="#58b0ea" stroke-width="0.6"/><rect x="310.7" y="228.5" width="2.2" height="1.8" fill="none" stroke="#58b0ea" stroke-width="0.6"/><rect x="310.7" y="231.3" width="2.2" height="1.8" fill="none" stroke="#58b0ea" stroke-width="0.6"/><rect x="280.0" y="152.4" width="4.0" height="2.5" fill="none" stroke="#58b0ea" stroke-width="0.7"/><rect x="324.4" y="204.2" width="2.2" height="1.8" fill="none" stroke="#58b0ea" stroke-width="0.6"/><rect x="324.4" y="207.0" width="2.2" height="1.8" fill="none" stroke="#58b0ea" stroke-width="0.6"/><rect x="335.0" y="185.0" width="3.0" height="1.5" fill="#58b0ea"/><rect x="335.0" y="187.5" width="3.0" height="1.5" fill="#58b0ea"/><rect x="335.0" y="190.0" width="3.0" height="1.5" fill="#58b0ea"/><rect x="335.0" y="192.5" width="3.0" height="1.5" fill="#58b0ea"/><rect x="335.0" y="195.0" width="3.0" height="1.5" fill="#58b0ea"/><rect x="335.0" y="197.5" width="3.0" height="1.5" fill="#58b0ea"/><rect x="298.3" y="234.6" width="8.5" height="1.5" fill="#2d68cc"/><rect x="298.3" y="237.0" width="8.5" height="1.5" fill="#58b0ea"/><rect x="298.3" y="239.4" width="8.5" height="1.5" fill="#2d68cc"/><rect x="298.3" y="241.8" width="8.5" height="1.5" fill="#58b0ea"/><rect x="298.3" y="244.2" width="8.5" height="1.5" fill="#2d68cc"/><rect x="298.3" y="246.6" width="8.5" height="1.5" fill="#58b0ea"/><rect x="298.3" y="249.0" width="8.5" height="1.5" fill="#2d68cc"/><rect x="298.3" y="251.4" width="8.5" height="1.5" fill="#58b0ea"/><rect x="298.3" y="253.8" width="8.5" height="1.5" fill="#2d68cc"/><rect x="298.3" y="256.2" width="8.5" height="1.5" fill="#58b0ea"/><rect x="298.3" y="258.6" width="8.5" height="1.5" fill="#2d68cc"/><rect x="298.3" y="261.0" width="8.5" height="1.5" fill="#58b0ea"/><rect x="298.3" y="263.4" width="8.5" height="1.5" fill="#2d68cc"/><rect x="298.3" y="265.8" width="8.5" height="1.5" fill="#58b0ea"/><rect x="298.3" y="268.2" width="8.5" height="1.5" fill="#2d68cc"/><rect x="298.3" y="270.6" width="8.5" height="1.5" fill="#58b0ea"/><rect x="298.3" y="273.0" width="8.5" height="1.5" fill="#2d68cc"/><rect x="298.3" y="275.4" width="8.5" height="1.5" fill="#58b0ea"/><rect x="298.3" y="277.8" width="8.5" height="1.5" fill="#2d68cc"/><rect x="298.3" y="280.2" width="8.5" height="1.5" fill="#58b0ea"/><rect x="330.0" y="213.0" width="5.0" height="1.5" fill="#58b0ea"/><rect x="330.0" y="215.5" width="5.0" height="1.5" fill="#3c86d8"/><rect x="330.0" y="218.0" width="5.0" height="1.5" fill="#58b0ea"/><rect x="330.0" y="220.5" width="5.0" height="1.5" fill="#3c86d8"/><rect x="330.0" y="223.0" width="5.0" height="1.5" fill="#58b0ea"/><rect x="330.0" y="225.5" width="5.0" height="1.5" fill="#3c86d8"/><rect x="330.0" y="228.0" width="5.0" height="1.5" fill="#58b0ea"/><rect x="330.0" y="230.5" width="5.0" height="1.5" fill="#3c86d8"/><rect x="297.0" y="208.0" width="6.0" height="1.5" fill="#58b0ea"/><rect x="297.0" y="210.5" width="6.0" height="1.5" fill="#3c86d8"/><rect x="297.0" y="213.0" width="6.0" height="1.5" fill="#58b0ea"/><rect x="297.0" y="215.5" width="6.0" height="1.5" fill="#3c86d8"/><rect x="297.0" y="218.0" width="6.0" height="1.5" fill="#58b0ea"/><rect x="297.0" y="220.5" width="6.0" height="1.5" fill="#3c86d8"/><rect x="297.0" y="223.0" width="6.0" height="1.5" fill="#58b0ea"/><rect x="297.0" y="225.5" width="6.0" height="1.5" fill="#3c86d8"/><rect x="297.0" y="228.0" width="6.0" height="1.5" fill="#58b0ea"/><rect x="297.0" y="230.5" width="6.0" height="1.5" fill="#3c86d8"/><rect x="305.4" y="282.7" width="13.4" height="9.3" fill="none" stroke="#1f3e9c" stroke-width="1.2"/><rect x="275.5" y="230.5" width="2.5" height="3.0" fill="none" stroke="#58b0ea" stroke-width="0.7"/><rect x="269.1" y="276.0" width="2.5" height="2.5" fill="none" stroke="#58b0ea" stroke-width="0.7"/><rect x="280.6" y="252.9" width="1.8" height="2.2" fill="none" stroke="#3c86d8" stroke-width="0.6"/><rect x="283.4" y="252.9" width="1.8" height="2.2" fill="none" stroke="#3c86d8" stroke-width="0.6"/><rect x="290.9" y="285.1" width="1.8" height="2.2" fill="none" stroke="#2d68cc" stroke-width="0.6"/><rect x="293.7" y="285.1" width="1.8" height="2.2" fill="none" stroke="#2d68cc" stroke-width="0.6"/><rect x="271.3" y="250.1" width="2.2" height="1.8" fill="none" stroke="#58b0ea" stroke-width="0.6"/><rect x="271.3" y="252.9" width="2.2" height="1.8" fill="none" stroke="#58b0ea" stroke-width="0.6"/><rect x="282.6" y="293.6" width="2.5" height="2.5" fill="none" stroke="#58b0ea" stroke-width="0.7"/><rect x="263.5" y="274.4" width="4.0" height="3.0" fill="none" stroke="#3c86d8" stroke-width="0.7"/><rect x="277.5" y="256.5" width="4.0" height="2.5" fill="none" stroke="#3c86d8" stroke-width="0.7"/><rect x="293.0" y="284.4" width="4.0" height="2.5" fill="none" stroke="#58b0ea" stroke-width="0.7"/><rect x="290.9" y="258.0" width="2.0" height="1.6" fill="#1f3e9c"/><rect x="286.0" y="246.4" width="2.2" height="1.8" fill="none" stroke="#2d68cc" stroke-width="0.6"/><rect x="286.0" y="249.2" width="2.2" height="1.8" fill="none" stroke="#2d68cc" stroke-width="0.6"/><rect x="263.0" y="254.8" width="1.8" height="2.2" fill="none" stroke="#3c86d8" stroke-width="0.6"/><rect x="265.8" y="254.8" width="1.8" height="2.2" fill="none" stroke="#3c86d8" stroke-width="0.6"/><rect x="295.3" y="272.5" width="2.5" height="1.2" fill="#58b0ea"/><rect x="289.3" y="230.9" width="2.2" height="1.8" fill="none" stroke="#2d68cc" stroke-width="0.6"/><rect x="289.3" y="233.7" width="2.2" height="1.8" fill="none" stroke="#2d68cc" stroke-width="0.6"/><rect x="269.8" y="287.6" width="2.0" height="1.2" fill="#58b0ea"/><rect x="288.2" y="280.4" width="2.0" height="1.2" fill="#58b0ea"/><rect x="265.6" y="283.7" width="2.2" height="1.8" fill="none" stroke="#2d68cc" stroke-width="0.6"/><rect x="265.6" y="286.5" width="2.2" height="1.8" fill="none" stroke="#2d68cc" stroke-width="0.6"/><rect x="274.5" y="264.9" width="5.0" height="4.0" fill="none" stroke="#2d68cc" stroke-width="0.8"/><rect x="293.9" y="256.5" width="2.0" height="1.2" fill="#58b0ea"/><rect x="269.4" y="279.1" width="2.5" height="1.2" fill="#58b0ea"/><rect x="286.3" y="294.3" width="1.8" height="2.2" fill="none" stroke="#58b0ea" stroke-width="0.6"/><rect x="289.1" y="294.3" width="1.8" height="2.2" fill="none" stroke="#58b0ea" stroke-width="0.6"/><rect x="282.9" y="240.8" width="2.5" height="1.2" fill="#58b0ea"/><rect x="270.4" y="246.7" width="1.8" height="2.2" fill="none" stroke="#3c86d8" stroke-width="0.6"/><rect x="273.2" y="246.7" width="1.8" height="2.2" fill="none" stroke="#3c86d8" stroke-width="0.6"/><rect x="283.8" y="270.2" width="4.0" height="2.5" fill="none" stroke="#3c86d8" stroke-width="0.7"/><rect x="282.3" y="275.2" width="2.2" height="1.8" fill="none" stroke="#58b0ea" stroke-width="0.6"/><rect x="282.3" y="278.0" width="2.2" height="1.8" fill="none" stroke="#58b0ea" stroke-width="0.6"/><rect x="286.8" y="264.8" width="1.8" height="2.2" fill="none" stroke="#58b0ea" stroke-width="0.6"/><rect x="289.6" y="264.8" width="1.8" height="2.2" fill="none" stroke="#58b0ea" stroke-width="0.6"/><rect x="266.8" y="237.3" width="2.2" height="1.8" fill="none" stroke="#2d68cc" stroke-width="0.6"/><rect x="266.8" y="240.1" width="2.2" height="1.8" fill="none" stroke="#2d68cc" stroke-width="0.6"/><rect x="293.3" y="259.3" width="2.5" height="1.2" fill="#58b0ea"/><rect x="275.4" y="275.3" width="1.8" height="2.2" fill="none" stroke="#58b0ea" stroke-width="0.6"/><rect x="278.2" y="275.3" width="1.8" height="2.2" fill="none" stroke="#58b0ea" stroke-width="0.6"/><rect x="291.3" y="259.9" width="2.2" height="1.8" fill="none" stroke="#3c86d8" stroke-width="0.6"/><rect x="291.3" y="262.7" width="2.2" height="1.8" fill="none" stroke="#3c86d8" stroke-width="0.6"/><rect x="263.0" y="283.9" width="1.8" height="2.2" fill="none" stroke="#3c86d8" stroke-width="0.6"/><rect x="265.8" y="283.9" width="1.8" height="2.2" fill="none" stroke="#3c86d8" stroke-width="0.6"/><rect x="289.3" y="273.6" width="2.2" height="1.8" fill="none" stroke="#58b0ea" stroke-width="0.6"/><rect x="289.3" y="276.4" width="2.2" height="1.8" fill="none" stroke="#58b0ea" stroke-width="0.6"/><rect x="290.8" y="234.7" width="1.8" height="2.2" fill="none" stroke="#2d68cc" stroke-width="0.6"/><rect x="293.6" y="234.7" width="1.8" height="2.2" fill="none" stroke="#2d68cc" stroke-width="0.6"/><rect x="284.5" y="241.7" width="1.8" height="2.2" fill="none" stroke="#58b0ea" stroke-width="0.6"/><rect x="287.3" y="241.7" width="1.8" height="2.2" fill="none" stroke="#58b0ea" stroke-width="0.6"/><rect x="290.5" y="233.7" width="2.2" height="1.8" fill="none" stroke="#58b0ea" stroke-width="0.6"/><rect x="290.5" y="236.5" width="2.2" height="1.8" fill="none" stroke="#58b0ea" stroke-width="0.6"/><rect x="263.5" y="238.0" width="6.0" height="6.0" fill="none" stroke="#3c8a70" stroke-width="0.8"/><rect x="263.5" y="246.0" width="6.0" height="6.0" fill="none" stroke="#3c8a70" stroke-width="0.8"/><rect x="263.5" y="254.0" width="6.0" height="6.0" fill="none" stroke="#3c8a70" stroke-width="0.8"/><rect x="263.5" y="262.0" width="6.0" height="6.0" fill="none" stroke="#3c8a70" stroke-width="0.8"/><rect x="263.5" y="270.0" width="6.0" height="6.0" fill="none" stroke="#3c8a70" stroke-width="0.8"/><rect x="338.3" y="228.3" width="1.8" height="2.2" fill="none" stroke="#58b0ea" stroke-width="0.6"/><rect x="341.1" y="228.3" width="1.8" height="2.2" fill="none" stroke="#58b0ea" stroke-width="0.6"/><rect x="332.8" y="239.0" width="2.5" height="1.2" fill="#58b0ea"/><rect x="337.8" y="227.6" width="2.2" height="1.8" fill="none" stroke="#2d68cc" stroke-width="0.6"/><rect x="337.8" y="230.4" width="2.2" height="1.8" fill="none" stroke="#2d68cc" stroke-width="0.6"/><rect x="334.7" y="227.5" width="2.5" height="3.0" fill="none" stroke="#3c86d8" stroke-width="0.7"/><rect x="341.7" y="239.0" width="1.8" height="2.2" fill="none" stroke="#3c86d8" stroke-width="0.6"/><rect x="344.5" y="239.0" width="1.8" height="2.2" fill="none" stroke="#3c86d8" stroke-width="0.6"/><rect x="344.0" y="236.4" width="2.5" height="1.2" fill="#58b0ea"/><rect x="332.7" y="225.1" width="1.8" height="2.2" fill="none" stroke="#58b0ea" stroke-width="0.6"/><rect x="335.5" y="225.1" width="1.8" height="2.2" fill="none" stroke="#58b0ea" stroke-width="0.6"/><rect x="343.1" y="228.5" width="1.8" height="2.2" fill="none" stroke="#58b0ea" stroke-width="0.6"/><rect x="345.9" y="228.5" width="1.8" height="2.2" fill="none" stroke="#58b0ea" stroke-width="0.6"/><line x1="16" y1="170.5" x2="392" y2="170.5" stroke="#b4d08a" stroke-width="1"/><line x1="275.5" y1="78" x2="275.5" y2="294.7" stroke="#b0cc88" stroke-width="1"/><rect x="16" y="78" width="376" height="0.9" fill="#d8d0b0"/></svg>
<div class="a" style="left:392px;top:78px;width:10px;height:226px;background:linear-gradient(90deg,#ececec,#f8f8f8 40%,#f4f4f4)"></div>
<div class="a" style="left:402px;top:77px;width:1.8px;height:228px;background:#a8a8a8"></div>
<div class="a" style="left:393.7px;top:137px;width:7.5px;height:46px;background:linear-gradient(90deg,#f4f4f4,#dcdcdc);border:1px solid #c4c4c4;border-radius:1px"></div>
<div class="a" style="left:16px;top:294.7px;width:376px;height:9.3px;background:#f0f0f0"></div>
<div class="a" style="left:63px;top:295.7px;width:301px;height:8px;background:linear-gradient(#f6f6f6,#d8d8d8);border:1px solid #c4c4c4;border-radius:1px"></div>
<div class="a" style="left:211px;top:297.5px;width:5px;height:4px;background:repeating-linear-gradient(90deg,#8a8a8a 0 1px,transparent 1px 2px)"></div>
<div class="a" style="left:395px;top:157.5px;width:4px;height:5px;background:repeating-linear-gradient(#8a8a8a 0 1px,transparent 1px 2px)"></div>
<div class="tril" style="left:19px;top:297.5px"></div>
<div class="trir" style="left:386px;top:297.5px"></div>
<div class="triu" style="left:395px;top:83px"></div>
<div class="tri" style="left:395px;top:288px"></div>
<div class="a t" style="left:17px;top:309.5px"><span class="c">明细</span></div>
<div class="a" style="left:15px;top:320px;width:387px;height:94px;border:1px solid #7a7a7a;border-bottom-color:#a0a0a0;background:#fff"></div>
<div class="a" style="left:16px;top:321px;width:374.5px;height:12px;background:linear-gradient(#ffffff,#f4f4f4 50%,#e8e8e8);border-bottom:1px solid #c8c8c8"></div>
<div class="a" style="left:16px;top:333px;width:23px;height:80px;background:linear-gradient(90deg,#fbfbfb,#eeeeee)"></div>
<div class="a" style="left:39px;top:333.50px;width:351.5px;height:13.27px;background:#f9f4cf;border-bottom:1px solid #d8d8d8"></div>
<div class="a" style="left:16px;top:345.77px;width:23px;height:1px;background:#dedede"></div>
<div class="a m" style="left:40px;top:336.80px;font-size:7.8px;line-height:7px;color:#202020;transform:scaleX(0.92);transform-origin:0 0">2186</div>
<div class="a m" style="left:98.2px;top:336.80px;font-size:7.8px;line-height:7px;color:#202020;transform:scaleX(0.92);transform-origin:0 0">2186</div>
<div class="a m" style="left:157.3px;top:336.80px;font-size:7.8px;line-height:7px;color:#202020;transform:scaleX(0.92);transform-origin:0 0">2210</div>
<div class="a m" style="left:216.3px;top:336.80px;font-size:7.8px;line-height:7px;color:#202020;transform:scaleX(0.92);transform-origin:0 0">110.8146</div>
<div class="a m" style="left:274.5px;top:336.80px;font-size:7.8px;line-height:7px;color:#202020;transform:scaleX(0.92);transform-origin:0 0">382465.8125</div>
<div class="a m" style="left:332.5px;top:336.80px;font-size:7.8px;line-height:7px;color:#202020;transform:scaleX(0.92);transform-origin:0 0">42382800</div>
<div class="a" style="left:39px;top:346.77px;width:351.5px;height:13.27px;background:#ffffff;border-bottom:1px solid #d8d8d8"></div>
<div class="a" style="left:16px;top:359.04px;width:23px;height:1px;background:#dedede"></div>
<div class="a m" style="left:40px;top:350.07px;font-size:7.8px;line-height:7px;color:#202020;transform:scaleX(0.92);transform-origin:0 0">2187</div>
<div class="a m" style="left:98.2px;top:350.07px;font-size:7.8px;line-height:7px;color:#202020;transform:scaleX(0.92);transform-origin:0 0">2187</div>
<div class="a m" style="left:157.3px;top:350.07px;font-size:7.8px;line-height:7px;color:#202020;transform:scaleX(0.92);transform-origin:0 0">2211</div>
<div class="a m" style="left:216.3px;top:350.07px;font-size:7.8px;line-height:7px;color:#202020;transform:scaleX(0.92);transform-origin:0 0">110.7675</div>
<div class="a m" style="left:274.5px;top:350.07px;font-size:7.8px;line-height:7px;color:#202020;transform:scaleX(0.92);transform-origin:0 0">397102.8125</div>
<div class="a m" style="left:332.5px;top:350.07px;font-size:7.8px;line-height:7px;color:#202020;transform:scaleX(0.92);transform-origin:0 0">43986092</div>
<div class="a" style="left:39px;top:360.04px;width:351.5px;height:13.27px;background:#f9f4cf;border-bottom:1px solid #d8d8d8"></div>
<div class="a" style="left:16px;top:372.31px;width:23px;height:1px;background:#dedede"></div>
<div class="a m" style="left:40px;top:363.34px;font-size:7.8px;line-height:7px;color:#202020;transform:scaleX(0.92);transform-origin:0 0">2188</div>
<div class="a m" style="left:98.2px;top:363.34px;font-size:7.8px;line-height:7px;color:#202020;transform:scaleX(0.92);transform-origin:0 0">2188</div>
<div class="a m" style="left:157.3px;top:363.34px;font-size:7.8px;line-height:7px;color:#202020;transform:scaleX(0.92);transform-origin:0 0">2212</div>
<div class="a m" style="left:216.3px;top:363.34px;font-size:7.8px;line-height:7px;color:#202020;transform:scaleX(0.92);transform-origin:0 0">113.2531</div>
<div class="a m" style="left:274.5px;top:363.34px;font-size:7.8px;line-height:7px;color:#202020;transform:scaleX(0.92);transform-origin:0 0">379282</div>
<div class="a m" style="left:332.5px;top:363.34px;font-size:7.8px;line-height:7px;color:#202020;transform:scaleX(0.92);transform-origin:0 0">42954880</div>
<div class="a" style="left:39px;top:373.31px;width:351.5px;height:13.27px;background:#ffffff;border-bottom:1px solid #d8d8d8"></div>
<div class="a" style="left:16px;top:385.58px;width:23px;height:1px;background:#dedede"></div>
<div class="a m" style="left:40px;top:376.61px;font-size:7.8px;line-height:7px;color:#202020;transform:scaleX(0.92);transform-origin:0 0">2189</div>
<div class="a m" style="left:98.2px;top:376.61px;font-size:7.8px;line-height:7px;color:#202020;transform:scaleX(0.92);transform-origin:0 0">2189</div>
<div class="a m" style="left:157.3px;top:376.61px;font-size:7.8px;line-height:7px;color:#202020;transform:scaleX(0.92);transform-origin:0 0">2213</div>
<div class="a m" style="left:216.3px;top:376.61px;font-size:7.8px;line-height:7px;color:#202020;transform:scaleX(0.92);transform-origin:0 0">97.9231</div>
<div class="a m" style="left:274.5px;top:376.61px;font-size:7.8px;line-height:7px;color:#202020;transform:scaleX(0.92);transform-origin:0 0">366745.0312</div>
<div class="a m" style="left:332.5px;top:376.61px;font-size:7.8px;line-height:7px;color:#202020;transform:scaleX(0.92);transform-origin:0 0">35912916</div>
<div class="a" style="left:39px;top:386.58px;width:351.5px;height:13.27px;background:#f9f4cf;border-bottom:1px solid #d8d8d8"></div>
<div class="a" style="left:16px;top:398.85px;width:23px;height:1px;background:#dedede"></div>
<div class="a m" style="left:40px;top:389.88px;font-size:7.8px;line-height:7px;color:#202020;transform:scaleX(0.92);transform-origin:0 0">2190</div>
<div class="a m" style="left:98.2px;top:389.88px;font-size:7.8px;line-height:7px;color:#202020;transform:scaleX(0.92);transform-origin:0 0">2190</div>
<div class="a m" style="left:157.3px;top:389.88px;font-size:7.8px;line-height:7px;color:#202020;transform:scaleX(0.92);transform-origin:0 0">2214</div>
<div class="a m" style="left:216.3px;top:389.88px;font-size:7.8px;line-height:7px;color:#202020;transform:scaleX(0.92);transform-origin:0 0">112.67</div>
<div class="a m" style="left:274.5px;top:389.88px;font-size:7.8px;line-height:7px;color:#202020;transform:scaleX(0.92);transform-origin:0 0">380823.6875</div>
<div class="a m" style="left:332.5px;top:389.88px;font-size:7.8px;line-height:7px;color:#202020;transform:scaleX(0.92);transform-origin:0 0">42873592</div>
<div class="a" style="left:39px;top:399.85px;width:351.5px;height:13.27px;background:#ffffff;border-bottom:1px solid #d8d8d8"></div>
<div class="a" style="left:16px;top:412.12px;width:23px;height:1px;background:#dedede"></div>
<div class="a m" style="left:40px;top:403.15px;font-size:7.8px;line-height:7px;color:#202020;transform:scaleX(0.92);transform-origin:0 0">2191</div>
<div class="a m" style="left:98.2px;top:403.15px;font-size:7.8px;line-height:7px;color:#202020;transform:scaleX(0.92);transform-origin:0 0">2191</div>
<div class="a m" style="left:157.3px;top:403.15px;font-size:7.8px;line-height:7px;color:#202020;transform:scaleX(0.92);transform-origin:0 0">2215</div>
<div class="a m" style="left:216.3px;top:403.15px;font-size:7.8px;line-height:7px;color:#202020;transform:scaleX(0.92);transform-origin:0 0">99.0945</div>
<div class="a m" style="left:274.5px;top:403.15px;font-size:7.8px;line-height:7px;color:#202020;transform:scaleX(0.92);transform-origin:0 0">365721.1875</div>
<div class="a m" style="left:332.5px;top:403.15px;font-size:7.8px;line-height:7px;color:#202020;transform:scaleX(0.92);transform-origin:0 0">36240948</div>
<div class="a m" style="left:42.5px;top:323.8px;font-size:7.6px;line-height:7px;font-weight:bold;color:#303030;transform:scaleX(0.9);transform-origin:0 0">SerNo</div>
<div class="a m" style="left:100.7px;top:323.8px;font-size:7.6px;line-height:7px;font-weight:bold;color:#303030;transform:scaleX(0.9);transform-origin:0 0">PadID</div>
<div class="a m" style="left:159.8px;top:323.8px;font-size:7.6px;line-height:7px;font-weight:bold;color:#303030;transform:scaleX(0.9);transform-origin:0 0">PadIndex</div>
<div class="a m" style="left:218.8px;top:323.8px;font-size:7.6px;line-height:7px;font-weight:bold;color:#303030;transform:scaleX(0.9);transform-origin:0 0">ABSHeight</div>
<div class="a m" style="left:277.0px;top:323.8px;font-size:7.6px;line-height:7px;font-weight:bold;color:#303030;transform:scaleX(0.9);transform-origin:0 0">ABSArea</div>
<div class="a m" style="left:335.0px;top:323.8px;font-size:7.6px;line-height:7px;font-weight:bold;color:#303030;transform:scaleX(0.9);transform-origin:0 0">ABSVolume</div>
<div class="a" style="left:39px;top:321px;width:1px;height:92.5px;background:#a8a8a8"></div>
<div class="a" style="left:97.2px;top:321px;width:1px;height:92.5px;background:#a8a8a8"></div>
<div class="a" style="left:156.3px;top:321px;width:1px;height:92.5px;background:#a8a8a8"></div>
<div class="a" style="left:215.3px;top:321px;width:1px;height:92.5px;background:#a8a8a8"></div>
<div class="a" style="left:273.5px;top:321px;width:1px;height:92.5px;background:#a8a8a8"></div>
<div class="a" style="left:331.5px;top:321px;width:1px;height:92.5px;background:#a8a8a8"></div>
<div class="a" style="left:390.5px;top:321px;width:1px;height:92.5px;background:#a8a8a8"></div>
<div class="a" style="left:391px;top:321px;width:10px;height:92px;background:#f0f0f0;border-left:1px solid #e4e4e4"></div>
<div class="a" style="left:392.6px;top:368px;width:7.5px;height:9px;background:linear-gradient(90deg,#f8f8f8,#dcdcdc);border:1px solid #b8b8b8"></div>
<div class="triu" style="left:394px;top:325px"></div>
<div class="a t" style="left:413px;top:66.5px"><span class="c">结果</span></div>
<div class="a" style="left:412px;top:76.5px;width:58px;height:79px;background:#fff;border:1px solid #a8a8a8"></div>
<div class="a" style="left:413px;top:77px;width:28px;height:7px;background:#e82a1c"></div>
<div class="a" style="left:413px;top:84px;width:28px;height:7px;background:#f06c1c"></div>
<div class="a" style="left:413px;top:91px;width:28px;height:7px;background:#f6b41e"></div>
<div class="a" style="left:413px;top:98px;width:28px;height:7px;background:#b6d232"></div>
<div class="a" style="left:413px;top:105px;width:28px;height:7px;background:#84c234"></div>
<div class="a" style="left:413px;top:112px;width:28px;height:7px;background:#62c0dc"></div>
<div class="a" style="left:413px;top:119px;width:28px;height:7px;background:#2ea2e6"></div>
<div class="a" style="left:413px;top:126px;width:28px;height:7px;background:#2262c2"></div>
<div class="a" style="left:413px;top:133px;width:28px;height:7px;background:#2058b8"></div>
<div class="a" style="left:413px;top:140px;width:28px;height:7px;background:#1c4aa8"></div>
<div class="a" style="left:413px;top:147px;width:28px;height:7px;background:#1a3a92"></div>
<div class="a" style="left:442px;top:79.4px;font-size:8.4px;line-height:8px;color:#2a3a5a;letter-spacing:-0.35px">300.000</div>
<div class="a" style="left:442px;top:86.4px;font-size:8.4px;line-height:8px;color:#2a3a5a;letter-spacing:-0.35px">270.000</div>
<div class="a" style="left:442px;top:93.4px;font-size:8.4px;line-height:8px;color:#2a3a5a;letter-spacing:-0.35px">240.000</div>
<div class="a" style="left:442px;top:100.4px;font-size:8.4px;line-height:8px;color:#2a3a5a;letter-spacing:-0.35px">210.000</div>
<div class="a" style="left:442px;top:107.4px;font-size:8.4px;line-height:8px;color:#2a3a5a;letter-spacing:-0.35px">180.000</div>
<div class="a" style="left:442px;top:114.4px;font-size:8.4px;line-height:8px;color:#2a3a5a;letter-spacing:-0.35px">150.000</div>
<div class="a" style="left:442px;top:121.4px;font-size:8.4px;line-height:8px;color:#2a3a5a;letter-spacing:-0.35px">120.000</div>
<div class="a" style="left:442px;top:128.4px;font-size:8.4px;line-height:8px;color:#2a3a5a;letter-spacing:-0.35px">90.000</div>
<div class="a" style="left:442px;top:135.4px;font-size:8.4px;line-height:8px;color:#2a3a5a;letter-spacing:-0.35px">60.000</div>
<div class="a" style="left:442px;top:142.4px;font-size:8.4px;line-height:8px;color:#2a3a5a;letter-spacing:-0.35px">30.000</div>
<div class="a" style="left:442px;top:149.4px;font-size:8.4px;line-height:8px;color:#2a3a5a;letter-spacing:-0.35px">0.000</div>
<div class="rb" style="left:481.2px;top:80.5px"></div>
<div class="a t" style="left:491.5px;top:80.0px"><span class="c">面积</span></div>
<div class="rb" style="left:481.2px;top:92.8px"></div>
<div class="a t" style="left:491.5px;top:92.3px"><span class="c">体积</span></div>
<div class="rb" style="left:481.2px;top:105.2px"></div>
<div class="a" style="left:483.2px;top:107.2px;width:3px;height:3px;border-radius:50%;background:#1a5aa0"></div>
<div class="a t" style="left:491.5px;top:104.7px"><span class="c">高度</span></div>
<div class="rb" style="left:481.2px;top:117.5px"></div>
<div class="a t" style="left:491.5px;top:117.0px">X<span class="c">偏移</span></div>
<div class="rb" style="left:481.2px;top:129.9px"></div>
<div class="a t" style="left:491.5px;top:129.4px">Y<span class="c">偏移</span></div>
<div class="rb" style="left:481.2px;top:142.2px"></div>
<div class="a t" style="left:491.5px;top:141.8px"><span class="c">锡型</span></div>
<div class="cb" style="left:413px;top:164px"></div>
<div class="inp" style="left:429.5px;top:162px;width:37px;height:12px"></div>
<div class="a t" style="left:432px;top:164px;color:#909090">0</div>
<div class="a t" style="left:471px;top:163.5px;color:#404040">-</div>
<div class="inp" style="left:479px;top:162px;width:38px;height:12px"></div>
<div class="a t" style="left:481.5px;top:164px;color:#909090">0</div>
<div class="cb" style="left:413px;top:183px;background:#fafafa"></div>
<div class="inp" style="left:429.5px;top:181px;width:87px;height:12px;background:#f4f4f4"></div>
<div class="a t" style="left:431.5px;top:183px;color:#707070"><span class="c">焊盘分组</span></div>
<div class="tri" style="left:509px;top:186px;border-top-color:#909090;border-top-width:2px"></div>
<div class="inp" style="left:429.5px;top:196px;width:87px;height:12px;background:#f4f4f4"></div>
<div class="tri" style="left:509px;top:201px;border-top-color:#909090;border-top-width:2px"></div>
<div class="a" style="left:480px;top:211px;width:37px;height:13px;border:1px solid #8a8a8a;border-radius:2px;background:linear-gradient(#f8f8f8,#e6e6e6 50%,#d8d8d8)"></div>
<div class="a t" style="left:491px;top:213.5px"><span class="c">查找</span></div>
<div class="a" style="left:413px;top:229.5px;width:104px;height:2px;background:#c4c4c4;border-bottom:1px solid #fff"></div>
<div class="sw" style="left:413px;top:234.8px;background:#3a6cc4"></div>
<div class="rb" style="left:431.5px;top:234.5px"></div>
<div class="a t" style="left:442px;top:234.0px"><span class="c">良品</span></div>
<div class="a m" style="left:466px;width:50.5px;text-align:right;top:234.7px;font-size:7.5px;line-height:7px;color:#282828">6010</div>
<div class="sw" style="left:413px;top:247.2px;background:#7a2a8c"></div>
<div class="rb" style="left:431.5px;top:246.9px"></div>
<div class="a t" style="left:442px;top:246.4px"><span class="c">通过</span></div>
<div class="a m" style="left:466px;width:50.5px;text-align:right;top:247.1px;font-size:7.5px;line-height:7px;color:#282828">30</div>
<div class="sw" style="left:413px;top:259.6px;background:#7a8ca0"></div>
<div class="rb" style="left:431.5px;top:259.3px"></div>
<div class="a t" style="left:442px;top:258.8px"><span class="c">未检测</span></div>
<div class="a m" style="left:466px;width:50.5px;text-align:right;top:259.5px;font-size:7.5px;line-height:7px;color:#282828">0</div>
<div class="sw" style="left:413px;top:272.0px;background:#d8702a"></div>
<div class="rb" style="left:431.5px;top:271.7px"></div>
<div class="a t" style="left:442px;top:271.2px"><span class="c">缺陷</span></div>
<div class="a m" style="left:466px;width:50.5px;text-align:right;top:271.9px;font-size:7.5px;line-height:7px;color:#282828">542</div>
<div class="a" style="left:413px;top:286.5px;width:104px;height:2px;background:#c4c4c4;border-bottom:1px solid #fff"></div>
<div class="sw" style="left:413px;top:291.0px;background:#e81c1e"></div>
<div class="rb" style="left:431.5px;top:290.7px"></div>
<div class="a t" style="left:442px;top:290.2px"><span class="c">无锡</span></div>
<div class="a m" style="left:466px;width:50.5px;text-align:right;top:290.9px;font-size:7.5px;line-height:7px;color:#282828">378</div>
<div class="sw" style="left:413px;top:303.4px;background:#2242a8"></div>
<div class="rb" style="left:431.5px;top:303.1px"></div>
<div class="a t" style="left:442px;top:302.6px"><span class="c">少锡</span></div>
<div class="a m" style="left:466px;width:50.5px;text-align:right;top:303.3px;font-size:7.5px;line-height:7px;color:#282828">31</div>
<div class="sw" style="left:413px;top:315.9px;background:#dcd822"></div>
<div class="rb" style="left:431.5px;top:315.6px"></div>
<div class="a t" style="left:442px;top:315.1px"><span class="c">桥连</span></div>
<div class="a m" style="left:466px;width:50.5px;text-align:right;top:315.8px;font-size:7.5px;line-height:7px;color:#282828">1</div>
<div class="sw" style="left:413px;top:328.3px;background:#b050b0"></div>
<div class="rb" style="left:431.5px;top:328.0px"></div>
<div class="a t" style="left:442px;top:327.5px"><span class="c">高度偏高</span></div>
<div class="a m" style="left:466px;width:50.5px;text-align:right;top:328.2px;font-size:7.5px;line-height:7px;color:#282828">1</div>
<div class="sw" style="left:413px;top:340.8px;background:#62c2d8"></div>
<div class="rb" style="left:431.5px;top:340.5px"></div>
<div class="a t" style="left:442px;top:340.0px"><span class="c">高度偏低</span></div>
<div class="a m" style="left:466px;width:50.5px;text-align:right;top:340.7px;font-size:7.5px;line-height:7px;color:#282828">91</div>
<div class="sw" style="left:413px;top:353.2px;background:#808080"></div>
<div class="rb" style="left:431.5px;top:352.9px"></div>
<div class="a t" style="left:442px;top:352.4px"><span class="c">面积偏多</span></div>
<div class="a m" style="left:466px;width:50.5px;text-align:right;top:353.1px;font-size:7.5px;line-height:7px;color:#282828">0</div>
<div class="sw" style="left:413px;top:365.7px;background:#1c8080"></div>
<div class="rb" style="left:431.5px;top:365.4px"></div>
<div class="a t" style="left:442px;top:364.9px"><span class="c">面积偏少</span></div>
<div class="a m" style="left:466px;width:50.5px;text-align:right;top:365.6px;font-size:7.5px;line-height:7px;color:#282828">0</div>
<div class="sw" style="left:413px;top:378.1px;background:#802088"></div>
<div class="rb" style="left:431.5px;top:377.8px"></div>
<div class="a t" style="left:442px;top:377.3px">X<span class="c">偏移</span></div>
<div class="a m" style="left:466px;width:50.5px;text-align:right;top:378.0px;font-size:7.5px;line-height:7px;color:#282828">0</div>
<div class="sw" style="left:413px;top:390.6px;background:#848424"></div>
<div class="rb" style="left:431.5px;top:390.3px"></div>
<div class="a t" style="left:442px;top:389.8px">Y<span class="c">偏移</span></div>
<div class="a m" style="left:466px;width:50.5px;text-align:right;top:390.5px;font-size:7.5px;line-height:7px;color:#282828">0</div>
<div class="sw" style="left:413px;top:403.1px;background:#f08080"></div>
<div class="rb" style="left:431.5px;top:402.8px"></div>
<div class="a t" style="left:442px;top:402.2px"><span class="c">短路</span></div>
<div class="a m" style="left:466px;width:50.5px;text-align:right;top:402.9px;font-size:7.5px;line-height:7px;color:#282828">40</div>
<div class="a" style="left:528.5px;top:130px;width:1px;height:70px;background:#fafafa"></div>
<div class="a t" style="left:534px;top:66.5px"><span class="c">分组</span></div>
<div class="a" style="left:550px;top:71.5px;width:160px;height:1px;background:#dcdcdc"></div>
<div class="combo" style="left:537px;top:77.5px;width:75px;height:11px"></div>
<div class="a t" style="left:539px;top:79.5px"><span class="c">分组一</span></div>
<div class="tri" style="left:604px;top:82px;border-top-color:#101010"></div>
<div class="combo" style="left:537px;top:92.8px;width:75px;height:11.2px"></div>
<div class="a t" style="left:539px;top:95px"><span class="c">全部焊盘</span></div>
<div class="tri" style="left:604px;top:97.5px;border-top-color:#101010"></div>
<div class="cb" style="left:537px;top:109.5px;background:#f8f8f8;border-color:#a8a8a8"></div>
<div class="a t" style="left:547px;top:109.5px"><span class="c">焊盘图像</span></div>
<div class="a" style="left:675.5px;top:100.5px;width:22px;height:15px;border:1px solid #c0c0c0;background:linear-gradient(#fbfbfb,#f2f2f2)"></div>
<svg class="a" style="left:679px;top:102px" width="16" height="13"><path d="M1 6.3 L8 0.8 L8 4.3 L14.5 4.3 L14.5 8.5 L8 8.5 L8 12 Z" fill="#8a8a8a"/></svg>
<div class="a" style="left:709px;top:107px;width:1.2px;height:1.2px;background:#555"></div><div class="a" style="left:709px;top:110px;width:1.2px;height:1.2px;background:#555"></div>
<div class="a m" style="left:534px;top:126.5px;font-size:7px;line-height:7px;font-weight:bold">PCB</div><div class="a t" style="left:549px;top:126px"><span class="c">信息</span></div>
<div class="a" style="left:563px;top:130px;width:147px;height:1px;background:#dcdcdc"></div>
<div class="a t" style="left:520px;width:68.5px;text-align:right;top:136.0px"><span class="m">PCB</span> <span class="c">编号</span></div>
<div class="a m" style="left:595px;top:136.5px;font-size:7px;line-height:7px;color:#3a82d2;letter-spacing:0px">58</div>
<div class="a t" style="left:520px;width:68.5px;text-align:right;top:146.4px"><span class="c">起始时间</span></div>
<div class="a m" style="left:595px;top:146.9px;font-size:7px;line-height:7px;color:#3a82d2;letter-spacing:0px">2014-02-25 00:58:46</div>
<div class="a t" style="left:520px;width:68.5px;text-align:right;top:156.8px"><span class="c">操作者</span></div>
<div class="a t" style="left:520px;width:68.5px;text-align:right;top:167.2px"><span class="c">查找焊盘数</span></div>
<div class="a t" style="left:520px;width:68.5px;text-align:right;top:177.6px"><span class="c">程式版本</span></div>
<div class="a m" style="left:595px;top:178.1px;font-size:7px;line-height:7px;color:#3a82d2;letter-spacing:0px">20140224130940000000200</div>
<div class="a t" style="left:520px;width:68.5px;text-align:right;top:188.0px"><span class="c">数据文件路径</span></div>
<div class="a m" style="left:595px;top:188.5px;font-size:7px;line-height:7px;color:#3a82d2;letter-spacing:0.13px">D:\ETSPI\SPCData\2014\2\1006.svl</div>
<div class="a m" style="left:623.5px;top:167.5px;font-size:7px;line-height:7px;color:#3a82d2">0</div>
<div class="a" style="left:690px;top:130px;width:20.6px;height:50px;overflow:hidden"><div class="a t" style="left:10.5px;top:6px"><span class="c">检</span></div><div class="a t" style="left:17.5px;top:6px">!</div><div class="a t" style="left:10.5px;top:16.5px"><span class="c">结</span></div><div class="a t" style="left:17.5px;top:16.5px">!</div><div class="a t" style="left:3.5px;top:37px"><span class="c">检测</span></div><div class="a t" style="left:17.5px;top:37px">!</div></div>
<div class="a" style="left:531px;top:198px;width:180px;height:1px;background:#fafafa;border-top:1px solid #e2e2e2"></div>
<div class="a t" style="left:533px;top:202px"><span class="c">柱状图</span></div>
<div class="a" style="left:528px;top:211.7px;width:182.6px;height:152.3px;background:#fff"></div>
<div class="a" style="left:528px;top:211.7px;width:182.6px;height:20px;overflow:hidden"><div class="a" style="left:68.5px;top:6.5px;font-size:6.5px;line-height:8px;--ls:-1.1px"><span class="c">单位</span></div><div class="a" style="left:79.5px;top:6.6px;font-size:8px;line-height:8px">:<span style="color:#3a3aa0">um</span></div><div class="a" style="left:98px;top:6.5px;font-size:7px;line-height:8px;--ls:1.5px"><span class="c">最小值</span></div><div class="a" style="left:124px;top:6.6px;font-size:8px;line-height:8px">:<span style="color:#2a2a6a">0.000</span></div><div class="a" style="left:144px;top:6.5px;font-size:7px;line-height:8px;--ls:1.5px"><span class="c">平均值</span></div><div class="a" style="left:169.5px;top:6.6px;font-size:8px;line-height:8px">:98.3</div></div>
<svg class="a" style="left:528px;top:211.7px" width="183" height="153" viewBox="528 211.7 183 153"><line x1="562" y1="342.5" x2="710.5" y2="342.5" stroke="#303030" stroke-width="1"/><text x="561" y="344.6" text-anchor="end" font-family="Liberation Sans" font-size="7.6" fill="#2a2a3a">0</text><line x1="562" y1="332.5" x2="710.5" y2="332.5" stroke="#303030" stroke-width="1"/><text x="561" y="335.0" text-anchor="end" font-family="Liberation Sans" font-size="7.6" fill="#2a2a3a">90</text><line x1="562" y1="322.5" x2="710.5" y2="322.5" stroke="#303030" stroke-width="1"/><text x="561" y="325.4" text-anchor="end" font-family="Liberation Sans" font-size="7.6" fill="#2a2a3a">180</text><line x1="562" y1="313.5" x2="710.5" y2="313.5" stroke="#303030" stroke-width="1"/><text x="561" y="315.8" text-anchor="end" font-family="Liberation Sans" font-size="7.6" fill="#2a2a3a">270</text><line x1="562" y1="303.5" x2="710.5" y2="303.5" stroke="#303030" stroke-width="1"/><text x="561" y="306.2" text-anchor="end" font-family="Liberation Sans" font-size="7.6" fill="#2a2a3a">360</text><line x1="562" y1="294.5" x2="710.5" y2="294.5" stroke="#303030" stroke-width="1"/><text x="561" y="296.6" text-anchor="end" font-family="Liberation Sans" font-size="7.6" fill="#2a2a3a">450</text><line x1="562" y1="284.5" x2="710.5" y2="284.5" stroke="#303030" stroke-width="1"/><text x="561" y="287.1" text-anchor="end" font-family="Liberation Sans" font-size="7.6" fill="#2a2a3a">540</text><line x1="562" y1="274.5" x2="710.5" y2="274.5" stroke="#303030" stroke-width="1"/><text x="561" y="277.5" text-anchor="end" font-family="Liberation Sans" font-size="7.6" fill="#2a2a3a">630</text><line x1="562" y1="265.5" x2="710.5" y2="265.5" stroke="#303030" stroke-width="1"/><text x="561" y="267.9" text-anchor="end" font-family="Liberation Sans" font-size="7.6" fill="#2a2a3a">720</text><line x1="562" y1="255.5" x2="710.5" y2="255.5" stroke="#303030" stroke-width="1"/><text x="561" y="258.3" text-anchor="end" font-family="Liberation Sans" font-size="7.6" fill="#2a2a3a">810</text><line x1="562" y1="246.5" x2="710.5" y2="246.5" stroke="#303030" stroke-width="1"/><text x="561" y="248.7" text-anchor="end" font-family="Liberation Sans" font-size="7.6" fill="#2a2a3a">900</text><line x1="562" y1="236.5" x2="710.5" y2="236.5" stroke="#303030" stroke-width="1"/><text x="561" y="239.1" text-anchor="end" font-family="Liberation Sans" font-size="7.6" fill="#2a2a3a">990</text><line x1="565.5" y1="236.5" x2="565.5" y2="344" stroke="#303030" stroke-width="1"/><line x1="616.5" y1="236.5" x2="616.5" y2="344" stroke="#303030" stroke-width="1"/><line x1="667.2" y1="236.5" x2="667.2" y2="344" stroke="#303030" stroke-width="1"/><text x="565.5" y="354.5" text-anchor="middle" font-family="Liberation Sans" font-size="7.6" fill="#2a2a3a">0</text><text x="616.3" y="354.5" text-anchor="middle" font-family="Liberation Sans" font-size="7.6" fill="#2a2a3a">60</text><text x="667.1" y="354.5" text-anchor="middle" font-family="Liberation Sans" font-size="7.6" fill="#2a2a3a">120</text><rect x="565.00" y="304.70" width="1.9" height="37.30" fill="#3a78cc"/><rect x="605.76" y="340.72" width="1.9" height="1.28" fill="#3a78cc"/><rect x="608.30" y="340.93" width="1.9" height="1.07" fill="#3a78cc"/><rect x="610.84" y="340.93" width="1.9" height="1.07" fill="#3a78cc"/><rect x="613.38" y="340.72" width="1.9" height="1.28" fill="#3a78cc"/><rect x="615.92" y="341.15" width="1.9" height="0.85" fill="#3a78cc"/><rect x="618.46" y="340.29" width="1.9" height="1.71" fill="#3a78cc"/><rect x="621.00" y="340.72" width="1.9" height="1.28" fill="#3a78cc"/><rect x="623.54" y="340.93" width="1.9" height="1.07" fill="#3a78cc"/><rect x="626.08" y="340.72" width="1.9" height="1.28" fill="#3a78cc"/><rect x="628.62" y="340.93" width="1.9" height="1.07" fill="#3a78cc"/><rect x="631.17" y="340.72" width="1.9" height="1.28" fill="#3a78cc"/><rect x="633.71" y="340.72" width="1.9" height="1.28" fill="#3a78cc"/><rect x="636.25" y="340.51" width="1.9" height="1.49" fill="#3a78cc"/><rect x="638.79" y="336.99" width="1.9" height="5.01" fill="#3a78cc"/><rect x="641.33" y="324.63" width="1.9" height="17.37" fill="#3a78cc"/><rect x="643.87" y="294.26" width="1.9" height="47.74" fill="#3a78cc"/><rect x="646.41" y="263.99" width="1.9" height="78.01" fill="#3a78cc"/><rect x="648.95" y="247.58" width="1.9" height="94.42" fill="#3a78cc"/><rect x="651.49" y="254.62" width="1.9" height="87.38" fill="#3a78cc"/><rect x="654.03" y="269.00" width="1.9" height="73.00" fill="#3a78cc"/><rect x="656.58" y="275.40" width="1.9" height="66.60" fill="#3a78cc"/><rect x="659.12" y="282.96" width="1.9" height="59.04" fill="#3a78cc"/><rect x="661.66" y="290.53" width="1.9" height="51.47" fill="#3a78cc"/><rect x="664.20" y="307.05" width="1.9" height="34.95" fill="#3a78cc"/><rect x="666.74" y="324.63" width="1.9" height="17.37" fill="#3a78cc"/><rect x="669.28" y="331.02" width="1.9" height="10.98" fill="#3a78cc"/><rect x="671.82" y="336.99" width="1.9" height="5.01" fill="#3a78cc"/><rect x="674.36" y="341.15" width="1.9" height="0.85" fill="#3a78cc"/><rect x="676.90" y="340.72" width="1.9" height="1.28" fill="#3a78cc"/><rect x="679.45" y="340.72" width="1.9" height="1.28" fill="#3a78cc"/><rect x="681.99" y="341.36" width="1.9" height="0.64" fill="#3a78cc"/><rect x="684.53" y="341.36" width="1.9" height="0.64" fill="#3a78cc"/><rect x="687.07" y="341.15" width="1.9" height="0.85" fill="#3a78cc"/><rect x="689.61" y="341.36" width="1.9" height="0.64" fill="#3a78cc"/><rect x="692.15" y="340.93" width="1.9" height="1.07" fill="#3a78cc"/><rect x="694.69" y="340.93" width="1.9" height="1.07" fill="#3a78cc"/><rect x="697.23" y="340.72" width="1.9" height="1.28" fill="#3a78cc"/><rect x="699.77" y="340.72" width="1.9" height="1.28" fill="#3a78cc"/><rect x="702.31" y="341.15" width="1.9" height="0.85" fill="#3a78cc"/><rect x="704.86" y="340.93" width="1.9" height="1.07" fill="#3a78cc"/><rect x="707.40" y="341.36" width="1.9" height="0.64" fill="#3a78cc"/></svg>
<div class="a t" style="left:534px;top:367.5px"><span class="c">焊盘信息</span></div>
<div class="a" style="left:563px;top:372px;width:147px;height:1px;background:#dcdcdc"></div>
<div class="a m" style="left:548px;top:379.5px;font-size:7px;line-height:7px">2194</div>
<div class="a t" style="left:567px;width:40px;text-align:center;top:379px"><span class="c">值</span></div>
<div class="a t" style="left:611px;width:40px;text-align:center;top:379px"><span class="c">检测</span></div>
<div class="a t" style="left:656px;width:40px;text-align:center;top:379px"><span class="c">下限</span></div>
<div class="a" style="left:709px;top:384px;width:1px;height:1px;background:#333"></div>
<div class="a" style="left:534px;top:390px;width:176px;height:1px;background:#8e8e8e"></div>
<div class="a t" style="left:540px;width:24px;text-align:right;top:396.5px"><span class="c">面积</span></div>
<div class="a m" style="left:571px;top:397.0px;font-size:7px;line-height:7px;color:#3a82d2">97.8819</div>
<div class="a m" style="left:602.5px;top:397.0px;font-size:7px;line-height:7px">%</div>
<div class="cb" style="left:620px;top:396.5px;border-color:#c8c8c8;background:#f6f6f6"></div>
<svg class="a" style="left:621px;top:397.5px" width="6" height="6"><polyline points="0.8,3 2.4,5 5.4,0.8" fill="none" stroke="#b0b0b0" stroke-width="0.9"/></svg>
<div class="a t" style="left:630px;top:396.5px;color:#a8a8a8"><span class="c">面积</span></div>
<div class="a m" style="left:660px;top:397.0px;font-size:7px;line-height:7px">60.0000</div>
<div class="a m" style="left:696px;top:397.0px;font-size:7px;line-height:7px">100.</div>
<div class="a t" style="left:540px;width:24px;text-align:right;top:408.8px"><span class="c">体积</span></div>
<div class="a m" style="left:571px;top:409.3px;font-size:7px;line-height:7px;color:#3a82d2">100.165</div>
<div class="a m" style="left:602.5px;top:409.3px;font-size:7px;line-height:7px">%</div>
<div class="cb" style="left:620px;top:408.8px;border-color:#c8c8c8;background:#f6f6f6"></div>
<svg class="a" style="left:621px;top:409.8px" width="6" height="6"><polyline points="0.8,3 2.4,5 5.4,0.8" fill="none" stroke="#b0b0b0" stroke-width="0.9"/></svg>
<div class="a t" style="left:630px;top:408.8px;color:#a8a8a8"><span class="c">体积</span></div>
<div class="a m" style="left:660px;top:409.3px;font-size:7px;line-height:7px">40.0000</div>
<div class="a m" style="left:696px;top:409.3px;font-size:7px;line-height:7px">200.</div>
</body></html>
